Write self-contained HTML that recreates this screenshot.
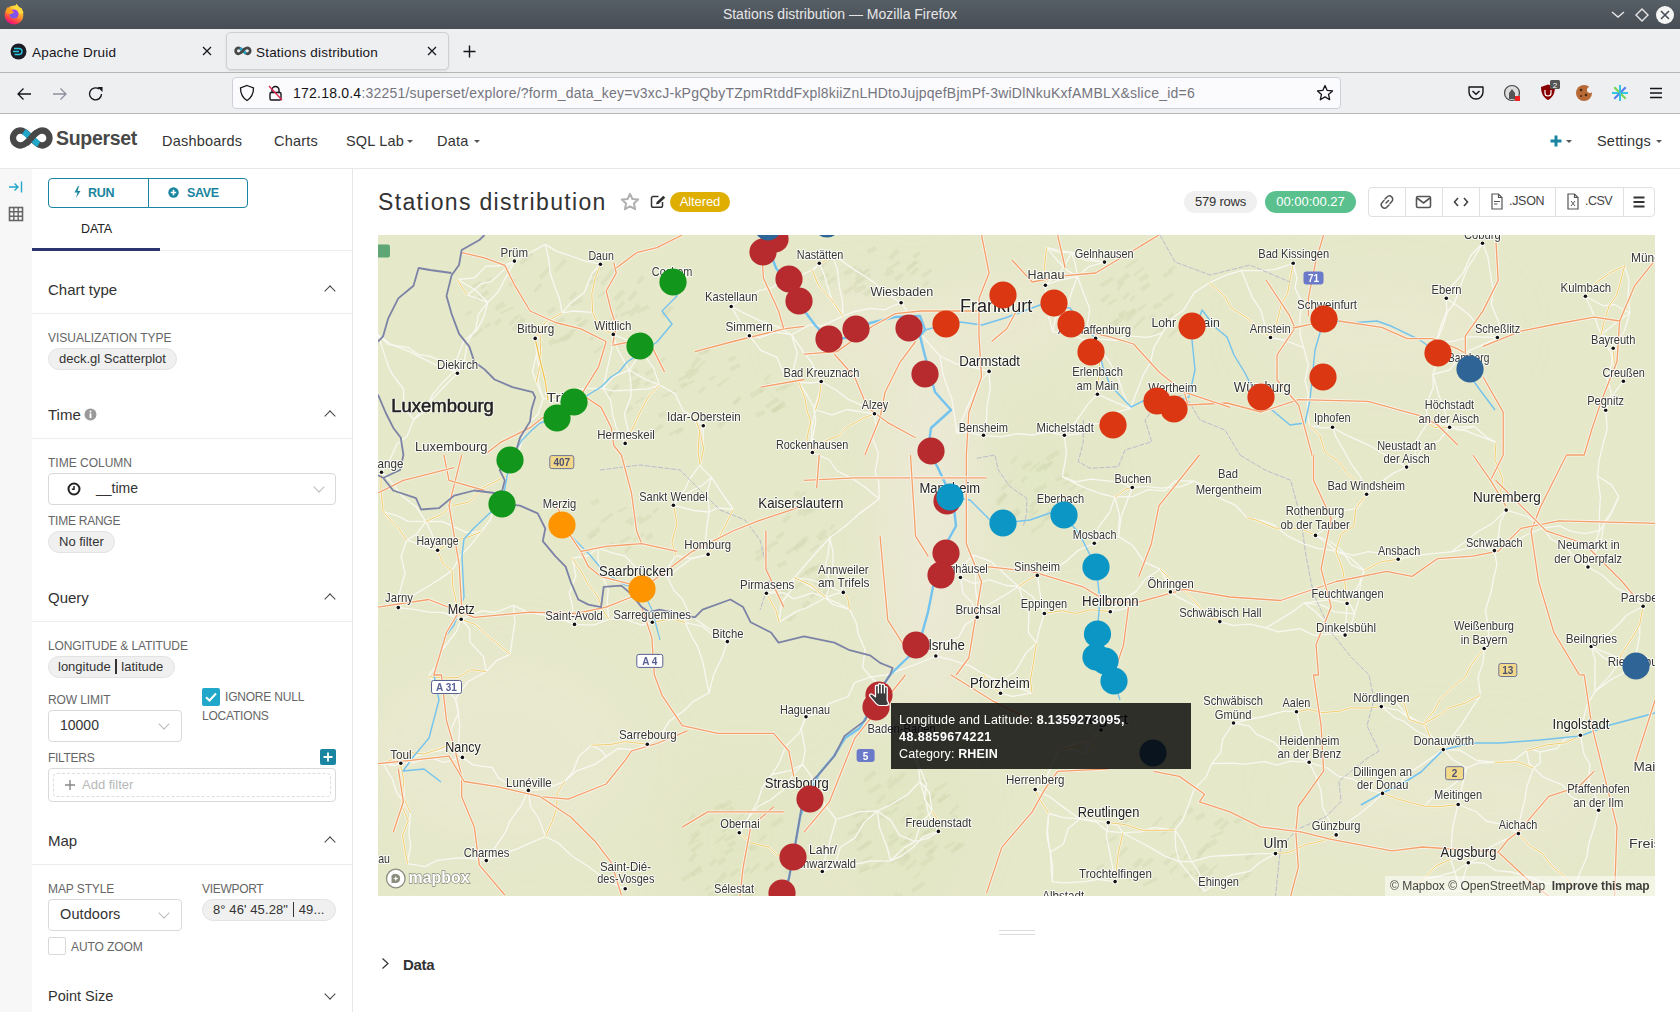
<!DOCTYPE html>
<html><head><meta charset="utf-8">
<style>
*{box-sizing:border-box;margin:0;padding:0}
html,body{width:1680px;height:1012px;overflow:hidden;background:#fff;font-family:"Liberation Sans",sans-serif;color:#333;position:relative}
.a{position:absolute;white-space:nowrap}
#titlebar{left:0;top:0;width:1680px;height:29px;background:linear-gradient(#565e66,#474d55)}
#tabbar{left:0;top:29px;width:1680px;height:43px;background:#eeeff1}
#navbar{left:0;top:72px;width:1680px;height:41px;background:#eeeff1;border-top:1px solid #b4b6b4}
#navsep{left:0;top:113px;width:1680px;height:1px;background:#b8bab8}
#sstop{left:0;top:114px;width:1680px;height:55px;background:#fff;border-bottom:1px solid #e8e8e8}
#rail{left:0;top:169px;width:32px;height:843px;background:#f7f7f7}
#panel{left:32px;top:169px;width:321px;height:843px;background:#fff;border-right:1px solid #e6e6e6}
.lbl{font-size:12px;color:#666;letter-spacing:0}
.sec{font-size:15px;color:#323232}
.hr{height:1px;background:#ececec}
.pill{background:#f0f0f0;border:1px solid #e3e3e3;border-radius:12px;font-size:13px;color:#333;height:22px;line-height:20px;padding:0 10px}
.sel{border:1px solid #d9d9d9;border-radius:4px;background:#fff;font-size:14.5px;color:#333}
.chev{width:8px;height:8px;border-left:1.5px solid #444;border-top:1.5px solid #444;transform:rotate(45deg)}
.chevd{width:8px;height:8px;border-right:1.3px solid #bbb;border-bottom:1.3px solid #bbb;transform:rotate(45deg)}
</style></head><body>
<!-- Firefox title bar -->
<div id="titlebar" class="a"></div>
<div class="a" style="left:0;top:0;width:1680px;height:29px;line-height:29px;text-align:center;font-size:14px;color:#e6e6e6">Stations distribution — Mozilla Firefox</div>
<div id="tabbar" class="a"></div>
<div id="navbar" class="a"></div>
<div id="navsep" class="a"></div>
<div id="sstop" class="a"></div>
<!-- firefox icon -->
<svg class="a" style="left:0;top:0" width="28" height="28" viewBox="0 0 28 28">
<defs><linearGradient id="ffr" x1="0.8" y1="0.1" x2="0.35" y2="0.95"><stop offset="0" stop-color="#ffe845"/><stop offset="0.45" stop-color="#ff9b2c"/><stop offset="0.8" stop-color="#ff3e48"/><stop offset="1" stop-color="#e8167c"/></linearGradient>
<radialGradient id="ffp" cx="0.4" cy="0.7" r="0.7"><stop offset="0" stop-color="#6d5ee8"/><stop offset="1" stop-color="#a142f0"/></radialGradient></defs>
<circle cx="14" cy="15" r="9.4" fill="url(#ffr)"/>
<path d="M13 9.5 L16.4 3.8 L19.6 7.6 L21.6 8.2 L23.6 13 L19.5 14Z" fill="#ffdc3c"/>
<circle cx="14" cy="14" r="4.6" fill="url(#ffp)"/>
<path d="M6.3 12.8 L7 6.8 L8.5 8.9 L10.2 7.2 L10.9 9.6 L14 12.3 L10.8 14.3 L8.8 13.4Z" fill="#ff9f1c"/>
</svg>
<!-- window controls -->
<svg class="a" style="left:1608px;top:6px" width="70" height="18" viewBox="0 0 70 18">
<path d="M4 6 L10 11 L16 6" fill="none" stroke="#e8e8e8" stroke-width="1.4"/>
<path d="M34 3 L40 9 L34 15 L28 9Z" fill="none" stroke="#e8e8e8" stroke-width="1.4"/>
<circle cx="57" cy="9" r="9" fill="#f5f5f5"/><path d="M53 5 L61 13 M61 5 L53 13" stroke="#474e57" stroke-width="1.6"/></svg>
<!-- tabs -->
<div class="a" style="left:227px;top:33px;width:221px;height:36px;border-radius:4px;background:#eeeff1;box-shadow:0 0 0 1px #cfd0d0,0 1px 3px rgba(0,0,0,0.18)"></div>
<svg class="a" style="left:10px;top:43px" width="17" height="17" viewBox="0 0 17 17"><circle cx="8.5" cy="8.5" r="8" fill="#1c1c26"/><path d="M4 5.5 H9 A3 3 0 0 1 9 11.5 H5 M3 8.5 H9 M4 11.5 H4.5" fill="none" stroke="#2ac6de" stroke-width="1.4"/></svg>
<div class="a" style="left:32px;top:44px;font-size:13.5px;line-height:17px;color:#15141a;letter-spacing:0.2px">Apache Druid</div>
<svg class="a" style="left:201px;top:45px" width="12" height="12" viewBox="0 0 12 12"><path d="M2 2 L10 10 M10 2 L2 10" stroke="#15141a" stroke-width="1.2"/></svg>
<svg class="a" style="left:234px;top:46px" width="18" height="10" viewBox="0 0 45 23">
<path d="M22.25 11 C19.5 8 16 3.5 11.5 3.5 A7.5 7.5 0 0 0 11.5 18.5 C16 18.5 19.5 14 22.25 11 C25 8 28.5 3.5 33 3.5 A7.5 7.5 0 0 1 33 18.5 C28.5 18.5 25 14 22.25 11 Z" fill="none" stroke="#484848" stroke-width="6.8"/>
<path d="M14.8 4.6 C17.2 6.2 19.2 8.4 21 10" fill="none" stroke="#20a7c9" stroke-width="6.8"/>
<path d="M23.5 12 C25.3 13.6 27.3 15.8 29.7 17.4" fill="none" stroke="#20a7c9" stroke-width="6.8"/>
<path d="M17 16.6 C19.5 14.6 21 12.6 22.25 11 C23.5 9.4 25 7.4 27.5 5.4" fill="none" stroke="#484848" stroke-width="6.8"/>
</svg>
<div class="a" style="left:256px;top:44px;font-size:13.5px;line-height:17px;color:#15141a;letter-spacing:0.2px">Stations distribution</div>
<svg class="a" style="left:426px;top:45px" width="12" height="12" viewBox="0 0 12 12"><path d="M2 2 L10 10 M10 2 L2 10" stroke="#15141a" stroke-width="1.2"/></svg>
<svg class="a" style="left:462px;top:44px" width="15" height="15" viewBox="0 0 15 15"><path d="M7.5 1.5 V13.5 M1.5 7.5 H13.5" stroke="#15141a" stroke-width="1.4"/></svg>
<!-- nav -->
<svg class="a" style="left:16px;top:86px" width="16" height="16" viewBox="0 0 16 16"><path d="M15 8 H2 M7.5 2.5 L2 8 L7.5 13.5" fill="none" stroke="#15141a" stroke-width="1.3"/></svg>
<svg class="a" style="left:52px;top:86px" width="16" height="16" viewBox="0 0 16 16"><path d="M1 8 H14 M8.5 2.5 L14 8 L8.5 13.5" fill="none" stroke="#8f8f9d" stroke-width="1.3"/></svg>
<svg class="a" style="left:88px;top:86px" width="16" height="16" viewBox="0 0 16 16"><path d="M13.5 8 A6 6 0 1 1 11 3" fill="none" stroke="#15141a" stroke-width="1.4"/><path d="M9.5 1 L14.5 1 L14.5 6Z" fill="#15141a"/></svg>
<div class="a" style="left:232px;top:77px;width:1109px;height:32px;border-radius:4px;background:#fbfbfd;border:1px solid #cfcfd8"></div>
<svg class="a" style="left:239px;top:84px" width="16" height="18" viewBox="0 0 16 18"><path d="M8 1.5 L14.5 4 C14.5 10 12 14 8 16.5 C4 14 1.5 10 1.5 4Z" fill="none" stroke="#15141a" stroke-width="1.3"/></svg>
<svg class="a" style="left:267px;top:84px" width="17" height="18" viewBox="0 0 17 18"><path d="M5 8 V6 A3.5 3.5 0 0 1 12 6 V8" fill="none" stroke="#15141a" stroke-width="1.4"/><rect x="3" y="8.5" width="11" height="7.5" rx="1.2" fill="none" stroke="#15141a" stroke-width="1.4"/><path d="M2 2 L15 16" stroke="#e22850" stroke-width="1.4"/></svg>
<div class="a" style="left:293px;top:85px;font-size:14px;line-height:16px;color:#75757d;letter-spacing:0.22px"><span style="color:#15141a">172.18.0.4</span>:32251/superset/explore/?form_data_key=v3xcJ-kPgQbyTZpmRtddFxpl8kiiZnLHDtoJujpqefBjmPf-3wiDlNkuKxfAMBLX&amp;slice_id=6</div>
<svg class="a" style="left:1316px;top:84px" width="18" height="18" viewBox="0 0 18 18"><path d="M9 1.5 L11.2 6.4 L16.5 6.9 L12.5 10.4 L13.7 15.7 L9 12.9 L4.3 15.7 L5.5 10.4 L1.5 6.9 L6.8 6.4Z" fill="none" stroke="#15141a" stroke-width="1.3" stroke-linejoin="round"/></svg>
<!-- extension icons -->
<svg class="a" style="left:1467px;top:85px" width="18" height="16" viewBox="0 0 18 16"><path d="M2 2 H16 V7 A7 7 0 0 1 2 7Z" fill="none" stroke="#15141a" stroke-width="1.4" stroke-linejoin="round"/><path d="M5.5 6 L9 9.3 L12.5 6" fill="none" stroke="#15141a" stroke-width="1.5"/></svg>
<svg class="a" style="left:1503px;top:84px" width="18" height="18" viewBox="0 0 18 18"><circle cx="9" cy="9" r="7.5" fill="#ddd" stroke="#444" stroke-width="1.2"/><path d="M6 15 V9 L9 5 L12 9 V15" fill="#555"/><rect x="12" y="12" width="5" height="5" fill="#e22"/></svg>
<svg class="a" style="left:1539px;top:80px" width="22" height="22" viewBox="0 0 22 22"><path d="M2 7 L9 4.5 L16 7 C16 14 13 18 9 20 C5 18 2 14 2 7Z" fill="#800"/><rect x="11" y="0" width="10" height="9" rx="1.5" fill="#555"/><text x="16" y="7.5" font-size="8" fill="#fff" text-anchor="middle" font-family="Liberation Sans">2</text><path d="M6 10 V13 A3 3 0 0 0 12 13 V10" fill="none" stroke="#fff" stroke-width="1.2"/></svg>
<svg class="a" style="left:1575px;top:84px" width="18" height="18" viewBox="0 0 18 18"><circle cx="9" cy="9" r="8" fill="#b86a36"/><circle cx="6" cy="6" r="1.3" fill="#4a2810"/><circle cx="11" cy="11" r="1.3" fill="#4a2810"/><circle cx="6" cy="12" r="1" fill="#4a2810"/><circle cx="15" cy="6" r="3" fill="#f0f0f4"/></svg>
<svg class="a" style="left:1610px;top:83px" width="20" height="20" viewBox="0 0 20 20"><path d="M2 10 H18" stroke="#36c5e0" stroke-width="2"/><path d="M4.3 4.3 L15.7 15.7" stroke="#74d654" stroke-width="2"/><path d="M15.7 4.3 L4.3 15.7" stroke="#4f7ef0" stroke-width="2"/><path d="M10 2 V18" stroke="#36c5e0" stroke-width="2"/></svg>
<svg class="a" style="left:1649px;top:87px" width="14" height="12" viewBox="0 0 14 12"><path d="M1 1.5 H13 M1 6 H13 M1 10.5 H13" stroke="#15141a" stroke-width="1.3"/></svg>

<div id="rail" class="a"></div>
<div id="panel" class="a"></div>

<!-- superset navbar -->
<svg class="a" style="left:9px;top:127px" width="45" height="23" viewBox="0 0 45 23">
<path d="M22.25 11 C19.5 8 16 3.5 11.5 3.5 A7.5 7.5 0 0 0 11.5 18.5 C16 18.5 19.5 14 22.25 11 C25 8 28.5 3.5 33 3.5 A7.5 7.5 0 0 1 33 18.5 C28.5 18.5 25 14 22.25 11 Z" fill="none" stroke="#484848" stroke-width="6.3"/>
<path d="M14.8 4.6 C17.2 6.2 19.2 8.4 21 10" fill="none" stroke="#20a7c9" stroke-width="6.3"/>
<path d="M23.5 12 C25.3 13.6 27.3 15.8 29.7 17.4" fill="none" stroke="#20a7c9" stroke-width="6.3"/>
<path d="M17 16.6 C19.5 14.6 21 12.6 22.25 11 C23.5 9.4 25 7.4 27.5 5.4" fill="none" stroke="#484848" stroke-width="6.3"/>
</svg>
<div class="a" style="left:56px;top:127px;font-size:19.5px;line-height:22px;font-weight:700;color:#484848;letter-spacing:-0.3px">Superset</div>
<div class="a" style="left:162px;top:133px;font-size:14.5px;line-height:17px;color:#333;letter-spacing:0.2px">Dashboards</div>
<div class="a" style="left:274px;top:133px;font-size:14.5px;line-height:17px;color:#333;letter-spacing:0.2px">Charts</div>
<div class="a" style="left:346px;top:133px;font-size:14.5px;line-height:17px;color:#333;letter-spacing:0.2px">SQL Lab</div>
<div class="a" style="left:407px;top:140px;width:0;height:0;border-left:3px solid transparent;border-right:3px solid transparent;border-top:3.5px solid #555"></div>
<div class="a" style="left:437px;top:133px;font-size:14.5px;line-height:17px;color:#333;letter-spacing:0.2px">Data</div>
<div class="a" style="left:474px;top:140px;width:0;height:0;border-left:3px solid transparent;border-right:3px solid transparent;border-top:3.5px solid #555"></div>
<svg class="a" style="left:1550px;top:135px" width="12" height="12" viewBox="0 0 12 12"><path d="M6 0.5 V11.5 M0.5 6 H11.5" stroke="#1a85a0" stroke-width="3"/></svg>
<div class="a" style="left:1566px;top:140px;width:0;height:0;border-left:3px solid transparent;border-right:3px solid transparent;border-top:3.5px solid #555"></div>
<div class="a" style="left:1597px;top:133px;font-size:14.5px;line-height:17px;color:#333;letter-spacing:0.2px">Settings</div>
<div class="a" style="left:1656px;top:140px;width:0;height:0;border-left:3px solid transparent;border-right:3px solid transparent;border-top:3.5px solid #555"></div>
<!-- rail icons -->
<svg class="a" style="left:8px;top:180px" width="16" height="14" viewBox="0 0 16 14"><path d="M1 7 H10 M6.5 3.5 L10 7 L6.5 10.5" fill="none" stroke="#20a7c9" stroke-width="1.4"/><path d="M13.5 1.5 V12.5" stroke="#20a7c9" stroke-width="1.4"/></svg>
<svg class="a" style="left:8px;top:206px" width="16" height="16" viewBox="0 0 16 16"><rect x="1.5" y="1.5" width="13" height="13" fill="none" stroke="#666" stroke-width="1.6"/><path d="M5.8 1.5 V14.5 M10.2 1.5 V14.5 M1.5 5.8 H14.5 M1.5 10.2 H14.5" stroke="#666" stroke-width="1.4"/></svg>
<!-- left panel -->
<div class="a" style="left:48px;top:178px;width:200px;height:30px;border:1px solid #1a85a0;border-radius:4px"></div>
<div class="a" style="left:148px;top:178px;width:1px;height:30px;background:#1a85a0"></div>
<svg class="a" style="left:73px;top:185px" width="9" height="14" viewBox="0 0 9 14"><path d="M5 1 L1.5 7.5 H4.5 L3 13 L7.5 6 H4.5 L6 1Z" fill="#1a85a0"/></svg>
<div class="a" style="left:88px;top:186px;font-size:12.5px;line-height:15px;font-weight:700;color:#1a85a0;letter-spacing:-0.3px">RUN</div>
<svg class="a" style="left:168px;top:187px" width="11" height="11" viewBox="0 0 11 11"><circle cx="5.5" cy="5.5" r="5.2" fill="#1a85a0"/><path d="M5.5 2.8 V8.2 M2.8 5.5 H8.2" stroke="#fff" stroke-width="1.6"/></svg>
<div class="a" style="left:187px;top:186px;font-size:12.5px;line-height:15px;font-weight:700;color:#1a85a0;letter-spacing:-0.3px">SAVE</div>
<div class="a" style="left:81px;top:222px;font-size:12.5px;line-height:15px;color:#222;letter-spacing:-0.1px">DATA</div>
<div class="a" style="left:32px;top:250px;width:320px;height:1px;background:#ececec"></div>
<div class="a" style="left:32px;top:248px;width:128px;height:3px;background:#2b3670"></div>

<div class="a sec" style="left:48px;top:281px;line-height:18px">Chart type</div>
<div class="a chev" style="left:326px;top:287px"></div>
<div class="a hr" style="left:32px;top:313px;width:320px"></div>
<div class="a lbl" style="left:48px;top:331px;line-height:14px">VISUALIZATION TYPE</div>
<div class="a pill" style="left:48px;top:348px;width:129px">deck.gl Scatterplot</div>

<div class="a sec" style="left:48px;top:406px;line-height:18px">Time</div>
<svg class="a" style="left:84px;top:408px" width="13" height="13" viewBox="0 0 13 13"><circle cx="6.5" cy="6.5" r="6" fill="#999"/><rect x="5.6" y="5.3" width="1.8" height="4.8" fill="#fff"/><circle cx="6.5" cy="3.5" r="1" fill="#fff"/></svg>
<div class="a chev" style="left:326px;top:412px"></div>
<div class="a hr" style="left:32px;top:438px;width:320px"></div>
<div class="a lbl" style="left:48px;top:456px;line-height:14px">TIME COLUMN</div>
<div class="a sel" style="left:48px;top:473px;width:288px;height:32px"></div>
<svg class="a" style="left:67px;top:482px" width="14" height="14" viewBox="0 0 14 14"><circle cx="7" cy="7" r="5.5" fill="none" stroke="#222" stroke-width="2"/><path d="M7 4 V7.3 H4.8" fill="none" stroke="#222" stroke-width="1.5"/></svg>
<div class="a" style="left:96px;top:480px;font-size:14px;line-height:17px;color:#333">__time</div>
<div class="a chevd" style="left:315px;top:483px"></div>
<div class="a lbl" style="left:48px;top:514px;line-height:14px;letter-spacing:-0.25px">TIME RANGE</div>
<div class="a pill" style="left:48px;top:531px;width:67px">No filter</div>

<div class="a sec" style="left:48px;top:589px;line-height:18px">Query</div>
<div class="a chev" style="left:326px;top:595px"></div>
<div class="a hr" style="left:32px;top:621px;width:320px"></div>
<div class="a lbl" style="left:48px;top:639px;line-height:14px;letter-spacing:-0.1px">LONGITUDE &amp; LATITUDE</div>
<div class="a pill" style="left:48px;top:656px;width:127px;padding:0 9px">longitude <span style="display:inline-block;width:1.3px;height:15px;background:#333;vertical-align:-3px;margin:0 1px"></span> latitude</div>
<div class="a lbl" style="left:48px;top:693px;line-height:14px;letter-spacing:-0.1px">ROW LIMIT</div>
<div class="a sel" style="left:48px;top:710px;width:134px;height:32px"></div>
<div class="a" style="left:60px;top:717px;font-size:14px;line-height:17px;color:#333">10000</div>
<div class="a chevd" style="left:160px;top:720px"></div>
<div class="a" style="left:202px;top:688px;width:18px;height:18px;background:#20a7c9;border-radius:2px"></div>
<svg class="a" style="left:202px;top:688px" width="18" height="18" viewBox="0 0 18 18"><path d="M4 9.2 L7.5 12.5 L14 5.5" fill="none" stroke="#fff" stroke-width="2"/></svg>
<div class="a lbl" style="left:225px;top:690px;line-height:14px;letter-spacing:-0.2px">IGNORE NULL</div>
<div class="a lbl" style="left:202px;top:709px;line-height:14px;letter-spacing:-0.2px">LOCATIONS</div>
<div class="a lbl" style="left:48px;top:751px;line-height:14px;letter-spacing:-0.3px">FILTERS</div>
<div class="a" style="left:320px;top:749px;width:16px;height:16px;background:#1a85a0;border-radius:2px"></div>
<svg class="a" style="left:320px;top:749px" width="16" height="16" viewBox="0 0 16 16"><path d="M8 3.5 V12.5 M3.5 8 H12.5" stroke="#fff" stroke-width="1.8"/></svg>
<div class="a" style="left:48px;top:768px;width:288px;height:34px;border:1px solid #d9d9d9;border-radius:4px"></div>
<div class="a" style="left:53px;top:773px;width:278px;height:24px;border:1px dashed #ddd;border-radius:4px"></div>
<svg class="a" style="left:64px;top:779px" width="12" height="12" viewBox="0 0 12 12"><path d="M6 1 V11 M1 6 H11" stroke="#888" stroke-width="1.4"/></svg>
<div class="a" style="left:82px;top:777px;font-size:13px;line-height:15px;color:#b8b8b8">Add filter</div>

<div class="a sec" style="left:48px;top:832px;line-height:18px">Map</div>
<div class="a chev" style="left:326px;top:838px"></div>
<div class="a hr" style="left:32px;top:864px;width:320px"></div>
<div class="a lbl" style="left:48px;top:882px;line-height:14px;letter-spacing:-0.1px">MAP STYLE</div>
<div class="a lbl" style="left:202px;top:882px;line-height:14px;letter-spacing:-0.3px">VIEWPORT</div>
<div class="a sel" style="left:48px;top:899px;width:134px;height:32px"></div>
<div class="a" style="left:60px;top:906px;font-size:14.5px;line-height:17px;color:#333;letter-spacing:0.1px">Outdoors</div>
<div class="a chevd" style="left:160px;top:909px"></div>
<div class="a pill" style="left:202px;top:899px;width:134px;padding:0 0 0 10px;letter-spacing:0.1px">8° 46' 45.28" <span style="display:inline-block;width:1.3px;height:15px;background:#333;vertical-align:-3px;margin:0 1px"></span> 49...</div>
<div class="a" style="left:48px;top:937px;width:18px;height:18px;border:1px solid #d9d9d9;border-radius:2px;background:#fff"></div>
<div class="a lbl" style="left:71px;top:940px;line-height:14px;letter-spacing:-0.1px">AUTO ZOOM</div>
<div class="a sec" style="left:48px;top:987px;line-height:18px;font-size:14.5px">Point Size</div>
<div class="a" style="left:326px;top:990px;width:8px;height:8px;border-right:1.5px solid #444;border-bottom:1.5px solid #444;transform:rotate(45deg)"></div>


<!-- chart header -->
<div class="a" style="left:378px;top:189px;font-size:23px;line-height:26px;color:#323232;letter-spacing:1.33px">Stations distribution</div>
<svg class="a" style="left:620px;top:192px" width="20" height="19" viewBox="0 0 20 19"><path d="M10 1.8 L12.4 7 L18.2 7.6 L13.9 11.5 L15.1 17.2 L10 14.3 L4.9 17.2 L6.1 11.5 L1.8 7.6 L7.6 7Z" fill="none" stroke="#b0b0b0" stroke-width="2" stroke-linejoin="round"/></svg>
<svg class="a" style="left:650px;top:195px" width="17" height="14" viewBox="0 0 17 14"><path d="M8.5 1.6 H3 A1.5 1.5 0 0 0 1.5 3.1 V10.8 A1.5 1.5 0 0 0 3 12.3 H11 A1.5 1.5 0 0 0 12.5 10.8 V7" fill="none" stroke="#333" stroke-width="1.5"/><path d="M6 9.3 L6.6 7 L13.3 0.8 L15.2 2.7 L8.6 8.9Z" fill="#333"/></svg>
<div class="a" style="left:670px;top:192px;width:60px;height:20px;border-radius:10px;background:#deae00;color:#fff;font-size:13px;line-height:20px;text-align:center;letter-spacing:-0.1px">Altered</div>
<div class="a" style="left:1184px;top:191px;width:73px;height:22px;border-radius:11px;background:#f0f0f0;color:#333;font-size:13px;line-height:22px;text-align:center;letter-spacing:-0.2px">579 rows</div>
<div class="a" style="left:1265px;top:191px;width:91px;height:22px;border-radius:11px;background:#5ac18e;color:#fff;font-size:13px;line-height:22px;text-align:center">00:00:00.27</div>
<div class="a" style="left:1368px;top:187px;width:287px;height:30px;border:1px solid #e0e0e0;border-radius:4px"></div>
<div class="a" style="left:1405px;top:188px;width:1px;height:28px;background:#e0e0e0"></div>
<div class="a" style="left:1442px;top:188px;width:1px;height:28px;background:#e0e0e0"></div>
<div class="a" style="left:1479px;top:188px;width:1px;height:28px;background:#e0e0e0"></div>
<div class="a" style="left:1555px;top:188px;width:1px;height:28px;background:#e0e0e0"></div>
<div class="a" style="left:1623px;top:188px;width:1px;height:28px;background:#e0e0e0"></div>
<svg class="a" style="left:1379px;top:194px" width="16" height="16" viewBox="0 0 16 16"><path d="M7 9 L9.5 6.5 M6 5 L8 3 A2.5 2.5 0 0 1 12.8 7.5 L11 9.5 M10 11 L8 13 A2.5 2.5 0 0 1 3.2 8.5 L5 6.5" fill="none" stroke="#555" stroke-width="1.5" stroke-linecap="round"/></svg>
<svg class="a" style="left:1415px;top:195px" width="17" height="14" viewBox="0 0 17 14"><rect x="1.5" y="1.5" width="14" height="11" rx="1.5" fill="none" stroke="#555" stroke-width="1.6"/><path d="M2 3 L8.5 8 L15 3" fill="none" stroke="#555" stroke-width="1.6"/></svg>
<svg class="a" style="left:1453px;top:196px" width="16" height="12" viewBox="0 0 16 12"><path d="M5 2 L1.5 6 L5 10 M11 2 L14.5 6 L11 10" fill="none" stroke="#444" stroke-width="1.6"/></svg>
<svg class="a" style="left:1491px;top:193px" width="12" height="17" viewBox="0 0 12 17"><path d="M1 1 H7.5 L11 4.5 V16 H1Z M7.5 1 V4.5 H11" fill="none" stroke="#555" stroke-width="1.2"/><path d="M3 8.5 H9 M3 11 H6.5" stroke="#555" stroke-width="1.1"/></svg>
<div class="a" style="left:1509px;top:194px;font-size:12.5px;line-height:15px;color:#444;letter-spacing:-0.3px">.JSON</div>
<svg class="a" style="left:1567px;top:193px" width="12" height="17" viewBox="0 0 12 17"><path d="M1 1 H7.5 L11 4.5 V16 H1Z M7.5 1 V4.5 H11" fill="none" stroke="#555" stroke-width="1.2"/><path d="M4 8 L8 13 M8 8 L4 13" stroke="#555" stroke-width="1"/></svg>
<div class="a" style="left:1585px;top:194px;font-size:12.5px;line-height:15px;color:#444;letter-spacing:-0.5px">.CSV</div>
<svg class="a" style="left:1633px;top:196px" width="12" height="12" viewBox="0 0 12 12"><path d="M0.5 1.5 H11.5 M0.5 6 H11.5 M0.5 10.5 H11.5" stroke="#333" stroke-width="1.9"/></svg>
<!-- bottom -->
<div class="a" style="left:999px;top:930px;width:36px;height:1px;background:#dcdcdc"></div>
<div class="a" style="left:999px;top:934px;width:36px;height:1px;background:#dcdcdc"></div>
<svg class="a" style="left:381px;top:957px" width="9" height="13" viewBox="0 0 9 13"><path d="M1.5 1.5 L7 6.5 L1.5 11.5" fill="none" stroke="#333" stroke-width="1.2"/></svg>
<div class="a" style="left:403px;top:956px;font-size:15px;line-height:18px;font-weight:700;color:#323232;letter-spacing:-0.3px">Data</div>

<!-- MAP -->
<div id="map" class="a" style="left:378px;top:235px;width:1277px;height:661px;background:#e5e8c9;overflow:hidden"><svg width="1277" height="661" viewBox="0 0 1277 661" style="position:absolute;left:0;top:0">
<defs><filter id="bl" x="-50%" y="-50%" width="200%" height="200%"><feGaussianBlur stdDeviation="25"/></filter></defs>
<g filter="url(#bl)">
<ellipse cx="552" cy="285" rx="45" ry="200" fill="#ece9d6" opacity="0.85"/>
<ellipse cx="482" cy="95" rx="60" ry="40" fill="#ece9d6" opacity="0.6"/>
<ellipse cx="622" cy="85" rx="70" ry="40" fill="#ece9d6" opacity="0.6"/>
<ellipse cx="122" cy="515" rx="140" ry="100" fill="#ebe9d4" opacity="0.45"/>
<ellipse cx="1002" cy="95" rx="120" ry="60" fill="#ebe9d4" opacity="0.4"/>
<ellipse cx="1072" cy="565" rx="160" ry="60" fill="#ebe9d4" opacity="0.35"/>
<ellipse cx="527" cy="585" rx="55" ry="80" fill="#dfe5c0" opacity="0.5"/>
<ellipse cx="362" cy="605" rx="60" ry="60" fill="#dfe5c0" opacity="0.5"/>
<ellipse cx="662" cy="245" rx="40" ry="50" fill="#dfe5c0" opacity="0.4"/>
</g>
<polygon points="482.6,616.4 494.8,607.2 492.7,604.5 480.6,613.7" fill="#cdd2aa" opacity="0.32"/>
<polygon points="502.9,583.7 512.6,578.3 510.8,574.9 501.0,580.3" fill="#cdd2aa" opacity="0.32"/>
<polygon points="550.4,620.2 556.3,616.6 553.9,612.8 548.0,616.4" fill="#cdd2aa" opacity="0.32"/>
<polygon points="574.2,619.1 587.2,610.3 585.0,607.0 572.0,615.8" fill="#cdd2aa" opacity="0.32"/>
<polygon points="527.6,607.0 535.4,598.9 533.8,597.3 526.0,605.5" fill="#cdd2aa" opacity="0.32"/>
<polygon points="523.5,611.1 533.0,606.1 531.4,603.2 522.0,608.1" fill="#cdd2aa" opacity="0.32"/>
<polygon points="480.2,593.3 488.9,586.4 486.4,583.3 477.8,590.2" fill="#cdd2aa" opacity="0.32"/>
<polygon points="511.7,669.9 525.3,661.6 523.0,657.8 509.3,666.0" fill="#cdd2aa" opacity="0.32"/>
<polygon points="513.2,628.9 520.9,624.5 519.8,622.6 512.1,627.0" fill="#cdd2aa" opacity="0.32"/>
<polygon points="482.7,637.2 491.5,632.6 489.3,628.3 480.5,632.8" fill="#cdd2aa" opacity="0.32"/>
<polygon points="545.9,599.7 559.8,593.7 558.4,590.5 544.6,596.6" fill="#cdd2aa" opacity="0.32"/>
<polygon points="512.2,612.2 521.1,603.7 518.1,600.5 509.2,609.1" fill="#cdd2aa" opacity="0.32"/>
<polygon points="550.5,623.3 560.9,611.6 557.7,608.8 547.3,620.4" fill="#cdd2aa" opacity="0.32"/>
<polygon points="526.7,621.2 531.3,616.4 528.1,613.3 523.5,618.1" fill="#cdd2aa" opacity="0.32"/>
<polygon points="491.6,582.3 496.9,576.4 493.8,573.6 488.5,579.5" fill="#cdd2aa" opacity="0.32"/>
<polygon points="512.6,580.7 520.0,573.7 518.1,571.8 510.8,578.8" fill="#cdd2aa" opacity="0.32"/>
<polygon points="574.0,588.4 580.3,582.0 577.0,578.7 570.6,585.2" fill="#cdd2aa" opacity="0.32"/>
<polygon points="481.7,638.4 493.1,633.5 492.2,631.4 480.8,636.3" fill="#cdd2aa" opacity="0.32"/>
<polygon points="529.4,635.4 539.4,626.0 537.4,623.9 527.4,633.2" fill="#cdd2aa" opacity="0.32"/>
<polygon points="537.7,608.8 547.4,602.1 545.9,599.9 536.1,606.6" fill="#cdd2aa" opacity="0.32"/>
<polygon points="496.0,634.9 508.7,625.9 506.8,623.1 494.0,632.1" fill="#cdd2aa" opacity="0.32"/>
<polygon points="540.5,576.6 547.2,573.0 544.9,568.9 538.3,572.4" fill="#cdd2aa" opacity="0.32"/>
<polygon points="524.2,632.0 533.5,622.4 530.0,619.0 520.7,628.6" fill="#cdd2aa" opacity="0.32"/>
<polygon points="573.4,580.3 581.3,571.3 578.9,569.1 570.9,578.2" fill="#cdd2aa" opacity="0.32"/>
<polygon points="577.8,615.9 583.8,610.1 580.9,607.1 574.9,613.0" fill="#cdd2aa" opacity="0.32"/>
<polygon points="542.8,550.0 550.5,545.4 549.2,543.3 541.5,547.8" fill="#cdd2aa" opacity="0.32"/>
<polygon points="547.3,614.1 556.9,607.7 554.4,603.9 544.8,610.4" fill="#cdd2aa" opacity="0.32"/>
<polygon points="514.9,664.4 520.7,658.8 519.2,657.3 513.5,662.9" fill="#cdd2aa" opacity="0.32"/>
<polygon points="512.0,604.3 518.3,599.8 516.5,597.3 510.2,601.7" fill="#cdd2aa" opacity="0.32"/>
<polygon points="544.5,632.1 557.0,624.0 554.4,619.9 541.8,627.9" fill="#cdd2aa" opacity="0.32"/>
<polygon points="510.3,548.6 515.0,542.9 513.3,541.6 508.7,547.3" fill="#cdd2aa" opacity="0.32"/>
<polygon points="559.9,568.8 573.0,560.2 571.9,558.5 558.8,567.1" fill="#cdd2aa" opacity="0.32"/>
<polygon points="479.2,606.8 485.2,599.8 481.4,596.6 475.4,603.5" fill="#cdd2aa" opacity="0.32"/>
<polygon points="476.4,583.5 489.2,575.7 487.1,572.1 474.2,580.0" fill="#cdd2aa" opacity="0.32"/>
<polygon points="537.7,534.4 546.3,530.3 544.5,526.6 536.0,530.7" fill="#cdd2aa" opacity="0.32"/>
<polygon points="547.1,568.1 558.5,560.1 555.9,556.4 544.5,564.4" fill="#cdd2aa" opacity="0.32"/>
<polygon points="500.5,570.1 508.3,561.2 505.4,558.7 497.6,567.6" fill="#cdd2aa" opacity="0.32"/>
<polygon points="487.6,547.8 498.9,538.2 496.2,535.0 484.9,544.6" fill="#cdd2aa" opacity="0.32"/>
<polygon points="521.4,547.3 528.2,539.4 524.8,536.5 517.9,544.3" fill="#cdd2aa" opacity="0.32"/>
<polygon points="524.0,588.4 532.5,579.9 530.0,577.5 521.5,585.9" fill="#cdd2aa" opacity="0.32"/>
<polygon points="511.9,554.2 520.6,545.7 517.3,542.3 508.6,550.7" fill="#cdd2aa" opacity="0.32"/>
<polygon points="553.7,603.3 562.4,594.0 560.5,592.2 551.8,601.5" fill="#cdd2aa" opacity="0.32"/>
<polygon points="561.8,568.5 569.5,561.5 566.4,558.0 558.6,565.0" fill="#cdd2aa" opacity="0.32"/>
<polygon points="510.9,572.3 520.2,567.9 518.4,563.9 509.0,568.3" fill="#cdd2aa" opacity="0.32"/>
<polygon points="549.0,570.7 557.0,562.0 554.8,560.0 546.8,568.7" fill="#cdd2aa" opacity="0.32"/>
<polygon points="470.9,601.3 484.1,595.3 482.4,591.6 469.2,597.5" fill="#cdd2aa" opacity="0.32"/>
<polygon points="520.5,628.1 527.9,620.6 525.9,618.6 518.5,626.1" fill="#cdd2aa" opacity="0.32"/>
<polygon points="485.5,627.3 495.2,622.3 493.9,619.7 484.2,624.7" fill="#cdd2aa" opacity="0.32"/>
<polygon points="561.2,592.1 567.2,589.1 566.3,587.2 560.3,590.3" fill="#cdd2aa" opacity="0.32"/>
<polygon points="567.3,614.3 577.6,608.6 576.2,606.1 565.9,611.7" fill="#cdd2aa" opacity="0.32"/>
<polygon points="542.9,601.5 552.3,596.5 551.3,594.7 542.0,599.6" fill="#cdd2aa" opacity="0.32"/>
<polygon points="527.3,624.7 532.4,620.7 529.9,617.6 524.9,621.7" fill="#cdd2aa" opacity="0.32"/>
<polygon points="491.8,559.5 503.8,552.1 501.2,547.9 489.3,555.4" fill="#cdd2aa" opacity="0.32"/>
<polygon points="536.4,644.0 542.6,639.2 541.3,637.6 535.2,642.4" fill="#cdd2aa" opacity="0.32"/>
<polygon points="518.9,569.7 526.3,565.1 524.7,562.5 517.3,567.1" fill="#cdd2aa" opacity="0.32"/>
<polygon points="479.1,592.7 490.9,586.1 489.4,583.3 477.5,589.9" fill="#cdd2aa" opacity="0.32"/>
<polygon points="536.9,590.6 547.2,579.2 544.1,576.4 533.8,587.8" fill="#cdd2aa" opacity="0.32"/>
<polygon points="480.1,616.6 492.4,607.9 490.6,605.3 478.3,614.0" fill="#cdd2aa" opacity="0.32"/>
<polygon points="557.1,557.6 570.0,549.3 568.2,546.4 555.2,554.8" fill="#cdd2aa" opacity="0.32"/>
<polygon points="535.0,657.4 547.2,650.1 545.1,646.8 533.0,654.1" fill="#cdd2aa" opacity="0.32"/>
<polygon points="365.1,667.8 377.8,658.5 374.9,654.5 362.2,663.9" fill="#cdd2aa" opacity="0.32"/>
<polygon points="361.5,594.3 372.8,584.3 369.7,580.9 358.4,590.9" fill="#cdd2aa" opacity="0.32"/>
<polygon points="388.3,636.7 397.4,629.7 394.8,626.3 385.7,633.3" fill="#cdd2aa" opacity="0.32"/>
<polygon points="409.4,626.9 414.0,622.1 410.8,619.1 406.2,623.9" fill="#cdd2aa" opacity="0.32"/>
<polygon points="327.7,656.4 333.6,652.0 332.1,650.0 326.2,654.4" fill="#cdd2aa" opacity="0.32"/>
<polygon points="344.3,575.6 354.5,567.8 351.5,564.0 341.3,571.8" fill="#cdd2aa" opacity="0.32"/>
<polygon points="371.9,614.5 377.9,608.9 375.5,606.3 369.5,611.9" fill="#cdd2aa" opacity="0.32"/>
<polygon points="347.4,580.5 356.5,574.0 353.9,570.3 344.8,576.8" fill="#cdd2aa" opacity="0.32"/>
<polygon points="339.6,650.4 349.7,640.1 346.4,636.8 336.3,647.1" fill="#cdd2aa" opacity="0.32"/>
<polygon points="389.3,580.7 397.2,572.6 394.5,570.0 386.7,578.1" fill="#cdd2aa" opacity="0.32"/>
<polygon points="310.4,610.5 321.5,605.6 320.6,603.7 309.6,608.5" fill="#cdd2aa" opacity="0.32"/>
<polygon points="314.8,617.6 325.9,609.0 323.7,606.1 312.5,614.6" fill="#cdd2aa" opacity="0.32"/>
<polygon points="346.9,606.8 357.3,602.2 355.9,599.2 345.6,603.9" fill="#cdd2aa" opacity="0.32"/>
<polygon points="381.2,607.3 389.5,600.5 388.0,598.7 379.7,605.5" fill="#cdd2aa" opacity="0.32"/>
<polygon points="377.2,576.4 384.6,568.7 382.5,566.6 375.0,574.4" fill="#cdd2aa" opacity="0.32"/>
<polygon points="313.8,586.7 318.4,581.1 315.0,578.3 310.4,584.0" fill="#cdd2aa" opacity="0.32"/>
<polygon points="363.0,642.7 372.6,634.2 370.7,632.0 361.0,640.5" fill="#cdd2aa" opacity="0.32"/>
<polygon points="338.2,608.9 348.8,600.9 347.4,599.0 336.8,607.0" fill="#cdd2aa" opacity="0.32"/>
<polygon points="353.7,642.2 362.3,634.8 360.1,632.3 351.5,639.7" fill="#cdd2aa" opacity="0.32"/>
<polygon points="317.2,637.0 323.5,632.8 322.1,630.6 315.8,634.8" fill="#cdd2aa" opacity="0.32"/>
<polygon points="323.2,592.2 336.2,585.6 334.4,582.2 321.5,588.8" fill="#cdd2aa" opacity="0.32"/>
<polygon points="359.0,664.3 369.4,654.7 366.2,651.3 355.8,660.8" fill="#cdd2aa" opacity="0.32"/>
<polygon points="331.5,663.1 338.9,659.5 336.7,655.0 329.3,658.6" fill="#cdd2aa" opacity="0.32"/>
<polygon points="373.2,639.1 382.0,629.2 379.9,627.3 371.1,637.3" fill="#cdd2aa" opacity="0.32"/>
<polygon points="371.7,592.1 382.3,583.2 380.8,581.4 370.1,590.3" fill="#cdd2aa" opacity="0.32"/>
<polygon points="351.1,612.4 358.3,609.0 356.6,605.3 349.3,608.8" fill="#cdd2aa" opacity="0.32"/>
<polygon points="373.9,616.7 382.7,610.0 380.1,606.6 371.3,613.3" fill="#cdd2aa" opacity="0.32"/>
<polygon points="345.5,598.3 349.8,593.2 348.0,591.7 343.7,596.9" fill="#cdd2aa" opacity="0.32"/>
<polygon points="313.0,608.6 321.1,600.2 319.4,598.5 311.3,606.9" fill="#cdd2aa" opacity="0.32"/>
<polygon points="369.3,666.5 379.7,654.5 376.1,651.4 365.7,663.3" fill="#cdd2aa" opacity="0.32"/>
<polygon points="408.7,638.7 416.5,631.5 413.6,628.3 405.8,635.5" fill="#cdd2aa" opacity="0.32"/>
<polygon points="313.1,627.6 319.6,619.6 316.6,617.2 310.1,625.2" fill="#cdd2aa" opacity="0.32"/>
<polygon points="337.8,574.6 344.5,570.7 342.8,567.8 336.1,571.7" fill="#cdd2aa" opacity="0.32"/>
<polygon points="334.0,631.5 338.8,625.5 336.1,623.3 331.3,629.2" fill="#cdd2aa" opacity="0.32"/>
<polygon points="394.9,592.7 405.8,585.5 403.2,581.6 392.4,588.8" fill="#cdd2aa" opacity="0.32"/>
<polygon points="315.0,641.7 324.7,636.4 322.3,632.1 312.6,637.3" fill="#cdd2aa" opacity="0.32"/>
<polygon points="349.1,667.8 361.0,661.4 358.9,657.6 347.1,663.9" fill="#cdd2aa" opacity="0.32"/>
<polygon points="304.5,646.9 317.3,639.6 315.3,636.0 302.4,643.3" fill="#cdd2aa" opacity="0.32"/>
<polygon points="356.5,588.5 366.3,579.7 364.8,578.1 355.0,586.9" fill="#cdd2aa" opacity="0.32"/>
<polygon points="348.1,620.3 356.0,615.0 353.8,611.7 345.9,617.0" fill="#cdd2aa" opacity="0.32"/>
<polygon points="359.0,668.0 369.7,661.1 368.1,658.6 357.4,665.4" fill="#cdd2aa" opacity="0.32"/>
<polygon points="314.5,604.3 322.8,598.9 320.1,594.7 311.8,600.2" fill="#cdd2aa" opacity="0.32"/>
<polygon points="335.2,578.7 348.3,569.8 347.2,568.1 334.1,576.9" fill="#cdd2aa" opacity="0.32"/>
<polygon points="352.2,594.1 359.1,586.9 357.6,585.4 350.6,592.6" fill="#cdd2aa" opacity="0.32"/>
<polygon points="341.6,630.4 348.5,625.5 345.7,621.6 338.8,626.6" fill="#cdd2aa" opacity="0.32"/>
<polygon points="379.2,326.9 389.0,320.5 386.2,316.3 376.5,322.7" fill="#cdd2aa" opacity="0.32"/>
<polygon points="423.9,313.0 431.5,303.8 428.2,301.0 420.6,310.3" fill="#cdd2aa" opacity="0.32"/>
<polygon points="433.0,317.3 441.5,310.8 440.0,308.9 431.5,315.4" fill="#cdd2aa" opacity="0.32"/>
<polygon points="409.3,320.0 421.8,310.8 419.8,308.2 407.4,317.4" fill="#cdd2aa" opacity="0.32"/>
<polygon points="399.8,304.8 407.0,299.6 404.7,296.4 397.5,301.6" fill="#cdd2aa" opacity="0.32"/>
<polygon points="412.4,386.8 418.8,380.5 417.4,379.1 411.0,385.4" fill="#cdd2aa" opacity="0.32"/>
<polygon points="431.9,336.7 444.0,330.8 442.7,328.0 430.5,333.9" fill="#cdd2aa" opacity="0.32"/>
<polygon points="418.6,316.9 428.9,304.9 425.2,301.7 414.9,313.8" fill="#cdd2aa" opacity="0.32"/>
<polygon points="441.6,304.9 449.3,297.3 445.8,293.8 438.2,301.4" fill="#cdd2aa" opacity="0.32"/>
<polygon points="378.3,319.3 390.4,314.0 389.1,310.9 376.9,316.2" fill="#cdd2aa" opacity="0.32"/>
<polygon points="433.0,279.1 438.6,274.6 436.2,271.6 430.6,276.0" fill="#cdd2aa" opacity="0.32"/>
<polygon points="421.0,344.8 429.8,337.7 428.3,335.8 419.5,342.9" fill="#cdd2aa" opacity="0.32"/>
<polygon points="406.5,288.1 413.2,282.6 410.8,279.7 404.2,285.2" fill="#cdd2aa" opacity="0.32"/>
<polygon points="421.4,280.9 435.2,272.8 432.7,268.6 419.0,276.8" fill="#cdd2aa" opacity="0.32"/>
<polygon points="418.0,354.5 430.4,346.2 428.0,342.6 415.6,350.9" fill="#cdd2aa" opacity="0.32"/>
<polygon points="404.6,358.4 415.1,351.1 413.0,348.1 402.5,355.4" fill="#cdd2aa" opacity="0.32"/>
<polygon points="395.7,282.7 402.9,279.6 401.8,277.1 394.6,280.2" fill="#cdd2aa" opacity="0.32"/>
<polygon points="452.8,294.8 457.4,290.4 455.9,288.8 451.3,293.3" fill="#cdd2aa" opacity="0.32"/>
<polygon points="392.9,353.9 397.5,348.5 394.7,346.2 390.2,351.5" fill="#cdd2aa" opacity="0.32"/>
<polygon points="447.1,360.0 455.8,352.5 453.2,349.5 444.5,357.0" fill="#cdd2aa" opacity="0.32"/>
<polygon points="400.6,333.4 409.0,329.0 407.0,325.3 398.6,329.6" fill="#cdd2aa" opacity="0.32"/>
<polygon points="429.2,341.1 441.4,334.1 439.5,330.8 427.3,337.7" fill="#cdd2aa" opacity="0.32"/>
<polygon points="426.2,373.9 432.7,368.2 429.8,364.9 423.3,370.5" fill="#cdd2aa" opacity="0.32"/>
<polygon points="396.3,271.7 404.3,267.0 402.4,263.9 394.4,268.5" fill="#cdd2aa" opacity="0.32"/>
<polygon points="441.2,306.3 449.8,302.0 448.8,300.0 440.1,304.3" fill="#cdd2aa" opacity="0.32"/>
<polygon points="428.1,339.1 438.0,332.9 436.2,330.0 426.3,336.2" fill="#cdd2aa" opacity="0.32"/>
<polygon points="409.2,386.7 414.9,383.1 413.5,380.8 407.8,384.5" fill="#cdd2aa" opacity="0.32"/>
<polygon points="437.8,350.0 447.4,340.9 444.6,337.9 435.0,347.0" fill="#cdd2aa" opacity="0.32"/>
<polygon points="433.6,363.7 442.5,353.8 440.2,351.8 431.3,361.7" fill="#cdd2aa" opacity="0.32"/>
<polygon points="408.5,279.3 422.3,272.8 420.2,268.5 406.5,275.0" fill="#cdd2aa" opacity="0.32"/>
<polygon points="386.3,352.9 393.3,347.0 391.4,344.8 384.4,350.6" fill="#cdd2aa" opacity="0.32"/>
<polygon points="454.5,302.5 460.9,296.9 458.9,294.6 452.5,300.2" fill="#cdd2aa" opacity="0.32"/>
<polygon points="402.3,362.2 410.3,356.5 408.8,354.4 400.8,360.1" fill="#cdd2aa" opacity="0.32"/>
<polygon points="427.0,282.2 436.9,271.8 434.2,269.3 424.3,279.7" fill="#cdd2aa" opacity="0.32"/>
<polygon points="421.2,262.9 428.3,257.6 427.0,255.9 420.0,261.2" fill="#cdd2aa" opacity="0.32"/>
<polygon points="387.1,316.0 400.8,308.6 399.0,305.1 385.2,312.6" fill="#cdd2aa" opacity="0.32"/>
<polygon points="445.5,351.3 454.6,340.8 452.9,339.3 443.8,349.8" fill="#cdd2aa" opacity="0.32"/>
<polygon points="418.0,262.7 422.7,257.6 419.8,255.0 415.2,260.0" fill="#cdd2aa" opacity="0.32"/>
<polygon points="418.1,271.9 425.5,267.7 424.2,265.4 416.8,269.6" fill="#cdd2aa" opacity="0.32"/>
<polygon points="383.4,320.1 392.5,316.1 391.3,313.4 382.2,317.4" fill="#cdd2aa" opacity="0.32"/>
<polygon points="645.0,234.9 654.8,229.0 652.6,225.4 642.9,231.3" fill="#cdd2aa" opacity="0.32"/>
<polygon points="678.6,247.0 691.3,240.5 689.5,236.9 676.8,243.4" fill="#cdd2aa" opacity="0.32"/>
<polygon points="669.7,226.8 682.1,218.7 679.5,214.6 667.0,222.7" fill="#cdd2aa" opacity="0.32"/>
<polygon points="624.3,255.7 635.1,246.8 633.0,244.2 622.2,253.2" fill="#cdd2aa" opacity="0.32"/>
<polygon points="678.6,289.2 689.5,277.6 687.2,275.5 676.3,287.1" fill="#cdd2aa" opacity="0.32"/>
<polygon points="668.4,285.0 674.1,278.2 670.4,275.0 664.6,281.8" fill="#cdd2aa" opacity="0.32"/>
<polygon points="654.4,273.7 663.0,264.6 659.9,261.6 651.3,270.7" fill="#cdd2aa" opacity="0.32"/>
<polygon points="685.1,271.4 692.6,262.3 689.0,259.3 681.5,268.4" fill="#cdd2aa" opacity="0.32"/>
<polygon points="672.5,269.1 679.5,264.9 678.1,262.6 671.1,266.8" fill="#cdd2aa" opacity="0.32"/>
<polygon points="644.7,248.2 650.1,242.5 648.0,240.6 642.6,246.3" fill="#cdd2aa" opacity="0.32"/>
<polygon points="659.9,238.0 668.9,230.9 666.2,227.4 657.1,234.5" fill="#cdd2aa" opacity="0.32"/>
<polygon points="654.3,298.3 666.5,289.4 664.8,286.9 652.5,295.8" fill="#cdd2aa" opacity="0.32"/>
<polygon points="685.5,250.3 693.0,246.9 692.1,244.9 684.6,248.3" fill="#cdd2aa" opacity="0.32"/>
<polygon points="667.0,236.6 675.2,228.9 672.7,226.3 664.6,234.1" fill="#cdd2aa" opacity="0.32"/>
<polygon points="691.7,256.4 698.3,251.2 697.0,249.6 690.4,254.8" fill="#cdd2aa" opacity="0.32"/>
<polygon points="634.2,286.9 643.2,277.3 640.4,274.7 631.4,284.3" fill="#cdd2aa" opacity="0.32"/>
<polygon points="672.5,278.3 679.3,273.2 676.6,269.5 669.7,274.6" fill="#cdd2aa" opacity="0.32"/>
<polygon points="634.4,229.2 640.3,222.8 637.6,220.4 631.7,226.7" fill="#cdd2aa" opacity="0.32"/>
<polygon points="657.0,258.9 669.5,252.2 667.4,248.2 654.8,254.9" fill="#cdd2aa" opacity="0.32"/>
<polygon points="675.6,270.2 686.0,262.2 684.6,260.3 674.2,268.4" fill="#cdd2aa" opacity="0.32"/>
<polygon points="620.9,268.4 629.6,260.3 626.4,256.9 617.8,265.0" fill="#cdd2aa" opacity="0.32"/>
<polygon points="662.1,234.5 675.5,227.4 674.5,225.4 661.1,232.5" fill="#cdd2aa" opacity="0.32"/>
<polygon points="665.2,287.2 675.2,282.0 674.0,279.8 664.1,285.0" fill="#cdd2aa" opacity="0.32"/>
<polygon points="651.9,278.9 657.2,274.7 655.4,272.4 650.1,276.6" fill="#cdd2aa" opacity="0.32"/>
<polygon points="652.6,236.6 662.4,228.3 660.9,226.5 651.1,234.9" fill="#cdd2aa" opacity="0.32"/>
<polygon points="620.9,271.2 629.8,260.0 626.7,257.6 617.8,268.7" fill="#cdd2aa" opacity="0.32"/>
<polygon points="635.7,282.6 642.3,277.4 640.0,274.5 633.4,279.7" fill="#cdd2aa" opacity="0.32"/>
<polygon points="696.7,262.6 708.3,254.8 706.8,252.6 695.2,260.4" fill="#cdd2aa" opacity="0.32"/>
<polygon points="652.6,283.6 661.1,276.0 659.1,273.9 650.6,281.5" fill="#cdd2aa" opacity="0.32"/>
<polygon points="633.5,278.8 640.9,274.4 639.6,272.2 632.2,276.5" fill="#cdd2aa" opacity="0.32"/>
<polygon points="277.2,198.9 285.9,191.1 283.1,188.0 274.4,195.8" fill="#cdd2aa" opacity="0.32"/>
<polygon points="332.2,145.8 338.4,141.9 337.2,140.0 331.0,143.9" fill="#cdd2aa" opacity="0.32"/>
<polygon points="309.3,141.3 317.5,135.6 315.0,131.9 306.7,137.6" fill="#cdd2aa" opacity="0.32"/>
<polygon points="356.0,169.8 361.8,165.0 360.3,163.2 354.5,168.0" fill="#cdd2aa" opacity="0.32"/>
<polygon points="396.2,178.3 404.8,172.7 402.8,169.8 394.2,175.4" fill="#cdd2aa" opacity="0.32"/>
<polygon points="327.8,118.8 335.4,112.4 333.4,110.1 325.9,116.5" fill="#cdd2aa" opacity="0.32"/>
<polygon points="374.2,163.1 385.6,156.8 383.2,152.4 371.8,158.7" fill="#cdd2aa" opacity="0.32"/>
<polygon points="283.1,128.5 287.8,124.4 285.8,122.2 281.2,126.3" fill="#cdd2aa" opacity="0.32"/>
<polygon points="301.4,147.0 310.0,142.3 308.3,139.2 299.7,143.9" fill="#cdd2aa" opacity="0.32"/>
<polygon points="351.5,127.2 358.4,124.0 356.5,120.1 349.7,123.4" fill="#cdd2aa" opacity="0.32"/>
<polygon points="266.9,150.9 276.3,145.2 275.1,143.1 265.7,148.8" fill="#cdd2aa" opacity="0.32"/>
<polygon points="383.5,158.6 392.6,149.2 389.4,146.0 380.2,155.5" fill="#cdd2aa" opacity="0.32"/>
<polygon points="387.0,146.5 392.7,140.9 391.1,139.3 385.4,144.9" fill="#cdd2aa" opacity="0.32"/>
<polygon points="253.4,142.5 260.4,136.4 257.3,132.8 250.3,138.9" fill="#cdd2aa" opacity="0.32"/>
<polygon points="284.6,163.1 298.8,156.3 297.7,154.2 283.5,161.0" fill="#cdd2aa" opacity="0.32"/>
<polygon points="252.5,149.7 262.9,144.7 261.7,142.2 251.3,147.2" fill="#cdd2aa" opacity="0.32"/>
<polygon points="398.5,156.8 409.1,151.2 408.0,149.1 397.4,154.8" fill="#cdd2aa" opacity="0.32"/>
<polygon points="298.7,200.0 306.1,196.1 304.4,192.8 297.0,196.7" fill="#cdd2aa" opacity="0.32"/>
<polygon points="346.7,188.8 351.3,183.9 349.8,182.4 345.1,187.3" fill="#cdd2aa" opacity="0.32"/>
<polygon points="404.4,156.0 415.0,149.3 413.5,146.8 402.8,153.6" fill="#cdd2aa" opacity="0.32"/>
<polygon points="315.7,133.3 323.2,124.0 319.7,121.3 312.2,130.5" fill="#cdd2aa" opacity="0.32"/>
<polygon points="339.1,187.7 345.1,183.4 343.3,180.8 337.3,185.1" fill="#cdd2aa" opacity="0.32"/>
<polygon points="350.0,188.1 356.4,182.3 353.9,179.5 347.5,185.3" fill="#cdd2aa" opacity="0.32"/>
<polygon points="305.7,151.9 317.3,146.7 316.3,144.5 304.7,149.7" fill="#cdd2aa" opacity="0.32"/>
<polygon points="268.8,141.2 277.4,135.8 275.4,132.5 266.8,137.9" fill="#cdd2aa" opacity="0.32"/>
<polygon points="322.3,120.8 331.9,115.7 329.6,111.3 320.0,116.3" fill="#cdd2aa" opacity="0.32"/>
<polygon points="353.4,136.2 362.7,131.7 361.1,128.4 351.8,132.8" fill="#cdd2aa" opacity="0.32"/>
<polygon points="255.4,154.9 263.1,148.0 259.9,144.5 252.3,151.4" fill="#cdd2aa" opacity="0.32"/>
<polygon points="389.2,173.9 401.6,165.4 399.2,161.9 386.8,170.4" fill="#cdd2aa" opacity="0.32"/>
<polygon points="319.4,135.3 327.4,126.5 325.8,125.0 317.8,133.9" fill="#cdd2aa" opacity="0.32"/>
<polygon points="258.0,169.0 266.5,163.7 265.4,161.9 256.9,167.1" fill="#cdd2aa" opacity="0.32"/>
<polygon points="276.5,155.7 282.9,149.3 280.7,147.1 274.2,153.5" fill="#cdd2aa" opacity="0.32"/>
<polygon points="394.0,178.2 408.0,171.2 406.2,167.6 392.2,174.6" fill="#cdd2aa" opacity="0.32"/>
<polygon points="248.8,178.2 255.5,173.5 253.0,170.0 246.3,174.8" fill="#cdd2aa" opacity="0.32"/>
<polygon points="340.3,152.0 351.5,143.8 350.1,141.9 338.9,150.1" fill="#cdd2aa" opacity="0.32"/>
<polygon points="321.9,158.6 328.2,152.9 326.2,150.8 320.0,156.4" fill="#cdd2aa" opacity="0.32"/>
<polygon points="396.4,177.2 407.0,167.8 404.9,165.5 394.3,174.8" fill="#cdd2aa" opacity="0.32"/>
<polygon points="304.7,153.9 309.3,149.6 306.2,146.2 301.5,150.5" fill="#cdd2aa" opacity="0.32"/>
<polygon points="230.7,162.3 241.8,151.0 239.3,148.6 228.3,159.9" fill="#cdd2aa" opacity="0.32"/>
<polygon points="291.7,201.1 304.9,194.2 303.7,191.9 290.5,198.8" fill="#cdd2aa" opacity="0.32"/>
<polygon points="281.7,183.2 288.8,180.2 287.0,175.9 279.9,178.9" fill="#cdd2aa" opacity="0.32"/>
<polygon points="342.5,193.7 347.6,187.6 344.0,184.6 338.9,190.7" fill="#cdd2aa" opacity="0.32"/>
<polygon points="379.2,182.9 387.4,178.8 385.3,174.6 377.1,178.7" fill="#cdd2aa" opacity="0.32"/>
<polygon points="310.9,144.9 321.0,136.7 318.0,133.0 307.9,141.1" fill="#cdd2aa" opacity="0.32"/>
<polygon points="357.7,169.8 364.0,163.3 361.1,160.4 354.8,166.9" fill="#cdd2aa" opacity="0.32"/>
<polygon points="201.1,95.0 210.6,86.7 207.8,83.4 198.2,91.7" fill="#cdd2aa" opacity="0.32"/>
<polygon points="124.2,26.0 132.9,17.9 131.1,15.9 122.4,24.1" fill="#cdd2aa" opacity="0.32"/>
<polygon points="261.1,49.6 266.8,43.0 263.9,40.4 258.1,47.1" fill="#cdd2aa" opacity="0.32"/>
<polygon points="252.4,66.6 259.6,57.9 256.8,55.6 249.6,64.3" fill="#cdd2aa" opacity="0.32"/>
<polygon points="133.3,52.5 138.9,46.0 135.6,43.1 130.0,49.6" fill="#cdd2aa" opacity="0.32"/>
<polygon points="158.5,115.3 165.3,110.3 163.7,108.0 156.8,113.0" fill="#cdd2aa" opacity="0.32"/>
<polygon points="217.0,118.7 229.4,108.9 228.1,107.2 215.7,117.1" fill="#cdd2aa" opacity="0.32"/>
<polygon points="178.2,37.6 188.8,26.6 186.2,24.1 175.7,35.2" fill="#cdd2aa" opacity="0.32"/>
<polygon points="95.8,53.9 104.2,49.2 102.3,45.7 93.9,50.4" fill="#cdd2aa" opacity="0.32"/>
<polygon points="99.6,66.8 111.2,58.2 108.8,55.0 97.2,63.6" fill="#cdd2aa" opacity="0.32"/>
<polygon points="220.8,63.0 232.2,55.3 230.8,53.2 219.4,61.0" fill="#cdd2aa" opacity="0.32"/>
<polygon points="183.8,106.6 195.8,99.9 193.7,96.1 181.7,102.8" fill="#cdd2aa" opacity="0.32"/>
<polygon points="186.7,107.3 193.2,102.3 190.9,99.3 184.4,104.3" fill="#cdd2aa" opacity="0.32"/>
<polygon points="259.8,79.0 271.6,73.1 269.9,69.8 258.2,75.6" fill="#cdd2aa" opacity="0.32"/>
<polygon points="198.9,87.7 203.7,83.8 201.5,81.1 196.7,85.0" fill="#cdd2aa" opacity="0.32"/>
<polygon points="123.5,79.1 136.1,73.1 135.2,71.1 122.6,77.1" fill="#cdd2aa" opacity="0.32"/>
<polygon points="104.7,54.0 114.1,43.8 112.1,42.0 102.7,52.2" fill="#cdd2aa" opacity="0.32"/>
<polygon points="171.0,79.8 178.4,74.3 176.1,71.2 168.7,76.7" fill="#cdd2aa" opacity="0.32"/>
<polygon points="173.5,111.1 178.2,106.0 174.9,103.0 170.2,108.0" fill="#cdd2aa" opacity="0.32"/>
<polygon points="176.1,92.1 187.4,85.8 185.2,81.9 173.9,88.1" fill="#cdd2aa" opacity="0.32"/>
<polygon points="243.5,81.4 252.3,77.5 251.2,75.1 242.4,78.9" fill="#cdd2aa" opacity="0.32"/>
<polygon points="253.5,81.8 262.7,71.7 259.1,68.4 249.9,78.4" fill="#cdd2aa" opacity="0.32"/>
<polygon points="88.5,80.8 94.2,78.0 93.1,75.5 87.3,78.3" fill="#cdd2aa" opacity="0.32"/>
<polygon points="223.8,96.2 229.6,89.4 227.1,87.3 221.3,94.1" fill="#cdd2aa" opacity="0.32"/>
<polygon points="285.9,83.0 295.6,73.4 292.6,70.4 282.9,80.1" fill="#cdd2aa" opacity="0.32"/>
<polygon points="177.2,109.2 184.9,105.6 183.5,102.5 175.8,106.1" fill="#cdd2aa" opacity="0.32"/>
<polygon points="136.5,96.4 146.6,84.2 143.6,81.8 133.6,94.0" fill="#cdd2aa" opacity="0.32"/>
<polygon points="107.3,93.4 112.9,89.9 111.3,87.4 105.7,90.8" fill="#cdd2aa" opacity="0.32"/>
<polygon points="233.1,39.3 244.4,29.7 242.2,27.1 230.9,36.7" fill="#cdd2aa" opacity="0.32"/>
<polygon points="215.2,42.3 225.5,33.1 223.8,31.1 213.4,40.3" fill="#cdd2aa" opacity="0.32"/>
<polygon points="213.3,105.9 218.7,100.5 216.8,98.6 211.4,104.1" fill="#cdd2aa" opacity="0.32"/>
<polygon points="119.0,76.1 127.9,70.5 125.3,66.3 116.4,71.8" fill="#cdd2aa" opacity="0.32"/>
<polygon points="210.8,49.6 219.1,44.5 218.0,42.6 209.6,47.7" fill="#cdd2aa" opacity="0.32"/>
<polygon points="143.1,89.9 147.6,85.6 145.8,83.8 141.4,88.1" fill="#cdd2aa" opacity="0.32"/>
<polygon points="95.3,103.3 105.2,94.7 103.3,92.5 93.4,101.2" fill="#cdd2aa" opacity="0.32"/>
<polygon points="239.6,113.0 247.9,108.1 245.7,104.4 237.4,109.4" fill="#cdd2aa" opacity="0.32"/>
<polygon points="193.3,65.2 199.3,58.2 196.9,56.1 190.9,63.1" fill="#cdd2aa" opacity="0.32"/>
<polygon points="225.3,50.3 234.1,39.8 231.4,37.5 222.6,48.0" fill="#cdd2aa" opacity="0.32"/>
<polygon points="137.8,84.4 143.1,80.8 141.7,78.8 136.5,82.4" fill="#cdd2aa" opacity="0.32"/>
<polygon points="240.1,76.1 247.0,68.5 244.4,66.1 237.5,73.7" fill="#cdd2aa" opacity="0.32"/>
<polygon points="163.9,44.2 172.8,34.5 169.9,31.7 160.9,41.5" fill="#cdd2aa" opacity="0.32"/>
<polygon points="194.4,98.4 204.4,89.9 202.3,87.5 192.3,96.0" fill="#cdd2aa" opacity="0.32"/>
<polygon points="214.8,49.7 221.0,43.4 218.9,41.2 212.6,47.6" fill="#cdd2aa" opacity="0.32"/>
<polygon points="194.1,71.7 205.0,65.9 203.2,62.6 192.4,68.5" fill="#cdd2aa" opacity="0.32"/>
<polygon points="238.6,66.6 247.5,57.6 244.1,54.2 235.2,63.3" fill="#cdd2aa" opacity="0.32"/>
<polygon points="144.6,30.4 155.7,19.5 152.4,16.2 141.4,27.2" fill="#cdd2aa" opacity="0.32"/>
<polygon points="157.7,57.8 164.3,49.9 161.9,47.9 155.3,55.7" fill="#cdd2aa" opacity="0.32"/>
<polygon points="132.5,91.1 139.9,83.0 137.9,81.1 130.4,89.1" fill="#cdd2aa" opacity="0.32"/>
<polygon points="118.7,90.9 124.1,85.5 121.3,82.7 115.8,88.1" fill="#cdd2aa" opacity="0.32"/>
<polygon points="232.1,86.7 240.5,80.8 239.1,78.8 230.7,84.7" fill="#cdd2aa" opacity="0.32"/>
<polygon points="756.5,41.6 766.4,33.2 765.1,31.6 755.2,40.0" fill="#cdd2aa" opacity="0.32"/>
<polygon points="760.4,76.5 768.4,70.4 767.1,68.6 759.1,74.7" fill="#cdd2aa" opacity="0.32"/>
<polygon points="740.8,55.4 746.6,48.2 744.5,46.5 738.6,53.6" fill="#cdd2aa" opacity="0.32"/>
<polygon points="740.8,100.3 750.6,94.0 749.1,91.7 739.3,97.9" fill="#cdd2aa" opacity="0.32"/>
<polygon points="782.4,96.0 791.6,88.0 788.4,84.4 779.2,92.4" fill="#cdd2aa" opacity="0.32"/>
<polygon points="724.3,52.5 735.7,44.9 733.5,41.7 722.1,49.3" fill="#cdd2aa" opacity="0.32"/>
<polygon points="741.8,82.6 749.6,78.8 747.6,74.7 739.8,78.6" fill="#cdd2aa" opacity="0.32"/>
<polygon points="735.0,93.7 740.1,89.8 738.7,87.9 733.6,91.7" fill="#cdd2aa" opacity="0.32"/>
<polygon points="756.6,93.9 767.6,82.6 765.8,80.9 754.8,92.2" fill="#cdd2aa" opacity="0.32"/>
<polygon points="774.8,101.0 781.5,96.0 780.3,94.4 773.6,99.3" fill="#cdd2aa" opacity="0.32"/>
<polygon points="749.5,81.9 758.4,75.5 756.1,72.3 747.2,78.7" fill="#cdd2aa" opacity="0.32"/>
<polygon points="741.7,50.5 752.4,40.9 749.1,37.3 738.5,46.9" fill="#cdd2aa" opacity="0.32"/>
<polygon points="742.3,100.1 750.1,95.3 747.9,91.8 740.2,96.6" fill="#cdd2aa" opacity="0.32"/>
<polygon points="747.7,33.8 759.5,25.9 758.2,23.8 746.3,31.7" fill="#cdd2aa" opacity="0.32"/>
<polygon points="731.0,70.4 739.4,65.6 738.0,63.1 729.6,68.0" fill="#cdd2aa" opacity="0.32"/>
<polygon points="746.4,65.0 752.2,58.8 750.1,56.8 744.2,62.9" fill="#cdd2aa" opacity="0.32"/>
<polygon points="753.0,67.0 757.3,62.0 755.7,60.6 751.3,65.5" fill="#cdd2aa" opacity="0.32"/>
<polygon points="764.5,57.0 772.8,50.6 770.1,47.2 761.8,53.6" fill="#cdd2aa" opacity="0.32"/>
<polygon points="791.8,102.7 802.3,92.4 800.8,90.8 790.3,101.1" fill="#cdd2aa" opacity="0.32"/>
<polygon points="725.3,68.3 732.4,61.3 729.5,58.4 722.4,65.3" fill="#cdd2aa" opacity="0.32"/>
<polygon points="762.7,46.7 771.0,42.4 769.0,38.6 760.8,42.9" fill="#cdd2aa" opacity="0.32"/>
<polygon points="786.7,43.0 795.2,37.3 792.9,33.9 784.4,39.6" fill="#cdd2aa" opacity="0.32"/>
<polygon points="791.6,37.0 797.7,33.1 796.0,30.5 789.9,34.4" fill="#cdd2aa" opacity="0.32"/>
<polygon points="772.5,85.1 778.1,82.5 776.6,79.1 771.0,81.6" fill="#cdd2aa" opacity="0.32"/>
<polygon points="785.5,67.2 796.2,60.1 794.4,57.4 783.7,64.5" fill="#cdd2aa" opacity="0.32"/>
<polygon points="727.3,93.4 740.9,85.2 739.8,83.3 726.2,91.5" fill="#cdd2aa" opacity="0.32"/>
<polygon points="776.3,74.2 784.5,70.8 782.8,66.9 774.7,70.4" fill="#cdd2aa" opacity="0.32"/>
<polygon points="791.6,84.1 796.5,80.3 794.3,77.4 789.3,81.2" fill="#cdd2aa" opacity="0.32"/>
<polygon points="749.0,87.3 759.2,77.7 756.1,74.4 745.9,84.1" fill="#cdd2aa" opacity="0.32"/>
<polygon points="737.9,91.1 748.3,82.2 745.1,78.5 734.7,87.3" fill="#cdd2aa" opacity="0.32"/>
<polygon points="775.2,593.2 784.8,583.0 783.0,581.3 773.4,591.5" fill="#cdd2aa" opacity="0.32"/>
<polygon points="868.4,643.4 874.1,637.1 871.5,634.8 865.9,641.1" fill="#cdd2aa" opacity="0.32"/>
<polygon points="792.2,624.2 802.0,617.7 800.6,615.7 790.9,622.2" fill="#cdd2aa" opacity="0.32"/>
<polygon points="792.7,638.7 800.5,631.2 798.4,629.0 790.6,636.5" fill="#cdd2aa" opacity="0.32"/>
<polygon points="819.9,624.8 829.6,613.5 827.4,611.6 817.7,622.9" fill="#cdd2aa" opacity="0.32"/>
<polygon points="821.2,645.1 835.5,637.9 834.3,635.6 820.0,642.8" fill="#cdd2aa" opacity="0.32"/>
<polygon points="741.0,624.0 750.1,613.2 747.6,611.1 738.6,621.9" fill="#cdd2aa" opacity="0.32"/>
<polygon points="727.7,608.7 738.9,603.6 737.7,601.0 726.6,606.1" fill="#cdd2aa" opacity="0.32"/>
<polygon points="857.8,589.6 866.8,584.3 864.5,580.4 855.5,585.7" fill="#cdd2aa" opacity="0.32"/>
<polygon points="807.0,624.5 812.0,618.7 810.2,617.2 805.2,623.0" fill="#cdd2aa" opacity="0.32"/>
<polygon points="751.1,646.6 756.8,639.5 754.1,637.2 748.4,644.3" fill="#cdd2aa" opacity="0.32"/>
<polygon points="822.0,656.0 827.4,653.1 825.7,649.9 820.3,652.8" fill="#cdd2aa" opacity="0.32"/>
<polygon points="818.9,586.2 827.7,581.5 825.6,577.6 816.8,582.3" fill="#cdd2aa" opacity="0.32"/>
<polygon points="810.8,579.6 816.2,575.1 813.0,571.4 807.7,575.9" fill="#cdd2aa" opacity="0.32"/>
<polygon points="783.9,600.9 796.3,592.3 795.1,590.6 782.7,599.3" fill="#cdd2aa" opacity="0.32"/>
<polygon points="806.7,643.7 815.2,639.1 813.3,635.6 804.8,640.2" fill="#cdd2aa" opacity="0.32"/>
<polygon points="750.9,642.4 759.5,638.2 758.3,635.7 749.7,639.8" fill="#cdd2aa" opacity="0.32"/>
<polygon points="788.2,630.9 794.8,624.2 791.8,621.2 785.2,627.9" fill="#cdd2aa" opacity="0.32"/>
<polygon points="795.9,591.1 804.3,581.5 802.4,579.8 794.0,589.4" fill="#cdd2aa" opacity="0.32"/>
<polygon points="831.7,637.4 839.9,631.2 838.7,629.6 830.5,635.8" fill="#cdd2aa" opacity="0.32"/>
<polygon points="757.9,633.7 765.8,625.6 762.3,622.2 754.4,630.3" fill="#cdd2aa" opacity="0.32"/>
<polygon points="833.5,603.3 845.9,597.9 845.0,595.8 832.6,601.1" fill="#cdd2aa" opacity="0.32"/>
<polygon points="719.4,635.2 726.4,630.9 724.7,628.2 717.7,632.4" fill="#cdd2aa" opacity="0.32"/>
<polygon points="819.5,639.9 829.0,631.3 825.7,627.7 816.3,636.3" fill="#cdd2aa" opacity="0.32"/>
<polygon points="817.9,642.2 831.2,633.5 829.8,631.5 816.5,640.2" fill="#cdd2aa" opacity="0.32"/>
<polygon points="747.1,640.8 754.4,637.2 752.7,633.7 745.5,637.3" fill="#cdd2aa" opacity="0.32"/>
<polygon points="843.9,595.5 851.3,587.2 848.5,584.7 841.1,593.0" fill="#cdd2aa" opacity="0.32"/>
<polygon points="838.3,591.6 846.4,584.9 843.8,581.8 835.7,588.5" fill="#cdd2aa" opacity="0.32"/>
<polygon points="766.0,632.8 775.6,625.6 773.4,622.6 763.8,629.8" fill="#cdd2aa" opacity="0.32"/>
<polygon points="868.6,625.9 877.2,620.0 875.1,616.8 866.4,622.8" fill="#cdd2aa" opacity="0.32"/>
<polygon points="830.5,613.4 839.8,607.9 837.2,603.6 828.0,609.1" fill="#cdd2aa" opacity="0.32"/>
<polygon points="765.9,651.7 780.1,644.5 778.6,641.7 764.4,648.8" fill="#cdd2aa" opacity="0.32"/>
<polygon points="860.4,647.2 870.1,642.1 868.9,639.7 859.2,644.8" fill="#cdd2aa" opacity="0.32"/>
<polygon points="746.0,589.8 757.5,581.2 754.8,577.7 743.4,586.3" fill="#cdd2aa" opacity="0.32"/>
<polygon points="821.1,621.2 831.6,610.9 828.7,608.0 818.2,618.3" fill="#cdd2aa" opacity="0.32"/>
<polygon points="513.9,24.9 521.8,16.7 518.5,13.5 510.6,21.7" fill="#cdd2aa" opacity="0.32"/>
<polygon points="491.0,57.9 496.9,54.7 495.2,51.5 489.3,54.7" fill="#cdd2aa" opacity="0.32"/>
<polygon points="467.6,41.1 479.8,34.3 477.5,30.3 465.3,37.2" fill="#cdd2aa" opacity="0.32"/>
<polygon points="443.2,33.3 453.7,24.1 452.1,22.2 441.5,31.4" fill="#cdd2aa" opacity="0.32"/>
<polygon points="508.2,42.1 516.6,37.7 514.4,33.6 506.0,38.0" fill="#cdd2aa" opacity="0.32"/>
<polygon points="518.1,46.8 526.3,41.3 523.8,37.5 515.6,43.0" fill="#cdd2aa" opacity="0.32"/>
<polygon points="509.2,36.6 522.5,27.8 521.0,25.6 507.8,34.4" fill="#cdd2aa" opacity="0.32"/>
<polygon points="536.7,24.1 542.9,19.1 540.4,16.0 534.2,21.0" fill="#cdd2aa" opacity="0.32"/>
<polygon points="534.8,41.0 541.5,34.7 538.8,31.8 532.1,38.2" fill="#cdd2aa" opacity="0.32"/>
<polygon points="459.4,25.5 466.1,21.4 464.8,19.4 458.2,23.5" fill="#cdd2aa" opacity="0.32"/>
<polygon points="479.3,40.9 485.2,36.9 482.5,32.9 476.6,36.9" fill="#cdd2aa" opacity="0.32"/>
<polygon points="479.5,49.4 493.3,41.4 491.2,37.8 477.5,45.9" fill="#cdd2aa" opacity="0.32"/>
<polygon points="477.1,49.5 485.5,43.9 484.2,41.9 475.8,47.5" fill="#cdd2aa" opacity="0.32"/>
<polygon points="450.6,49.7 458.7,43.6 456.6,40.9 448.6,47.0" fill="#cdd2aa" opacity="0.32"/>
<polygon points="530.4,34.6 541.1,27.1 539.5,24.9 528.8,32.4" fill="#cdd2aa" opacity="0.32"/>
<polygon points="487.3,62.1 494.8,57.4 492.4,53.5 484.9,58.2" fill="#cdd2aa" opacity="0.32"/>
<polygon points="443.4,46.3 451.6,40.7 449.2,37.2 441.1,42.8" fill="#cdd2aa" opacity="0.32"/>
<polygon points="484.5,41.3 492.4,34.9 490.7,32.7 482.7,39.1" fill="#cdd2aa" opacity="0.32"/>
<polygon points="530.0,37.2 539.2,28.1 536.4,25.2 527.1,34.3" fill="#cdd2aa" opacity="0.32"/>
<polygon points="478.6,45.6 490.1,36.1 488.4,34.0 476.8,43.5" fill="#cdd2aa" opacity="0.32"/>
<polygon points="467.7,59.8 479.4,51.3 477.2,48.2 465.5,56.7" fill="#cdd2aa" opacity="0.32"/>
<polygon points="546.5,52.3 551.7,47.8 549.7,45.4 544.5,49.9" fill="#cdd2aa" opacity="0.32"/>
<polygon points="490.4,18.9 499.0,15.0 497.1,10.8 488.5,14.7" fill="#cdd2aa" opacity="0.32"/>
<polygon points="546.0,42.4 554.4,35.8 552.5,33.4 544.1,40.0" fill="#cdd2aa" opacity="0.32"/>
<polygon points="477.7,58.4 488.7,53.6 486.7,49.1 475.7,53.9" fill="#cdd2aa" opacity="0.32"/>
<polygon points="262.1,289.5 274.2,282.1 272.2,278.7 260.0,286.2" fill="#cdd2aa" opacity="0.32"/>
<polygon points="248.7,289.1 257.7,283.4 255.9,280.7 247.0,286.4" fill="#cdd2aa" opacity="0.32"/>
<polygon points="248.3,318.3 253.8,312.3 251.5,310.2 246.1,316.2" fill="#cdd2aa" opacity="0.32"/>
<polygon points="212.6,303.8 218.4,300.1 217.0,298.0 211.3,301.7" fill="#cdd2aa" opacity="0.32"/>
<polygon points="214.8,271.0 222.1,266.7 219.9,262.9 212.5,267.2" fill="#cdd2aa" opacity="0.32"/>
<polygon points="239.9,278.1 249.5,273.3 248.5,271.4 239.0,276.3" fill="#cdd2aa" opacity="0.32"/>
<polygon points="276.0,278.4 281.0,274.7 279.2,272.2 274.2,275.9" fill="#cdd2aa" opacity="0.32"/>
<polygon points="224.3,288.2 235.4,279.9 233.6,277.6 222.5,285.9" fill="#cdd2aa" opacity="0.32"/>
<polygon points="261.1,304.0 267.0,299.7 265.6,297.8 259.8,302.2" fill="#cdd2aa" opacity="0.32"/>
<polygon points="230.9,314.7 236.3,308.2 233.9,306.2 228.4,312.7" fill="#cdd2aa" opacity="0.32"/>
<polygon points="243.1,308.9 253.4,303.6 251.8,300.6 241.5,305.9" fill="#cdd2aa" opacity="0.32"/>
<polygon points="269.7,306.1 275.7,301.6 272.8,297.6 266.7,302.1" fill="#cdd2aa" opacity="0.32"/>
<polygon points="211.9,304.6 223.1,295.2 220.0,291.5 208.8,300.8" fill="#cdd2aa" opacity="0.32"/>
<polygon points="252.7,291.3 264.8,283.9 262.6,280.3 250.5,287.7" fill="#cdd2aa" opacity="0.32"/>
<polygon points="256.6,306.2 261.2,301.9 259.7,300.2 255.1,304.5" fill="#cdd2aa" opacity="0.32"/>
<polyline points="136.4,26.1 151.5,18.0 167.3,9.4" fill="none" stroke="#f8f8f2" stroke-width="1.3" stroke-linejoin="round"/>
<polyline points="136.4,26.1 127.3,43.4 120.2,56.7 109.7,67.5" fill="none" stroke="#f8f8f2" stroke-width="1.3" stroke-linejoin="round"/>
<polyline points="136.4,26.1 128.1,32.6 113.3,46.6 103.7,48.6 89.2,60.0" fill="none" stroke="#f8f8f2" stroke-width="1.3" stroke-linejoin="round"/>
<polyline points="222.4,29.2 205.2,25.6 197.1,22.5 178.3,16.1 167.3,9.4" fill="none" stroke="#f8f8f2" stroke-width="1.3" stroke-linejoin="round"/>
<polyline points="222.4,29.2 214.1,38.5 206.4,57.3 191.5,69.3 184.2,77.9" fill="none" stroke="#f8f8f2" stroke-width="1.3" stroke-linejoin="round"/>
<polyline points="353.2,71.5 361.5,86.0 371.4,100.7" fill="none" stroke="#f8f8f2" stroke-width="1.3" stroke-linejoin="round"/>
<polyline points="353.2,71.5 372.2,81.2 380.7,85.1 398.6,91.4 413.5,99.7" fill="none" stroke="#f8f8f2" stroke-width="1.3" stroke-linejoin="round"/>
<polyline points="353.2,71.5 364.3,63.9 382.0,55.4 394.2,52.6 403.4,45.7 421.7,41.0 434.2,34.8" fill="none" stroke="#f8f8f2" stroke-width="1.3" stroke-linejoin="round"/>
<polyline points="235.3,99.4 253.3,107.1 266.6,107.3" fill="none" stroke="#f8f8f2" stroke-width="1.3" stroke-linejoin="round"/>
<polyline points="235.3,99.4 240.1,115.4 251.2,135.1" fill="none" stroke="#f8f8f2" stroke-width="1.3" stroke-linejoin="round"/>
<polyline points="371.4,100.7 381.8,102.6 397.7,97.1 413.5,99.7" fill="none" stroke="#f8f8f2" stroke-width="1.3" stroke-linejoin="round"/>
<polyline points="371.4,100.7 383.2,115.7 398.7,122.1 405.8,139.1 421.0,147.4" fill="none" stroke="#f8f8f2" stroke-width="1.3" stroke-linejoin="round"/>
<polyline points="157.2,103.4 160.3,103.3 162.2,99.9" fill="none" stroke="#f8f8f2" stroke-width="1.3" stroke-linejoin="round"/>
<polyline points="157.2,103.4 159.0,117.5 154.4,136.3 158.1,147.6" fill="none" stroke="#f8f8f2" stroke-width="1.3" stroke-linejoin="round"/>
<polyline points="79.4,138.2 78.8,139.6 76.1,136.1" fill="none" stroke="#f8f8f2" stroke-width="1.3" stroke-linejoin="round"/>
<polyline points="79.4,138.2 65.1,152.7 54.1,164.4 46.2,171.8 35.7,184.7" fill="none" stroke="#f8f8f2" stroke-width="1.3" stroke-linejoin="round"/>
<polyline points="79.4,138.2 85.9,127.5 89.7,107.0 97.8,93.7 100.5,79.0 109.7,67.5" fill="none" stroke="#f8f8f2" stroke-width="1.3" stroke-linejoin="round"/>
<polyline points="247.2,208.4 238.1,192.2 234.6,179.3 232.6,165.4 225.0,153.3" fill="none" stroke="#f8f8f2" stroke-width="1.3" stroke-linejoin="round"/>
<polyline points="247.2,208.4 249.9,194.1 246.3,178.9 253.1,161.3 252.9,149.2 251.2,135.1" fill="none" stroke="#f8f8f2" stroke-width="1.3" stroke-linejoin="round"/>
<polyline points="325.3,190.7 323.4,194.9 321.6,193.7" fill="none" stroke="#f8f8f2" stroke-width="1.3" stroke-linejoin="round"/>
<polyline points="325.3,190.7 320.5,186.9 317.3,183.0" fill="none" stroke="#f8f8f2" stroke-width="1.3" stroke-linejoin="round"/>
<polyline points="325.3,190.7 325.2,214.0 322.1,229.6" fill="none" stroke="#f8f8f2" stroke-width="1.3" stroke-linejoin="round"/>
<polyline points="441.3,28.3 436.5,34.2 434.2,34.8" fill="none" stroke="#f8f8f2" stroke-width="1.3" stroke-linejoin="round"/>
<polyline points="441.3,28.3 446.5,40.3 449.6,51.8 455.7,69.9 465.0,81.2" fill="none" stroke="#f8f8f2" stroke-width="1.3" stroke-linejoin="round"/>
<polyline points="726.5,27.1 711.0,31.6 699.5,41.5" fill="none" stroke="#f8f8f2" stroke-width="1.3" stroke-linejoin="round"/>
<polyline points="726.5,27.1 706.7,25.2 693.6,17.9" fill="none" stroke="#f8f8f2" stroke-width="1.3" stroke-linejoin="round"/>
<polyline points="726.5,27.1 715.0,24.8 695.8,17.7 681.4,15.7 668.5,12.4" fill="none" stroke="#f8f8f2" stroke-width="1.3" stroke-linejoin="round"/>
<polyline points="667.4,50.2 680.7,45.4 699.5,41.5" fill="none" stroke="#f8f8f2" stroke-width="1.3" stroke-linejoin="round"/>
<polyline points="667.4,50.2 684.3,34.4 693.6,17.9" fill="none" stroke="#f8f8f2" stroke-width="1.3" stroke-linejoin="round"/>
<polyline points="523.1,67.7 506.5,74.8 492.5,73.3 475.6,76.9 465.0,81.2" fill="none" stroke="#f8f8f2" stroke-width="1.3" stroke-linejoin="round"/>
<polyline points="523.1,67.7 532.6,81.1 540.2,94.4 548.3,105.8 562.0,121.0" fill="none" stroke="#f8f8f2" stroke-width="1.3" stroke-linejoin="round"/>
<polyline points="523.1,67.7 508.3,58.8 496.4,47.7 487.0,41.3 477.8,35.6 467.6,28.5 454.1,19.2" fill="none" stroke="#f8f8f2" stroke-width="1.3" stroke-linejoin="round"/>
<polyline points="717.6,103.4 705.0,104.3 688.0,97.7 674.6,96.9" fill="none" stroke="#f8f8f2" stroke-width="1.3" stroke-linejoin="round"/>
<polyline points="717.6,103.4 709.4,90.6 711.7,73.5 705.9,59.5 699.5,41.5" fill="none" stroke="#f8f8f2" stroke-width="1.3" stroke-linejoin="round"/>
<polyline points="611.1,136.4 591.9,131.5 578.4,128.8 562.0,121.0" fill="none" stroke="#f8f8f2" stroke-width="1.3" stroke-linejoin="round"/>
<polyline points="611.1,136.4 612.1,155.0 609.0,171.5 608.4,185.9 605.5,200.3" fill="none" stroke="#f8f8f2" stroke-width="1.3" stroke-linejoin="round"/>
<polyline points="611.1,136.4 600.8,148.1 592.0,166.2 583.7,185.4 578.7,198.1" fill="none" stroke="#f8f8f2" stroke-width="1.3" stroke-linejoin="round"/>
<polyline points="443.2,146.5 432.6,148.0 421.0,147.4" fill="none" stroke="#f8f8f2" stroke-width="1.3" stroke-linejoin="round"/>
<polyline points="443.2,146.5 433.2,126.9 425.8,117.3 413.5,99.7" fill="none" stroke="#f8f8f2" stroke-width="1.3" stroke-linejoin="round"/>
<polyline points="719.4,159.2 735.9,166.7 752.3,173.7" fill="none" stroke="#f8f8f2" stroke-width="1.3" stroke-linejoin="round"/>
<polyline points="719.4,159.2 709.7,169.4 699.3,184.6 686.4,200.3" fill="none" stroke="#f8f8f2" stroke-width="1.3" stroke-linejoin="round"/>
<polyline points="496.5,178.8 478.4,176.0 468.9,174.5 454.2,179.8 437.5,175.0" fill="none" stroke="#f8f8f2" stroke-width="1.3" stroke-linejoin="round"/>
<polyline points="496.5,178.8 483.1,169.8 469.7,164.1 458.7,155.5 443.2,146.5" fill="none" stroke="#f8f8f2" stroke-width="1.3" stroke-linejoin="round"/>
<polyline points="605.5,200.3 588.6,197.4 578.7,198.1" fill="none" stroke="#f8f8f2" stroke-width="1.3" stroke-linejoin="round"/>
<polyline points="605.5,200.3 623.1,201.8 639.3,198.6 654.2,200.0 670.0,197.2 686.4,200.3" fill="none" stroke="#f8f8f2" stroke-width="1.3" stroke-linejoin="round"/>
<polyline points="686.4,200.3 688.5,218.6 684.3,241.7" fill="none" stroke="#f8f8f2" stroke-width="1.3" stroke-linejoin="round"/>
<polyline points="686.4,200.3 703.4,198.5 708.9,189.3 728.5,188.1 738.7,177.1 752.3,173.7" fill="none" stroke="#f8f8f2" stroke-width="1.3" stroke-linejoin="round"/>
<polyline points="434.4,217.5 433.1,206.9 434.2,189.8 437.5,175.0" fill="none" stroke="#f8f8f2" stroke-width="1.3" stroke-linejoin="round"/>
<polyline points="434.4,217.5 434.0,206.5 437.8,185.3 435.7,174.8 441.0,159.1 443.2,146.5" fill="none" stroke="#f8f8f2" stroke-width="1.3" stroke-linejoin="round"/>
<polyline points="1104.5,8.3 1092.6,20.8 1084.9,38.5 1073.4,51.5 1068.3,63.2" fill="none" stroke="#f8f8f2" stroke-width="1.3" stroke-linejoin="round"/>
<polyline points="1104.5,8.3 1109.7,21.0 1112.9,41.4 1115.2,53.7 1113.4,70.2 1120.9,87.5 1119.4,102.5" fill="none" stroke="#f8f8f2" stroke-width="1.3" stroke-linejoin="round"/>
<polyline points="1104.5,8.3 1096.8,21.8 1089.5,32.8 1081.6,53.2 1076.5,68.0 1069.6,76.7 1065.1,90.2 1058.4,106.7" fill="none" stroke="#f8f8f2" stroke-width="1.3" stroke-linejoin="round"/>
<polyline points="915.2,28.3 897.0,34.4 883.8,35.7 863.5,35.7" fill="none" stroke="#f8f8f2" stroke-width="1.3" stroke-linejoin="round"/>
<polyline points="915.2,28.3 918.9,43.5 916.9,52.7 923.8,67.4 921.9,83.1 922.2,100.3 925.6,112.4" fill="none" stroke="#f8f8f2" stroke-width="1.3" stroke-linejoin="round"/>
<polyline points="1068.3,63.2 1068.8,75.8 1063.0,90.6 1058.4,106.7" fill="none" stroke="#f8f8f2" stroke-width="1.3" stroke-linejoin="round"/>
<polyline points="1068.3,63.2 1081.5,72.2 1091.2,80.1 1104.3,95.9 1119.4,102.5" fill="none" stroke="#f8f8f2" stroke-width="1.3" stroke-linejoin="round"/>
<polyline points="1207.4,61.2 1215.2,78.2 1223.0,99.8" fill="none" stroke="#f8f8f2" stroke-width="1.3" stroke-linejoin="round"/>
<polyline points="1207.4,61.2 1225.4,70.8 1236.5,69.5 1251.7,78.0" fill="none" stroke="#f8f8f2" stroke-width="1.3" stroke-linejoin="round"/>
<polyline points="892.5,102.5 906.9,105.5 925.6,112.4" fill="none" stroke="#f8f8f2" stroke-width="1.3" stroke-linejoin="round"/>
<polyline points="892.5,102.5 887.3,92.2 882.9,75.1 874.4,62.6 868.3,47.8 863.5,35.7" fill="none" stroke="#f8f8f2" stroke-width="1.3" stroke-linejoin="round"/>
<polyline points="1119.4,102.5 1100.7,101.8 1092.7,101.6 1073.7,106.7 1058.4,106.7" fill="none" stroke="#f8f8f2" stroke-width="1.3" stroke-linejoin="round"/>
<polyline points="1119.4,102.5 1109.4,107.6 1091.8,115.3 1080.0,124.3 1071.5,134.9 1055.0,139.5" fill="none" stroke="#f8f8f2" stroke-width="1.3" stroke-linejoin="round"/>
<polyline points="1235.2,113.3 1232.1,102.7 1223.0,99.8" fill="none" stroke="#f8f8f2" stroke-width="1.3" stroke-linejoin="round"/>
<polyline points="1235.2,113.3 1246.6,95.5 1251.7,78.0" fill="none" stroke="#f8f8f2" stroke-width="1.3" stroke-linejoin="round"/>
<polyline points="1245.4,146.2 1237.2,156.8 1227.7,175.3" fill="none" stroke="#f8f8f2" stroke-width="1.3" stroke-linejoin="round"/>
<polyline points="1245.4,146.2 1237.1,134.1 1233.1,118.1 1223.0,99.8" fill="none" stroke="#f8f8f2" stroke-width="1.3" stroke-linejoin="round"/>
<polyline points="1227.7,175.3 1233.4,157.8 1228.3,141.5 1233.5,130.3 1235.2,113.3" fill="none" stroke="#f8f8f2" stroke-width="1.3" stroke-linejoin="round"/>
<polyline points="1227.7,175.3 1229.2,193.5 1224.8,210.3 1221.2,225.0 1219.5,241.0" fill="none" stroke="#f8f8f2" stroke-width="1.3" stroke-linejoin="round"/>
<polyline points="1071.6,192.3 1081.8,195.2 1096.3,191.4" fill="none" stroke="#f8f8f2" stroke-width="1.3" stroke-linejoin="round"/>
<polyline points="1071.6,192.3 1088.2,195.8 1099.5,200.4 1118.0,207.4" fill="none" stroke="#f8f8f2" stroke-width="1.3" stroke-linejoin="round"/>
<polyline points="954.5,192.3 944.1,192.9 931.5,190.3" fill="none" stroke="#f8f8f2" stroke-width="1.3" stroke-linejoin="round"/>
<polyline points="954.5,192.3 958.2,202.2 968.3,219.7 974.1,230.2 982.6,241.9 988.6,259.2" fill="none" stroke="#f8f8f2" stroke-width="1.3" stroke-linejoin="round"/>
<polyline points="954.5,192.3 965.3,198.6 982.9,206.7 994.6,212.0 1001.8,216.8 1019.9,227.1 1028.6,232.1" fill="none" stroke="#f8f8f2" stroke-width="1.3" stroke-linejoin="round"/>
<polyline points="3.5,237.2 11.5,225.5 18.9,209.0 29.0,201.2 35.7,184.7" fill="none" stroke="#f8f8f2" stroke-width="1.3" stroke-linejoin="round"/>
<polyline points="3.5,237.2 12.4,245.8 24.4,261.3 38.2,271.9 47.9,286.6" fill="none" stroke="#f8f8f2" stroke-width="1.3" stroke-linejoin="round"/>
<polyline points="295.4,270.2 315.7,275.5 331.2,277.0" fill="none" stroke="#f8f8f2" stroke-width="1.3" stroke-linejoin="round"/>
<polyline points="295.4,270.2 308.1,258.6 324.5,250.2 333.4,242.4" fill="none" stroke="#f8f8f2" stroke-width="1.3" stroke-linejoin="round"/>
<polyline points="295.4,270.2 306.9,254.5 311.0,245.2 322.1,229.6" fill="none" stroke="#f8f8f2" stroke-width="1.3" stroke-linejoin="round"/>
<polyline points="59.6,315.3 53.7,298.5 47.9,286.6" fill="none" stroke="#f8f8f2" stroke-width="1.3" stroke-linejoin="round"/>
<polyline points="59.6,315.3 42.0,309.6 28.8,305.2" fill="none" stroke="#f8f8f2" stroke-width="1.3" stroke-linejoin="round"/>
<polyline points="330.1,319.4 315.4,323.6 298.0,320.6" fill="none" stroke="#f8f8f2" stroke-width="1.3" stroke-linejoin="round"/>
<polyline points="330.1,319.4 327.6,304.4 328.5,294.9 331.2,277.0" fill="none" stroke="#f8f8f2" stroke-width="1.3" stroke-linejoin="round"/>
<polyline points="330.1,319.4 313.7,323.4 299.5,333.7 289.5,342.2" fill="none" stroke="#f8f8f2" stroke-width="1.3" stroke-linejoin="round"/>
<polyline points="388.4,358.2 404.2,354.4 416.3,342.6" fill="none" stroke="#f8f8f2" stroke-width="1.3" stroke-linejoin="round"/>
<polyline points="388.4,358.2 406.6,358.0 415.4,363.9 434.7,357.8 447.5,362.7" fill="none" stroke="#f8f8f2" stroke-width="1.3" stroke-linejoin="round"/>
<polyline points="20.3,372.6 37.3,374.6 50.7,377.1 64.8,377.4 83.2,384.3" fill="none" stroke="#f8f8f2" stroke-width="1.3" stroke-linejoin="round"/>
<polyline points="20.3,372.6 32.0,362.1 50.8,351.0 64.3,342.4 74.1,335.4" fill="none" stroke="#f8f8f2" stroke-width="1.3" stroke-linejoin="round"/>
<polyline points="20.3,372.6 21.3,358.3 27.1,338.3 23.1,321.8 28.8,305.2" fill="none" stroke="#f8f8f2" stroke-width="1.3" stroke-linejoin="round"/>
<polyline points="83.2,384.3 103.8,375.9 117.4,377.5 135.5,370.4" fill="none" stroke="#f8f8f2" stroke-width="1.3" stroke-linejoin="round"/>
<polyline points="83.2,384.3 91.6,393.7 92.0,407.0 105.4,421.6 108.3,436.6" fill="none" stroke="#f8f8f2" stroke-width="1.3" stroke-linejoin="round"/>
<polyline points="196.5,389.4 215.6,390.1 230.8,384.4" fill="none" stroke="#f8f8f2" stroke-width="1.3" stroke-linejoin="round"/>
<polyline points="196.5,389.4 180.0,382.8 169.7,380.8 148.8,376.8 135.5,370.4" fill="none" stroke="#f8f8f2" stroke-width="1.3" stroke-linejoin="round"/>
<polyline points="196.5,389.4 194.4,371.1 191.3,358.3 198.0,340.8 194.1,323.2" fill="none" stroke="#f8f8f2" stroke-width="1.3" stroke-linejoin="round"/>
<polyline points="274.3,387.3 290.9,383.3 311.7,379.7" fill="none" stroke="#f8f8f2" stroke-width="1.3" stroke-linejoin="round"/>
<polyline points="274.3,387.3 263.5,390.0 244.4,383.4 230.8,384.4" fill="none" stroke="#f8f8f2" stroke-width="1.3" stroke-linejoin="round"/>
<polyline points="349.4,406.6 334.8,400.2 324.7,391.4 307.2,387.6" fill="none" stroke="#f8f8f2" stroke-width="1.3" stroke-linejoin="round"/>
<polyline points="349.4,406.6 339.3,399.5 326.9,390.8 311.7,379.7" fill="none" stroke="#f8f8f2" stroke-width="1.3" stroke-linejoin="round"/>
<polyline points="349.4,406.6 344.1,422.3 335.7,439.6 331.0,457.8" fill="none" stroke="#f8f8f2" stroke-width="1.3" stroke-linejoin="round"/>
<polyline points="754.3,252.5 747.3,270.9 743.1,281.7 740.5,301.6" fill="none" stroke="#f8f8f2" stroke-width="1.3" stroke-linejoin="round"/>
<polyline points="754.3,252.5 766.0,251.3 783.7,253.2 803.6,251.6 815.9,246.2" fill="none" stroke="#f8f8f2" stroke-width="1.3" stroke-linejoin="round"/>
<polyline points="716.3,308.2 726.5,301.5 740.5,301.6" fill="none" stroke="#f8f8f2" stroke-width="1.3" stroke-linejoin="round"/>
<polyline points="716.3,308.2 720.0,292.9 731.8,277.1 737.0,262.2" fill="none" stroke="#f8f8f2" stroke-width="1.3" stroke-linejoin="round"/>
<polyline points="716.3,308.2 699.9,315.6 688.8,325.7 675.5,335.1 659.3,340.4" fill="none" stroke="#f8f8f2" stroke-width="1.3" stroke-linejoin="round"/>
<polyline points="465.3,357.4 459.1,358.4 447.5,362.7" fill="none" stroke="#f8f8f2" stroke-width="1.3" stroke-linejoin="round"/>
<polyline points="465.3,357.4 449.5,351.5 434.5,345.1 416.3,342.6" fill="none" stroke="#f8f8f2" stroke-width="1.3" stroke-linejoin="round"/>
<polyline points="582.4,342.5 586.7,329.1 595.1,319.8" fill="none" stroke="#f8f8f2" stroke-width="1.3" stroke-linejoin="round"/>
<polyline points="582.4,342.5 585.2,358.8 594.2,367.6 599.2,382.3" fill="none" stroke="#f8f8f2" stroke-width="1.3" stroke-linejoin="round"/>
<polyline points="582.4,342.5 596.1,348.7 611.6,344.9 628.5,350.5 640.6,351.5" fill="none" stroke="#f8f8f2" stroke-width="1.3" stroke-linejoin="round"/>
<polyline points="659.3,340.4 662.6,362.0 666.4,378.5" fill="none" stroke="#f8f8f2" stroke-width="1.3" stroke-linejoin="round"/>
<polyline points="792.4,356.9 790.0,348.9 782.2,334.2" fill="none" stroke="#f8f8f2" stroke-width="1.3" stroke-linejoin="round"/>
<polyline points="792.4,356.9 801.1,362.7 814.1,369.3 833.2,379.8 841.8,386.6" fill="none" stroke="#f8f8f2" stroke-width="1.3" stroke-linejoin="round"/>
<polyline points="792.4,356.9 780.8,360.8 765.3,366.4 745.4,374.0 732.3,376.7" fill="none" stroke="#f8f8f2" stroke-width="1.3" stroke-linejoin="round"/>
<polyline points="732.3,376.7 748.3,362.9 758.0,356.4 767.5,343.8 782.2,334.2" fill="none" stroke="#f8f8f2" stroke-width="1.3" stroke-linejoin="round"/>
<polyline points="599.2,382.3 609.1,370.7 628.2,359.3 640.6,351.5" fill="none" stroke="#f8f8f2" stroke-width="1.3" stroke-linejoin="round"/>
<polyline points="599.2,382.3 587.3,389.6 580.9,402.0 564.7,408.1 557.8,421.0" fill="none" stroke="#f8f8f2" stroke-width="1.3" stroke-linejoin="round"/>
<polyline points="666.4,378.5 661.5,393.8 658.3,408.2" fill="none" stroke="#f8f8f2" stroke-width="1.3" stroke-linejoin="round"/>
<polyline points="666.4,378.5 654.6,361.7 640.6,351.5" fill="none" stroke="#f8f8f2" stroke-width="1.3" stroke-linejoin="round"/>
<polyline points="841.8,386.6 854.5,390.3 871.8,389.1 887.9,392.9" fill="none" stroke="#f8f8f2" stroke-width="1.3" stroke-linejoin="round"/>
<polyline points="557.8,421.0 572.6,424.6 591.4,430.6 605.4,439.0" fill="none" stroke="#f8f8f2" stroke-width="1.3" stroke-linejoin="round"/>
<polyline points="557.8,421.0 537.6,429.5 524.6,434.1 508.2,439.8 492.7,442.0" fill="none" stroke="#f8f8f2" stroke-width="1.3" stroke-linejoin="round"/>
<polyline points="1028.6,232.1 1015.0,238.4 998.1,250.6 988.6,259.2" fill="none" stroke="#f8f8f2" stroke-width="1.3" stroke-linejoin="round"/>
<polyline points="1028.6,232.1 1036.7,220.7 1039.3,203.8 1049.6,188.1" fill="none" stroke="#f8f8f2" stroke-width="1.3" stroke-linejoin="round"/>
<polyline points="1028.6,232.1 1038.3,222.2 1047.3,210.5 1061.0,205.7 1071.6,192.3" fill="none" stroke="#f8f8f2" stroke-width="1.3" stroke-linejoin="round"/>
<polyline points="988.6,259.2 979.4,273.3 962.9,276.2 953.7,289.2 937.5,300.4" fill="none" stroke="#f8f8f2" stroke-width="1.3" stroke-linejoin="round"/>
<polyline points="937.5,300.4 950.9,309.2 957.9,316.0" fill="none" stroke="#f8f8f2" stroke-width="1.3" stroke-linejoin="round"/>
<polyline points="937.5,300.4 952.3,306.5 964.1,315.8 973.2,329.6 986.2,335.6" fill="none" stroke="#f8f8f2" stroke-width="1.3" stroke-linejoin="round"/>
<polyline points="1128.2,275.1 1149.4,281.5 1165.2,293.0" fill="none" stroke="#f8f8f2" stroke-width="1.3" stroke-linejoin="round"/>
<polyline points="1128.2,275.1 1122.0,287.8 1120.5,301.2 1116.4,315.6" fill="none" stroke="#f8f8f2" stroke-width="1.3" stroke-linejoin="round"/>
<polyline points="1116.4,315.6 1104.1,312.3 1090.3,313.4 1073.2,316.9" fill="none" stroke="#f8f8f2" stroke-width="1.3" stroke-linejoin="round"/>
<polyline points="1116.4,315.6 1133.5,308.5 1150.0,299.0 1165.2,293.0" fill="none" stroke="#f8f8f2" stroke-width="1.3" stroke-linejoin="round"/>
<polyline points="1210.0,332.0 1215.1,314.5 1221.5,295.6" fill="none" stroke="#f8f8f2" stroke-width="1.3" stroke-linejoin="round"/>
<polyline points="1210.0,332.0 1198.2,323.5 1187.2,312.0 1172.6,303.7 1165.2,293.0" fill="none" stroke="#f8f8f2" stroke-width="1.3" stroke-linejoin="round"/>
<polyline points="1210.0,332.0 1223.7,339.7 1239.7,353.9 1251.0,358.9 1265.1,371.3" fill="none" stroke="#f8f8f2" stroke-width="1.3" stroke-linejoin="round"/>
<polyline points="1020.2,324.2 1034.9,321.2 1052.3,318.9 1073.2,316.9" fill="none" stroke="#f8f8f2" stroke-width="1.3" stroke-linejoin="round"/>
<polyline points="1020.2,324.2 1004.7,318.5 990.2,316.7 975.4,320.3 957.9,316.0" fill="none" stroke="#f8f8f2" stroke-width="1.3" stroke-linejoin="round"/>
<polyline points="969.1,368.5 972.8,370.1 976.4,378.8" fill="none" stroke="#f8f8f2" stroke-width="1.3" stroke-linejoin="round"/>
<polyline points="969.1,368.5 968.1,383.3 967.1,400.1" fill="none" stroke="#f8f8f2" stroke-width="1.3" stroke-linejoin="round"/>
<polyline points="969.1,368.5 981.2,349.1 986.2,335.6" fill="none" stroke="#f8f8f2" stroke-width="1.3" stroke-linejoin="round"/>
<polyline points="1265.1,371.3 1261.7,390.7 1261.8,400.2 1257.5,422.1 1251.9,434.5" fill="none" stroke="#f8f8f2" stroke-width="1.3" stroke-linejoin="round"/>
<polyline points="1265.1,371.3 1248.6,380.2 1241.2,388.7 1229.3,399.6 1213.2,411.5" fill="none" stroke="#f8f8f2" stroke-width="1.3" stroke-linejoin="round"/>
<polyline points="967.1,400.1 974.3,386.6 976.4,378.8" fill="none" stroke="#f8f8f2" stroke-width="1.3" stroke-linejoin="round"/>
<polyline points="967.1,400.1 953.4,392.7 937.4,376.7 926.1,367.8" fill="none" stroke="#f8f8f2" stroke-width="1.3" stroke-linejoin="round"/>
<polyline points="1106.2,413.5 1105.0,427.6 1100.0,442.1 1102.5,460.2" fill="none" stroke="#f8f8f2" stroke-width="1.3" stroke-linejoin="round"/>
<polyline points="1106.2,413.5 1110.6,400.0 1109.8,388.6 1107.4,375.5 1113.1,356.7 1115.9,341.7 1118.9,330.2 1116.4,315.6" fill="none" stroke="#f8f8f2" stroke-width="1.3" stroke-linejoin="round"/>
<polyline points="1213.2,411.5 1225.4,422.6 1239.8,429.4" fill="none" stroke="#f8f8f2" stroke-width="1.3" stroke-linejoin="round"/>
<polyline points="1213.2,411.5 1225.6,416.6 1240.9,423.2 1251.9,434.5" fill="none" stroke="#f8f8f2" stroke-width="1.3" stroke-linejoin="round"/>
<polyline points="1213.2,411.5 1217.1,424.5 1216.9,445.3 1217.1,456.4" fill="none" stroke="#f8f8f2" stroke-width="1.3" stroke-linejoin="round"/>
<polyline points="269.3,509.2 256.2,514.6 240.2,513.5 228.0,521.6" fill="none" stroke="#f8f8f2" stroke-width="1.3" stroke-linejoin="round"/>
<polyline points="269.3,509.2 281.7,502.1 291.0,486.4 307.5,474.5 314.7,466.9 331.0,457.8" fill="none" stroke="#f8f8f2" stroke-width="1.3" stroke-linejoin="round"/>
<polyline points="84.4,522.4 76.7,514.0 75.3,507.8" fill="none" stroke="#f8f8f2" stroke-width="1.3" stroke-linejoin="round"/>
<polyline points="84.4,522.4 80.5,508.4 81.7,490.7 80.2,478.2 77.5,463.7" fill="none" stroke="#f8f8f2" stroke-width="1.3" stroke-linejoin="round"/>
<polyline points="84.4,522.4 66.1,527.3 51.5,522.5 35.0,527.9 22.8,528.2" fill="none" stroke="#f8f8f2" stroke-width="1.3" stroke-linejoin="round"/>
<polyline points="22.8,528.2 16.9,530.5 5.0,528.3" fill="none" stroke="#f8f8f2" stroke-width="1.3" stroke-linejoin="round"/>
<polyline points="22.8,528.2 36.4,521.9 50.2,517.6 65.7,514.8 75.3,507.8" fill="none" stroke="#f8f8f2" stroke-width="1.3" stroke-linejoin="round"/>
<polyline points="150.4,555.4 166.5,554.1 186.7,546.3" fill="none" stroke="#f8f8f2" stroke-width="1.3" stroke-linejoin="round"/>
<polyline points="150.4,555.4 152.4,571.0 161.0,584.0 167.4,601.5" fill="none" stroke="#f8f8f2" stroke-width="1.3" stroke-linejoin="round"/>
<polyline points="150.4,555.4 133.7,551.0 120.1,542.6 114.3,532.7 95.2,529.9 84.4,522.4" fill="none" stroke="#f8f8f2" stroke-width="1.3" stroke-linejoin="round"/>
<polyline points="361.3,597.7 369.5,584.3 380.1,566.0 384.2,552.4 393.9,539.5" fill="none" stroke="#f8f8f2" stroke-width="1.3" stroke-linejoin="round"/>
<polyline points="361.3,597.7 369.7,583.1 380.3,571.2 391.6,565.5 405.1,554.9 415.8,538.9 424.6,529.3" fill="none" stroke="#f8f8f2" stroke-width="1.3" stroke-linejoin="round"/>
<polyline points="108.3,625.6 123.5,619.1 140.1,613.7 150.7,608.7 167.4,601.5" fill="none" stroke="#f8f8f2" stroke-width="1.3" stroke-linejoin="round"/>
<polyline points="108.3,625.6 96.3,623.9 79.8,622.9 59.1,625.3 47.2,631.6 29.5,628.6" fill="none" stroke="#f8f8f2" stroke-width="1.3" stroke-linejoin="round"/>
<polyline points="108.3,625.6 118.7,610.2 128.2,596.1 131.5,586.7 143.0,571.0 150.4,555.4" fill="none" stroke="#f8f8f2" stroke-width="1.3" stroke-linejoin="round"/>
<polyline points="247.2,653.7 235.2,648.8 220.3,639.0 208.9,630.5 193.5,620.7 181.2,608.7 167.4,601.5" fill="none" stroke="#f8f8f2" stroke-width="1.3" stroke-linejoin="round"/>
<polyline points="622.5,458.3 634.9,461.4 654.0,457.9" fill="none" stroke="#f8f8f2" stroke-width="1.3" stroke-linejoin="round"/>
<polyline points="622.5,458.3 628.6,442.0 637.2,436.7 648.1,417.9 658.3,408.2" fill="none" stroke="#f8f8f2" stroke-width="1.3" stroke-linejoin="round"/>
<polyline points="428.0,481.8 423.1,494.0 427.3,514.6 424.6,529.3" fill="none" stroke="#f8f8f2" stroke-width="1.3" stroke-linejoin="round"/>
<polyline points="428.0,481.8 421.1,498.1 407.5,511.4 401.4,527.6 393.9,539.5" fill="none" stroke="#f8f8f2" stroke-width="1.3" stroke-linejoin="round"/>
<polyline points="428.0,481.8 443.5,477.0 450.4,468.8 470.1,461.5 476.6,447.6 492.7,442.0" fill="none" stroke="#f8f8f2" stroke-width="1.3" stroke-linejoin="round"/>
<polyline points="657.2,554.6 667.6,543.9 673.6,530.8 680.1,515.0" fill="none" stroke="#f8f8f2" stroke-width="1.3" stroke-linejoin="round"/>
<polyline points="657.2,554.6 673.1,562.7 683.6,570.9 701.6,583.9" fill="none" stroke="#f8f8f2" stroke-width="1.3" stroke-linejoin="round"/>
<polyline points="730.3,587.6 739.7,590.3 744.9,597.7" fill="none" stroke="#f8f8f2" stroke-width="1.3" stroke-linejoin="round"/>
<polyline points="730.3,587.6 714.5,585.1 701.6,583.9" fill="none" stroke="#f8f8f2" stroke-width="1.3" stroke-linejoin="round"/>
<polyline points="730.3,587.6 728.2,600.4 732.0,618.8 734.3,630.4 737.1,646.6" fill="none" stroke="#f8f8f2" stroke-width="1.3" stroke-linejoin="round"/>
<polyline points="560.4,596.4 551.6,602.5 537.1,606.6" fill="none" stroke="#f8f8f2" stroke-width="1.3" stroke-linejoin="round"/>
<polyline points="560.4,596.4 550.6,579.1 547.7,565.4 542.1,546.5" fill="none" stroke="#f8f8f2" stroke-width="1.3" stroke-linejoin="round"/>
<polyline points="444.3,636.5 447.7,620.8 453.8,599.5 458.2,584.5" fill="none" stroke="#f8f8f2" stroke-width="1.3" stroke-linejoin="round"/>
<polyline points="444.3,636.5 464.3,630.6 481.0,628.5 491.5,626.1 512.6,625.8" fill="none" stroke="#f8f8f2" stroke-width="1.3" stroke-linejoin="round"/>
<polyline points="444.3,636.5 457.4,628.2 462.3,612.2 477.2,602.6 485.7,588.1 499.2,576.0" fill="none" stroke="#f8f8f2" stroke-width="1.3" stroke-linejoin="round"/>
<polyline points="737.1,646.6 719.7,644.4 707.3,646.7 687.0,647.8 674.4,646.8" fill="none" stroke="#f8f8f2" stroke-width="1.3" stroke-linejoin="round"/>
<polyline points="855.5,488.0 844.9,503.8 842.6,517.3 833.9,528.6" fill="none" stroke="#f8f8f2" stroke-width="1.3" stroke-linejoin="round"/>
<polyline points="855.5,488.0 872.3,484.0 886.2,481.5 905.9,476.2 918.5,476.7" fill="none" stroke="#f8f8f2" stroke-width="1.3" stroke-linejoin="round"/>
<polyline points="855.5,488.0 871.2,490.8 878.4,499.2 896.6,507.7 905.0,517.3 916.5,520.4 931.2,527.3" fill="none" stroke="#f8f8f2" stroke-width="1.3" stroke-linejoin="round"/>
<polyline points="918.5,476.7 923.0,495.6 929.0,511.6 931.2,527.3" fill="none" stroke="#f8f8f2" stroke-width="1.3" stroke-linejoin="round"/>
<polyline points="1003.3,471.6 1005.9,466.5 1014.4,462.0" fill="none" stroke="#f8f8f2" stroke-width="1.3" stroke-linejoin="round"/>
<polyline points="1003.3,471.6 1020.3,475.3 1028.6,481.6 1045.0,489.1" fill="none" stroke="#f8f8f2" stroke-width="1.3" stroke-linejoin="round"/>
<polyline points="1003.3,471.6 1017.3,482.9 1025.3,486.0 1038.5,496.0 1053.1,503.3 1065.3,514.6" fill="none" stroke="#f8f8f2" stroke-width="1.3" stroke-linejoin="round"/>
<polyline points="1202.4,500.2 1187.5,503.3 1179.1,513.3 1161.8,517.1" fill="none" stroke="#f8f8f2" stroke-width="1.3" stroke-linejoin="round"/>
<polyline points="1202.4,500.2 1204.1,489.3 1209.0,470.1 1217.1,456.4" fill="none" stroke="#f8f8f2" stroke-width="1.3" stroke-linejoin="round"/>
<polyline points="1065.3,514.6 1074.6,524.8 1088.8,532.8" fill="none" stroke="#f8f8f2" stroke-width="1.3" stroke-linejoin="round"/>
<polyline points="1065.3,514.6 1052.0,499.5 1045.0,489.1" fill="none" stroke="#f8f8f2" stroke-width="1.3" stroke-linejoin="round"/>
<polyline points="1065.3,514.6 1081.6,515.1 1098.8,525.5 1116.8,527.4" fill="none" stroke="#f8f8f2" stroke-width="1.3" stroke-linejoin="round"/>
<polyline points="931.2,527.3 938.1,541.8 943.1,556.0 944.5,571.7 952.0,587.3 958.2,599.9" fill="none" stroke="#f8f8f2" stroke-width="1.3" stroke-linejoin="round"/>
<polyline points="931.2,527.3 949.1,533.0 961.1,541.7 974.5,543.8 991.6,555.2 1004.5,558.4" fill="none" stroke="#f8f8f2" stroke-width="1.3" stroke-linejoin="round"/>
<polyline points="1004.5,558.4 994.1,568.4 979.9,580.2 966.6,588.9 958.2,599.9" fill="none" stroke="#f8f8f2" stroke-width="1.3" stroke-linejoin="round"/>
<polyline points="1004.5,558.4 1018.9,551.3 1029.9,538.9 1040.4,531.8 1054.1,522.6 1065.3,514.6" fill="none" stroke="#f8f8f2" stroke-width="1.3" stroke-linejoin="round"/>
<polyline points="1220.6,575.3 1218.4,563.7 1210.8,546.5 1211.9,529.3 1206.0,519.0 1202.4,500.2" fill="none" stroke="#f8f8f2" stroke-width="1.3" stroke-linejoin="round"/>
<polyline points="1220.6,575.3 1203.9,567.2 1191.8,560.7 1185.1,550.1 1165.3,542.1 1155.5,533.1" fill="none" stroke="#f8f8f2" stroke-width="1.3" stroke-linejoin="round"/>
<polyline points="1220.6,575.3 1216.1,592.6 1211.1,607.5 1208.8,622.1 1200.7,641.1 1196.6,653.1" fill="none" stroke="#f8f8f2" stroke-width="1.3" stroke-linejoin="round"/>
<polyline points="1080.2,569.5 1083.6,553.3 1088.8,532.8" fill="none" stroke="#f8f8f2" stroke-width="1.3" stroke-linejoin="round"/>
<polyline points="1080.2,569.5 1074.7,591.7 1074.0,602.6 1072.6,624.4" fill="none" stroke="#f8f8f2" stroke-width="1.3" stroke-linejoin="round"/>
<polyline points="1140.4,598.6 1126.1,605.1 1111.5,612.5 1102.2,622.0 1090.3,627.7" fill="none" stroke="#f8f8f2" stroke-width="1.3" stroke-linejoin="round"/>
<polyline points="1140.4,598.6 1124.2,589.4 1108.1,586.0 1098.8,577.0 1080.2,569.5" fill="none" stroke="#f8f8f2" stroke-width="1.3" stroke-linejoin="round"/>
<polyline points="1140.4,598.6 1141.9,584.6 1147.1,563.5 1148.8,551.7 1155.5,533.1" fill="none" stroke="#f8f8f2" stroke-width="1.3" stroke-linejoin="round"/>
<polyline points="897.5,618.6 882.1,627.3 871.6,636.3 854.6,639.7 841.0,645.9 826.4,656.4" fill="none" stroke="#f8f8f2" stroke-width="1.3" stroke-linejoin="round"/>
<polyline points="897.5,618.6 884.1,618.7 868.2,619.4 848.4,620.5 832.7,621.3 813.3,626.9 801.2,626.4" fill="none" stroke="#f8f8f2" stroke-width="1.3" stroke-linejoin="round"/>
<polyline points="1090.3,627.7 1079.7,624.0 1072.6,624.4" fill="none" stroke="#f8f8f2" stroke-width="1.3" stroke-linejoin="round"/>
<polyline points="1090.3,627.7 1085.6,641.9 1084.1,656.4" fill="none" stroke="#f8f8f2" stroke-width="1.3" stroke-linejoin="round"/>
<polyline points="723.0,495.0 719.6,499.8 717.3,502.4" fill="none" stroke="#f8f8f2" stroke-width="1.3" stroke-linejoin="round"/>
<polyline points="723.0,495.0 712.1,504.5 690.9,510.9 680.1,515.0" fill="none" stroke="#f8f8f2" stroke-width="1.3" stroke-linejoin="round"/>
<polyline points="413.5,99.7 419.3,117.9 415.6,134.2 421.0,147.4" fill="none" stroke="#f8f8f2" stroke-width="1.3" stroke-linejoin="round"/>
<polyline points="413.5,99.7 431.8,89.7 444.0,91.0 465.0,81.2" fill="none" stroke="#f8f8f2" stroke-width="1.3" stroke-linejoin="round"/>
<polyline points="831.2,47.9 848.6,39.8 863.5,35.7" fill="none" stroke="#f8f8f2" stroke-width="1.3" stroke-linejoin="round"/>
<polyline points="831.2,47.9 816.3,57.6 805.6,75.2 794.7,82.8 784.2,98.2" fill="none" stroke="#f8f8f2" stroke-width="1.3" stroke-linejoin="round"/>
<polyline points="684.3,241.7 699.8,249.6 708.2,253.5 724.0,259.0 737.0,262.2" fill="none" stroke="#f8f8f2" stroke-width="1.3" stroke-linejoin="round"/>
<polyline points="684.3,241.7 697.8,246.9 712.8,244.1 724.2,245.3 740.2,246.8 754.3,252.5" fill="none" stroke="#f8f8f2" stroke-width="1.3" stroke-linejoin="round"/>
<polyline points="74.1,335.4 83.4,319.7 93.2,309.7 102.9,296.9" fill="none" stroke="#f8f8f2" stroke-width="1.3" stroke-linejoin="round"/>
<polyline points="47.9,286.6 38.7,298.8 28.8,305.2" fill="none" stroke="#f8f8f2" stroke-width="1.3" stroke-linejoin="round"/>
<polyline points="47.9,286.6 29.7,286.1 19.2,280.7 5.2,276.9" fill="none" stroke="#f8f8f2" stroke-width="1.3" stroke-linejoin="round"/>
<polyline points="89.2,60.0 98.4,63.1 109.7,67.5" fill="none" stroke="#f8f8f2" stroke-width="1.3" stroke-linejoin="round"/>
<polyline points="542.1,546.5 551.7,558.0 554.0,576.2" fill="none" stroke="#f8f8f2" stroke-width="1.3" stroke-linejoin="round"/>
<polyline points="542.1,546.5 540.5,532.3 532.9,516.7 533.9,500.5" fill="none" stroke="#f8f8f2" stroke-width="1.3" stroke-linejoin="round"/>
<polyline points="542.1,546.5 529.3,559.8 512.2,570.0 499.2,576.0" fill="none" stroke="#f8f8f2" stroke-width="1.3" stroke-linejoin="round"/>
<polyline points="158.1,147.6 161.7,155.5 165.2,163.7" fill="none" stroke="#f8f8f2" stroke-width="1.3" stroke-linejoin="round"/>
<polyline points="801.2,626.4 797.8,613.7 796.9,595.1" fill="none" stroke="#f8f8f2" stroke-width="1.3" stroke-linejoin="round"/>
<polyline points="801.2,626.4 812.7,641.2 826.4,656.4" fill="none" stroke="#f8f8f2" stroke-width="1.3" stroke-linejoin="round"/>
<polyline points="801.2,626.4 787.4,621.4 770.8,611.6 758.4,605.3 744.9,597.7" fill="none" stroke="#f8f8f2" stroke-width="1.3" stroke-linejoin="round"/>
<polyline points="737.0,262.2 741.4,280.2 740.5,301.6" fill="none" stroke="#f8f8f2" stroke-width="1.3" stroke-linejoin="round"/>
<polyline points="1246.7,30.8 1251.0,45.8 1250.0,60.5 1251.7,78.0" fill="none" stroke="#f8f8f2" stroke-width="1.3" stroke-linejoin="round"/>
<polyline points="1096.3,191.4 1108.2,201.7 1118.0,207.4" fill="none" stroke="#f8f8f2" stroke-width="1.3" stroke-linejoin="round"/>
<polyline points="1096.3,191.4 1077.0,192.1 1068.2,189.6 1049.6,188.1" fill="none" stroke="#f8f8f2" stroke-width="1.3" stroke-linejoin="round"/>
<polyline points="184.2,77.9 195.8,76.0 214.6,77.4" fill="none" stroke="#f8f8f2" stroke-width="1.3" stroke-linejoin="round"/>
<polyline points="184.2,77.9 169.3,86.4 162.2,99.9" fill="none" stroke="#f8f8f2" stroke-width="1.3" stroke-linejoin="round"/>
<polyline points="393.9,539.5 412.6,535.3 424.6,529.3" fill="none" stroke="#f8f8f2" stroke-width="1.3" stroke-linejoin="round"/>
<polyline points="815.9,246.2 830.6,253.0 843.7,264.1 857.7,270.3 868.9,282.6" fill="none" stroke="#f8f8f2" stroke-width="1.3" stroke-linejoin="round"/>
<polyline points="815.9,246.2 797.6,245.7 786.5,255.9 769.8,254.7 755.3,261.3 737.0,262.2" fill="none" stroke="#f8f8f2" stroke-width="1.3" stroke-linejoin="round"/>
<polyline points="699.5,41.5 697.0,27.8 693.6,17.9" fill="none" stroke="#f8f8f2" stroke-width="1.3" stroke-linejoin="round"/>
<polyline points="76.1,136.1 64.4,147.7 54.4,159.9 46.9,176.0 35.7,184.7" fill="none" stroke="#f8f8f2" stroke-width="1.3" stroke-linejoin="round"/>
<polyline points="76.1,136.1 79.3,123.0 85.9,105.7 98.7,95.6 106.3,80.8 109.7,67.5" fill="none" stroke="#f8f8f2" stroke-width="1.3" stroke-linejoin="round"/>
<polyline points="868.9,282.6 884.9,285.9 895.8,289.9 909.4,300.8 925.2,308.6 939.8,313.4 957.9,316.0" fill="none" stroke="#f8f8f2" stroke-width="1.3" stroke-linejoin="round"/>
<polyline points="401.2,387.1 403.2,368.4 413.0,355.4 416.3,342.6" fill="none" stroke="#f8f8f2" stroke-width="1.3" stroke-linejoin="round"/>
<polyline points="401.2,387.1 418.5,376.4 428.4,373.0 447.5,362.7" fill="none" stroke="#f8f8f2" stroke-width="1.3" stroke-linejoin="round"/>
<polyline points="578.7,198.1 577.1,185.6 573.9,164.0 569.7,153.6 565.1,139.9 562.0,121.0" fill="none" stroke="#f8f8f2" stroke-width="1.3" stroke-linejoin="round"/>
<polyline points="1014.4,462.0 1027.7,479.3 1045.0,489.1" fill="none" stroke="#f8f8f2" stroke-width="1.3" stroke-linejoin="round"/>
<polyline points="311.7,379.7 306.8,386.6 307.2,387.6" fill="none" stroke="#f8f8f2" stroke-width="1.3" stroke-linejoin="round"/>
<polyline points="311.7,379.7 304.2,363.7 295.9,355.3 289.5,342.2" fill="none" stroke="#f8f8f2" stroke-width="1.3" stroke-linejoin="round"/>
<polyline points="670.7,578.5 685.7,582.6 701.6,583.9" fill="none" stroke="#f8f8f2" stroke-width="1.3" stroke-linejoin="round"/>
<polyline points="670.7,578.5 668.7,600.2 672.4,617.1" fill="none" stroke="#f8f8f2" stroke-width="1.3" stroke-linejoin="round"/>
<polyline points="931.5,190.3 929.2,175.9 930.2,158.5 927.0,145.8 930.3,130.2 925.6,112.4" fill="none" stroke="#f8f8f2" stroke-width="1.3" stroke-linejoin="round"/>
<polyline points="1251.7,78.0 1238.2,87.4 1223.0,99.8" fill="none" stroke="#f8f8f2" stroke-width="1.3" stroke-linejoin="round"/>
<polyline points="533.9,500.5 525.1,491.9 516.4,478.6 510.0,468.5 503.4,451.9 492.7,442.0" fill="none" stroke="#f8f8f2" stroke-width="1.3" stroke-linejoin="round"/>
<polyline points="533.9,500.5 534.0,513.7 541.3,531.5 548.5,549.0 546.3,563.7 554.0,576.2" fill="none" stroke="#f8f8f2" stroke-width="1.3" stroke-linejoin="round"/>
<polyline points="194.1,323.2 209.6,321.0 220.1,313.0" fill="none" stroke="#f8f8f2" stroke-width="1.3" stroke-linejoin="round"/>
<polyline points="50.1,441.7 64.3,450.9 77.5,463.7" fill="none" stroke="#f8f8f2" stroke-width="1.3" stroke-linejoin="round"/>
<polyline points="50.1,441.7 58.8,429.7 64.2,415.0 78.4,396.5 83.2,384.3" fill="none" stroke="#f8f8f2" stroke-width="1.3" stroke-linejoin="round"/>
<polyline points="976.4,378.8 980.5,365.8 982.6,347.6 986.2,335.6" fill="none" stroke="#f8f8f2" stroke-width="1.3" stroke-linejoin="round"/>
<polyline points="887.9,392.9 898.7,386.5 915.7,375.9 926.1,367.8" fill="none" stroke="#f8f8f2" stroke-width="1.3" stroke-linejoin="round"/>
<polyline points="887.9,392.9 900.4,396.8 921.8,393.6 936.1,400.4 954.3,398.8 967.1,400.1" fill="none" stroke="#f8f8f2" stroke-width="1.3" stroke-linejoin="round"/>
<polyline points="1072.6,624.4 1078.2,641.2 1084.1,656.4" fill="none" stroke="#f8f8f2" stroke-width="1.3" stroke-linejoin="round"/>
<polyline points="605.4,439.0 620.5,445.8 637.0,451.7 654.0,457.9" fill="none" stroke="#f8f8f2" stroke-width="1.3" stroke-linejoin="round"/>
<polyline points="77.5,463.7 90.1,446.5 108.3,436.6" fill="none" stroke="#f8f8f2" stroke-width="1.3" stroke-linejoin="round"/>
<polyline points="77.5,463.7 80.7,477.4 72.9,494.2 75.3,507.8" fill="none" stroke="#f8f8f2" stroke-width="1.3" stroke-linejoin="round"/>
<polyline points="826.4,656.4 821.3,638.4 812.4,624.5 804.5,606.6 796.9,595.1" fill="none" stroke="#f8f8f2" stroke-width="1.3" stroke-linejoin="round"/>
<polyline points="492.7,442.0 484.7,432.4 487.1,414.8 480.5,399.5 478.0,387.3 471.5,374.4" fill="none" stroke="#f8f8f2" stroke-width="1.3" stroke-linejoin="round"/>
<polyline points="165.2,163.7 182.7,164.8 193.1,154.8 207.7,153.4 225.0,153.3" fill="none" stroke="#f8f8f2" stroke-width="1.3" stroke-linejoin="round"/>
<polyline points="165.2,163.7 159.8,145.0 161.6,136.5 158.9,122.0 157.2,103.4" fill="none" stroke="#f8f8f2" stroke-width="1.3" stroke-linejoin="round"/>
<polyline points="499.2,576.0 482.0,576.7 458.2,584.5" fill="none" stroke="#f8f8f2" stroke-width="1.3" stroke-linejoin="round"/>
<polyline points="499.2,576.0 512.7,585.4 521.5,600.1 537.1,606.6" fill="none" stroke="#f8f8f2" stroke-width="1.3" stroke-linejoin="round"/>
<polyline points="499.2,576.0 501.7,593.1 509.3,612.9 512.6,625.8" fill="none" stroke="#f8f8f2" stroke-width="1.3" stroke-linejoin="round"/>
<polyline points="102.9,296.9 88.3,297.4 64.0,286.4 47.9,286.6" fill="none" stroke="#f8f8f2" stroke-width="1.3" stroke-linejoin="round"/>
<polyline points="701.6,583.9 690.0,593.8 685.4,609.3 672.4,617.1" fill="none" stroke="#f8f8f2" stroke-width="1.3" stroke-linejoin="round"/>
<polyline points="1046.2,571.1 1059.6,557.9 1069.8,553.6 1079.3,546.3 1088.8,532.8" fill="none" stroke="#f8f8f2" stroke-width="1.3" stroke-linejoin="round"/>
<polyline points="355.5,274.5 339.8,272.9 331.2,277.0" fill="none" stroke="#f8f8f2" stroke-width="1.3" stroke-linejoin="round"/>
<polyline points="355.5,274.5 346.5,262.0 333.4,242.4" fill="none" stroke="#f8f8f2" stroke-width="1.3" stroke-linejoin="round"/>
<polyline points="458.2,584.5 446.6,569.3 439.4,553.9 432.9,540.5 424.6,529.3" fill="none" stroke="#f8f8f2" stroke-width="1.3" stroke-linejoin="round"/>
<polyline points="225.0,153.3 236.0,141.4 251.2,135.1" fill="none" stroke="#f8f8f2" stroke-width="1.3" stroke-linejoin="round"/>
<polyline points="225.0,153.3 229.9,131.4 233.6,114.9 235.3,99.4" fill="none" stroke="#f8f8f2" stroke-width="1.3" stroke-linejoin="round"/>
<polyline points="225.0,153.3 235.4,155.9 251.0,155.1 270.3,153.9 281.5,149.9" fill="none" stroke="#f8f8f2" stroke-width="1.3" stroke-linejoin="round"/>
<polyline points="298.0,320.6 290.9,330.9 289.5,342.2" fill="none" stroke="#f8f8f2" stroke-width="1.3" stroke-linejoin="round"/>
<polyline points="752.3,173.7 745.0,158.3 741.0,145.4 732.5,128.7 722.3,113.9 717.6,103.4" fill="none" stroke="#f8f8f2" stroke-width="1.3" stroke-linejoin="round"/>
<polyline points="471.5,374.4 461.2,368.9 447.5,362.7" fill="none" stroke="#f8f8f2" stroke-width="1.3" stroke-linejoin="round"/>
<polyline points="471.5,374.4 454.9,369.4 442.0,357.8 427.3,348.7 416.3,342.6" fill="none" stroke="#f8f8f2" stroke-width="1.3" stroke-linejoin="round"/>
<polyline points="1217.1,456.4 1231.2,441.6 1239.8,429.4" fill="none" stroke="#f8f8f2" stroke-width="1.3" stroke-linejoin="round"/>
<polyline points="1217.1,456.4 1231.8,445.4 1251.9,434.5" fill="none" stroke="#f8f8f2" stroke-width="1.3" stroke-linejoin="round"/>
<polyline points="658.3,408.2 650.3,397.2 650.8,377.6 644.8,364.0 640.6,351.5" fill="none" stroke="#f8f8f2" stroke-width="1.3" stroke-linejoin="round"/>
<polyline points="1148.7,515.6 1153.3,513.9 1161.8,517.1" fill="none" stroke="#f8f8f2" stroke-width="1.3" stroke-linejoin="round"/>
<polyline points="1148.7,515.6 1151.0,528.3 1155.5,533.1" fill="none" stroke="#f8f8f2" stroke-width="1.3" stroke-linejoin="round"/>
<polyline points="1148.7,515.6 1136.7,524.9 1116.8,527.4" fill="none" stroke="#f8f8f2" stroke-width="1.3" stroke-linejoin="round"/>
<polyline points="1116.8,527.4 1099.6,528.4 1088.8,532.8" fill="none" stroke="#f8f8f2" stroke-width="1.3" stroke-linejoin="round"/>
<polyline points="501.1,263.7 490.6,271.9 480.3,279.4 466.6,291.8 451.8,302.8" fill="none" stroke="#f8f8f2" stroke-width="1.3" stroke-linejoin="round"/>
<polyline points="501.1,263.7 484.9,250.5 477.1,245.4 458.6,235.5 451.0,224.5 434.4,217.5" fill="none" stroke="#f8f8f2" stroke-width="1.3" stroke-linejoin="round"/>
<polyline points="501.1,263.7 500.9,246.7 497.0,237.6 500.5,218.8 494.7,203.8 498.1,192.9 496.5,178.8" fill="none" stroke="#f8f8f2" stroke-width="1.3" stroke-linejoin="round"/>
<polyline points="132.2,419.3 118.4,425.6 108.3,436.6" fill="none" stroke="#f8f8f2" stroke-width="1.3" stroke-linejoin="round"/>
<polyline points="132.2,419.3 134.2,404.6 136.9,387.3 135.5,370.4" fill="none" stroke="#f8f8f2" stroke-width="1.3" stroke-linejoin="round"/>
<polyline points="79.5,44.5 97.1,54.7 109.7,67.5" fill="none" stroke="#f8f8f2" stroke-width="1.3" stroke-linejoin="round"/>
<polyline points="79.5,44.5 96.5,42.8 107.9,31.4 125.5,30.5 136.4,26.1" fill="none" stroke="#f8f8f2" stroke-width="1.3" stroke-linejoin="round"/>
<polyline points="266.6,107.3 261.9,119.3 251.2,135.1" fill="none" stroke="#f8f8f2" stroke-width="1.3" stroke-linejoin="round"/>
<polyline points="266.6,107.3 269.1,124.2 275.5,133.0 281.5,149.9" fill="none" stroke="#f8f8f2" stroke-width="1.3" stroke-linejoin="round"/>
<polyline points="434.2,34.8 443.1,27.7 454.1,19.2" fill="none" stroke="#f8f8f2" stroke-width="1.3" stroke-linejoin="round"/>
<polyline points="0.3,100.0 12.4,108.9 33.2,117.4 44.4,123.4 60.0,130.9 76.1,136.1" fill="none" stroke="#f8f8f2" stroke-width="1.3" stroke-linejoin="round"/>
<polyline points="0.3,100.0 10.0,109.3 30.3,112.7 40.0,119.3 53.3,121.6 70.0,129.6 79.4,138.2" fill="none" stroke="#f8f8f2" stroke-width="1.3" stroke-linejoin="round"/>
<polyline points="0.3,100.0 3.7,110.9 10.1,130.8 14.2,139.1 25.5,154.0 25.9,171.4 35.7,184.7" fill="none" stroke="#f8f8f2" stroke-width="1.3" stroke-linejoin="round"/>
<polyline points="129.6,240.3 123.5,254.7 117.9,265.5 112.5,284.5 102.9,296.9" fill="none" stroke="#f8f8f2" stroke-width="1.3" stroke-linejoin="round"/>
<polyline points="129.6,240.3 131.9,224.6 141.4,214.8 145.6,199.0 152.5,186.3 160.0,179.3 165.2,163.7" fill="none" stroke="#f8f8f2" stroke-width="1.3" stroke-linejoin="round"/>
<polyline points="32.6,577.9 30.7,598.4 32.7,610.4 29.5,628.6" fill="none" stroke="#f8f8f2" stroke-width="1.3" stroke-linejoin="round"/>
<polyline points="32.6,577.9 23.6,564.2 18.3,556.9 14.3,544.0 5.0,528.3" fill="none" stroke="#f8f8f2" stroke-width="1.3" stroke-linejoin="round"/>
<polyline points="784.2,98.2 770.0,102.3 747.3,100.9 737.9,105.6 717.6,103.4" fill="none" stroke="#f8f8f2" stroke-width="1.3" stroke-linejoin="round"/>
<polyline points="784.2,98.2 775.8,112.7 772.5,127.3 765.3,140.0 758.1,158.6 752.3,173.7" fill="none" stroke="#f8f8f2" stroke-width="1.3" stroke-linejoin="round"/>
<polyline points="322.1,229.6 324.0,233.1 333.4,242.4" fill="none" stroke="#f8f8f2" stroke-width="1.3" stroke-linejoin="round"/>
<polyline points="1084.1,656.4 1071.7,655.7 1054.7,655.9 1036.3,651.0" fill="none" stroke="#f8f8f2" stroke-width="1.3" stroke-linejoin="round"/>
<polyline points="595.1,319.8 613.3,326.7 626.6,339.1 640.6,351.5" fill="none" stroke="#f8f8f2" stroke-width="1.3" stroke-linejoin="round"/>
<polyline points="595.1,319.8 597.5,333.6 597.5,354.5 599.1,364.7 599.2,382.3" fill="none" stroke="#f8f8f2" stroke-width="1.3" stroke-linejoin="round"/>
<polyline points="437.5,175.0 429.4,160.7 421.0,147.4" fill="none" stroke="#f8f8f2" stroke-width="1.3" stroke-linejoin="round"/>
<polyline points="1058.4,106.7 1060.3,121.4 1055.0,139.5" fill="none" stroke="#f8f8f2" stroke-width="1.3" stroke-linejoin="round"/>
<polyline points="674.6,96.9 670.5,80.6 668.1,63.7 667.4,50.2" fill="none" stroke="#f8f8f2" stroke-width="1.3" stroke-linejoin="round"/>
<polyline points="674.6,96.9 677.5,83.4 689.7,70.1 693.8,56.6 699.5,41.5" fill="none" stroke="#f8f8f2" stroke-width="1.3" stroke-linejoin="round"/>
<polyline points="693.6,17.9 678.7,16.8 668.5,12.4" fill="none" stroke="#f8f8f2" stroke-width="1.3" stroke-linejoin="round"/>
<polyline points="674.4,646.8 673.1,632.3 672.4,617.1" fill="none" stroke="#f8f8f2" stroke-width="1.3" stroke-linejoin="round"/>
<polyline points="674.4,646.8 674.4,629.5 671.0,610.6 669.4,595.6 670.7,578.5" fill="none" stroke="#f8f8f2" stroke-width="1.3" stroke-linejoin="round"/>
<polyline points="1102.5,460.2 1093.6,473.7 1082.2,491.3 1073.0,503.2 1065.3,514.6" fill="none" stroke="#f8f8f2" stroke-width="1.3" stroke-linejoin="round"/>
<polyline points="333.4,242.4 329.6,256.2 331.2,277.0" fill="none" stroke="#f8f8f2" stroke-width="1.3" stroke-linejoin="round"/>
<polyline points="213.3,510.3 223.6,515.5 228.0,521.6" fill="none" stroke="#f8f8f2" stroke-width="1.3" stroke-linejoin="round"/>
<polyline points="213.3,510.3 200.9,521.4 195.1,536.2 186.7,546.3" fill="none" stroke="#f8f8f2" stroke-width="1.3" stroke-linejoin="round"/>
<polyline points="680.1,515.0 691.6,514.5 709.3,518.4" fill="none" stroke="#f8f8f2" stroke-width="1.3" stroke-linejoin="round"/>
<polyline points="1036.3,651.0 1047.0,643.9 1062.1,640.8 1077.7,636.3 1090.3,627.7" fill="none" stroke="#f8f8f2" stroke-width="1.3" stroke-linejoin="round"/>
<polyline points="454.1,19.2 459.4,34.8 461.5,52.1 464.4,65.5 465.0,81.2" fill="none" stroke="#f8f8f2" stroke-width="1.3" stroke-linejoin="round"/>
<polyline points="331.0,457.8 328.5,445.4 324.8,426.7 319.7,411.7 314.1,402.3 307.2,387.6" fill="none" stroke="#f8f8f2" stroke-width="1.3" stroke-linejoin="round"/>
<polyline points="1221.5,295.6 1231.1,282.3 1240.8,261.6" fill="none" stroke="#f8f8f2" stroke-width="1.3" stroke-linejoin="round"/>
<polyline points="1221.5,295.6 1221.4,276.8 1222.4,262.2 1219.5,241.0" fill="none" stroke="#f8f8f2" stroke-width="1.3" stroke-linejoin="round"/>
<polyline points="1196.6,653.1 1180.5,648.0 1168.5,648.6 1151.0,641.8 1133.3,637.0 1117.8,635.6 1106.1,628.0 1090.3,627.7" fill="none" stroke="#f8f8f2" stroke-width="1.3" stroke-linejoin="round"/>
<polyline points="1219.5,241.0 1233.5,249.9 1240.8,261.6" fill="none" stroke="#f8f8f2" stroke-width="1.3" stroke-linejoin="round"/>
<polyline points="281.5,149.9 269.1,145.2 251.2,135.1" fill="none" stroke="#f8f8f2" stroke-width="1.3" stroke-linejoin="round"/>
<polyline points="281.5,149.9 297.1,158.6 304.8,175.3 317.3,183.0" fill="none" stroke="#f8f8f2" stroke-width="1.3" stroke-linejoin="round"/>
<polyline points="796.9,595.1 775.7,592.4 762.8,596.8 744.9,597.7" fill="none" stroke="#f8f8f2" stroke-width="1.3" stroke-linejoin="round"/>
<polyline points="1073.2,316.9 1088.5,305.6 1099.6,296.8 1113.3,289.1 1128.2,275.1" fill="none" stroke="#f8f8f2" stroke-width="1.3" stroke-linejoin="round"/>
<polyline points="833.9,528.6 827.9,542.1 815.9,554.2 810.9,569.0 804.9,584.8 796.9,595.1" fill="none" stroke="#f8f8f2" stroke-width="1.3" stroke-linejoin="round"/>
<polyline points="833.9,528.6 853.8,528.2 865.8,529.1 886.5,526.7 899.0,530.2 912.3,526.1 931.2,527.3" fill="none" stroke="#f8f8f2" stroke-width="1.3" stroke-linejoin="round"/>
<polyline points="1161.8,517.1 1162.5,527.7 1155.5,533.1" fill="none" stroke="#f8f8f2" stroke-width="1.3" stroke-linejoin="round"/>
<polyline points="957.9,316.0 972.2,322.7 986.2,335.6" fill="none" stroke="#f8f8f2" stroke-width="1.3" stroke-linejoin="round"/>
<polyline points="228.0,521.6 217.3,529.2 197.7,536.4 186.7,546.3" fill="none" stroke="#f8f8f2" stroke-width="1.3" stroke-linejoin="round"/>
<polyline points="1240.8,261.6 1234.7,275.8 1226.0,287.2 1223.4,304.7 1215.0,321.9 1210.0,332.0" fill="none" stroke="#f8f8f2" stroke-width="1.3" stroke-linejoin="round"/>
<polyline points="512.6,625.8 525.9,612.6 537.1,606.6" fill="none" stroke="#f8f8f2" stroke-width="1.3" stroke-linejoin="round"/>
<polyline points="512.6,625.8 523.8,620.8 534.9,612.6 544.5,602.2 560.4,596.4" fill="none" stroke="#f8f8f2" stroke-width="1.3" stroke-linejoin="round"/>
<polyline points="1251.9,434.5 1248.6,432.6 1239.8,429.4" fill="none" stroke="#f8f8f2" stroke-width="1.3" stroke-linejoin="round"/>
<polyline points="167.3,9.4 170.6,23.5 172.2,38.0 177.7,54.5 181.4,63.5 184.2,77.9" fill="none" stroke="#f8f8f2" stroke-width="1.3" stroke-linejoin="round"/>
<polyline points="554.0,576.2 542.5,588.7 537.1,606.6" fill="none" stroke="#f8f8f2" stroke-width="1.3" stroke-linejoin="round"/>
<polyline points="1055.0,139.5 1055.3,152.6 1048.2,169.3 1049.6,188.1" fill="none" stroke="#f8f8f2" stroke-width="1.3" stroke-linejoin="round"/>
<polyline points="1055.0,139.5 1060.7,159.7 1067.0,177.2 1071.6,192.3" fill="none" stroke="#f8f8f2" stroke-width="1.3" stroke-linejoin="round"/>
<polyline points="321.6,193.7 316.0,184.4 317.3,183.0" fill="none" stroke="#f8f8f2" stroke-width="1.3" stroke-linejoin="round"/>
<polyline points="451.8,302.8 436.7,319.3 428.8,328.2 416.3,342.6" fill="none" stroke="#f8f8f2" stroke-width="1.3" stroke-linejoin="round"/>
<polyline points="451.8,302.8 454.8,315.6 455.0,333.2 462.6,347.4 465.3,357.4" fill="none" stroke="#f8f8f2" stroke-width="1.3" stroke-linejoin="round"/>
<polyline points="451.8,302.8 450.2,318.8 447.6,329.1 452.0,350.5 447.5,362.7" fill="none" stroke="#f8f8f2" stroke-width="1.3" stroke-linejoin="round"/>
<polyline points="744.9,597.7 729.0,596.3 718.6,587.0 701.6,583.9" fill="none" stroke="#f8f8f2" stroke-width="1.3" stroke-linejoin="round"/>
<polyline points="668.5,12.4 679.7,25.8 689.1,35.4 699.5,41.5" fill="none" stroke="#f8f8f2" stroke-width="1.3" stroke-linejoin="round"/>
<polyline points="220.1,313.0 220.2,324.7 223.2,339.1 230.3,354.2 229.1,367.1 230.8,384.4" fill="none" stroke="#f8f8f2" stroke-width="1.3" stroke-linejoin="round"/>
<polyline points="220.1,313.0 234.2,317.9 247.1,321.2 258.7,333.1 274.5,334.3 289.5,342.2" fill="none" stroke="#f8f8f2" stroke-width="1.3" stroke-linejoin="round"/>
<polyline points="926.1,367.8 937.9,366.3 952.7,364.6 969.1,368.5" fill="none" stroke="#f8f8f2" stroke-width="1.3" stroke-linejoin="round"/>
<polyline points="926.1,367.8 944.1,370.2 956.8,376.8 976.4,378.8" fill="none" stroke="#f8f8f2" stroke-width="1.3" stroke-linejoin="round"/>
<polyline points="709.3,518.4 710.1,508.5 717.3,502.4" fill="none" stroke="#f8f8f2" stroke-width="1.3" stroke-linejoin="round"/>
<polyline points="1165.2,293.0 1181.7,290.9 1192.2,296.1 1206.4,298.6 1221.5,295.6" fill="none" stroke="#f8f8f2" stroke-width="1.3" stroke-linejoin="round"/>
<polyline points="782.2,334.2 766.0,326.9 754.5,310.2 740.5,301.6" fill="none" stroke="#f8f8f2" stroke-width="1.3" stroke-linejoin="round"/>
<polyline points="222.4,29.2 216.8,44.8 213.8,59.3 214.6,77.4" fill="none" stroke="#f8f6ea" stroke-width="2.4" stroke-linejoin="round"/>
<polyline points="222.4,29.2 216.8,44.8 213.8,59.3 214.6,77.4" fill="none" stroke="#f1cd6e" stroke-width="1" stroke-linejoin="round"/>
<polyline points="235.3,99.4 221.5,92.3 214.6,77.4" fill="none" stroke="#f8f6ea" stroke-width="2.4" stroke-linejoin="round"/>
<polyline points="235.3,99.4 221.5,92.3 214.6,77.4" fill="none" stroke="#f1cd6e" stroke-width="1" stroke-linejoin="round"/>
<polyline points="157.2,103.4 167.4,87.1 184.2,77.9" fill="none" stroke="#f8f6ea" stroke-width="2.4" stroke-linejoin="round"/>
<polyline points="157.2,103.4 167.4,87.1 184.2,77.9" fill="none" stroke="#f1cd6e" stroke-width="1" stroke-linejoin="round"/>
<polyline points="247.2,208.4 255.8,191.2 263.1,175.3 271.0,160.7 281.5,149.9" fill="none" stroke="#f8f6ea" stroke-width="2.4" stroke-linejoin="round"/>
<polyline points="247.2,208.4 255.8,191.2 263.1,175.3 271.0,160.7 281.5,149.9" fill="none" stroke="#f1cd6e" stroke-width="1" stroke-linejoin="round"/>
<polyline points="441.3,28.3 449.3,24.8 454.1,19.2" fill="none" stroke="#f8f6ea" stroke-width="2.4" stroke-linejoin="round"/>
<polyline points="441.3,28.3 449.3,24.8 454.1,19.2" fill="none" stroke="#f1cd6e" stroke-width="1" stroke-linejoin="round"/>
<polyline points="667.4,50.2 666.1,35.0 668.5,12.4" fill="none" stroke="#f8f6ea" stroke-width="2.4" stroke-linejoin="round"/>
<polyline points="667.4,50.2 666.1,35.0 668.5,12.4" fill="none" stroke="#f1cd6e" stroke-width="1" stroke-linejoin="round"/>
<polyline points="717.6,103.4 722.1,119.2 720.6,141.7 719.4,159.2" fill="none" stroke="#f8f6ea" stroke-width="2.4" stroke-linejoin="round"/>
<polyline points="717.6,103.4 722.1,119.2 720.6,141.7 719.4,159.2" fill="none" stroke="#f1cd6e" stroke-width="1" stroke-linejoin="round"/>
<polyline points="443.2,146.5 441.4,162.2 437.5,175.0" fill="none" stroke="#f8f6ea" stroke-width="2.4" stroke-linejoin="round"/>
<polyline points="443.2,146.5 441.4,162.2 437.5,175.0" fill="none" stroke="#f1cd6e" stroke-width="1" stroke-linejoin="round"/>
<polyline points="496.5,178.8 485.2,183.2 468.8,192.3 461.2,200.5 447.4,205.9 434.4,217.5" fill="none" stroke="#f8f6ea" stroke-width="2.4" stroke-linejoin="round"/>
<polyline points="496.5,178.8 485.2,183.2 468.8,192.3 461.2,200.5 447.4,205.9 434.4,217.5" fill="none" stroke="#f1cd6e" stroke-width="1" stroke-linejoin="round"/>
<polyline points="434.4,217.5 428.9,203.7 432.7,186.5 428.9,175.5 426.8,163.1 421.0,147.4" fill="none" stroke="#f8f6ea" stroke-width="2.4" stroke-linejoin="round"/>
<polyline points="434.4,217.5 428.9,203.7 432.7,186.5 428.9,175.5 426.8,163.1 421.0,147.4" fill="none" stroke="#f1cd6e" stroke-width="1" stroke-linejoin="round"/>
<polyline points="915.2,28.3 911.7,46.4 909.6,58.4 903.3,69.2 898.9,87.3 892.5,102.5" fill="none" stroke="#f8f6ea" stroke-width="2.4" stroke-linejoin="round"/>
<polyline points="915.2,28.3 911.7,46.4 909.6,58.4 903.3,69.2 898.9,87.3 892.5,102.5" fill="none" stroke="#f1cd6e" stroke-width="1" stroke-linejoin="round"/>
<polyline points="1207.4,61.2 1218.0,47.8 1232.3,37.7 1246.7,30.8" fill="none" stroke="#f8f6ea" stroke-width="2.4" stroke-linejoin="round"/>
<polyline points="1207.4,61.2 1218.0,47.8 1232.3,37.7 1246.7,30.8" fill="none" stroke="#f1cd6e" stroke-width="1" stroke-linejoin="round"/>
<polyline points="1235.2,113.3 1236.6,131.4 1245.4,146.2" fill="none" stroke="#f8f6ea" stroke-width="2.4" stroke-linejoin="round"/>
<polyline points="1235.2,113.3 1236.6,131.4 1245.4,146.2" fill="none" stroke="#f1cd6e" stroke-width="1" stroke-linejoin="round"/>
<polyline points="1071.6,192.3 1056.9,192.5 1049.6,188.1" fill="none" stroke="#f8f6ea" stroke-width="2.4" stroke-linejoin="round"/>
<polyline points="1071.6,192.3 1056.9,192.5 1049.6,188.1" fill="none" stroke="#f1cd6e" stroke-width="1" stroke-linejoin="round"/>
<polyline points="3.5,237.2 2.8,253.2 5.2,276.9" fill="none" stroke="#f8f6ea" stroke-width="2.4" stroke-linejoin="round"/>
<polyline points="3.5,237.2 2.8,253.2 5.2,276.9" fill="none" stroke="#f1cd6e" stroke-width="1" stroke-linejoin="round"/>
<polyline points="59.6,315.3 65.2,329.0 74.1,335.4" fill="none" stroke="#f8f6ea" stroke-width="2.4" stroke-linejoin="round"/>
<polyline points="59.6,315.3 65.2,329.0 74.1,335.4" fill="none" stroke="#f1cd6e" stroke-width="1" stroke-linejoin="round"/>
<polyline points="388.4,358.2 398.0,375.7 401.2,387.1" fill="none" stroke="#f8f6ea" stroke-width="2.4" stroke-linejoin="round"/>
<polyline points="388.4,358.2 398.0,375.7 401.2,387.1" fill="none" stroke="#f1cd6e" stroke-width="1" stroke-linejoin="round"/>
<polyline points="83.2,384.3 79.1,371.4 74.7,350.6 74.1,335.4" fill="none" stroke="#f8f6ea" stroke-width="2.4" stroke-linejoin="round"/>
<polyline points="83.2,384.3 79.1,371.4 74.7,350.6 74.1,335.4" fill="none" stroke="#f1cd6e" stroke-width="1" stroke-linejoin="round"/>
<polyline points="274.3,387.3 294.3,383.7 307.2,387.6" fill="none" stroke="#f8f6ea" stroke-width="2.4" stroke-linejoin="round"/>
<polyline points="274.3,387.3 294.3,383.7 307.2,387.6" fill="none" stroke="#f1cd6e" stroke-width="1" stroke-linejoin="round"/>
<polyline points="754.3,252.5 747.9,254.0 737.0,262.2" fill="none" stroke="#f8f6ea" stroke-width="2.4" stroke-linejoin="round"/>
<polyline points="754.3,252.5 747.9,254.0 737.0,262.2" fill="none" stroke="#f1cd6e" stroke-width="1" stroke-linejoin="round"/>
<polyline points="465.3,357.4 469.7,362.8 471.5,374.4" fill="none" stroke="#f8f6ea" stroke-width="2.4" stroke-linejoin="round"/>
<polyline points="465.3,357.4 469.7,362.8 471.5,374.4" fill="none" stroke="#f1cd6e" stroke-width="1" stroke-linejoin="round"/>
<polyline points="659.3,340.4 653.9,342.8 640.6,351.5" fill="none" stroke="#f8f6ea" stroke-width="2.4" stroke-linejoin="round"/>
<polyline points="659.3,340.4 653.9,342.8 640.6,351.5" fill="none" stroke="#f1cd6e" stroke-width="1" stroke-linejoin="round"/>
<polyline points="732.3,376.7 713.0,374.8 697.4,378.4 684.1,375.7 666.4,378.5" fill="none" stroke="#f8f6ea" stroke-width="2.4" stroke-linejoin="round"/>
<polyline points="732.3,376.7 713.0,374.8 697.4,378.4 684.1,375.7 666.4,378.5" fill="none" stroke="#f1cd6e" stroke-width="1" stroke-linejoin="round"/>
<polyline points="841.8,386.6 828.3,379.7 816.5,366.2 804.9,354.5 797.0,348.6 782.2,334.2" fill="none" stroke="#f8f6ea" stroke-width="2.4" stroke-linejoin="round"/>
<polyline points="841.8,386.6 828.3,379.7 816.5,366.2 804.9,354.5 797.0,348.6 782.2,334.2" fill="none" stroke="#f1cd6e" stroke-width="1" stroke-linejoin="round"/>
<polyline points="988.6,259.2 977.8,273.3 975.7,291.3 963.2,298.8 957.9,316.0" fill="none" stroke="#f8f6ea" stroke-width="2.4" stroke-linejoin="round"/>
<polyline points="988.6,259.2 977.8,273.3 975.7,291.3 963.2,298.8 957.9,316.0" fill="none" stroke="#f1cd6e" stroke-width="1" stroke-linejoin="round"/>
<polyline points="1128.2,275.1 1122.6,256.1 1124.9,244.4 1116.9,224.8 1118.0,207.4" fill="none" stroke="#f8f6ea" stroke-width="2.4" stroke-linejoin="round"/>
<polyline points="1128.2,275.1 1122.6,256.1 1124.9,244.4 1116.9,224.8 1118.0,207.4" fill="none" stroke="#f1cd6e" stroke-width="1" stroke-linejoin="round"/>
<polyline points="1020.2,324.2 1003.0,326.8 986.2,335.6" fill="none" stroke="#f8f6ea" stroke-width="2.4" stroke-linejoin="round"/>
<polyline points="1020.2,324.2 1003.0,326.8 986.2,335.6" fill="none" stroke="#f1cd6e" stroke-width="1" stroke-linejoin="round"/>
<polyline points="1265.1,371.3 1261.6,389.8 1254.3,402.9 1243.7,418.8 1239.8,429.4" fill="none" stroke="#f8f6ea" stroke-width="2.4" stroke-linejoin="round"/>
<polyline points="1265.1,371.3 1261.6,389.8 1254.3,402.9 1243.7,418.8 1239.8,429.4" fill="none" stroke="#f1cd6e" stroke-width="1" stroke-linejoin="round"/>
<polyline points="1106.2,413.5 1093.3,429.6 1087.2,441.8 1073.0,453.6 1062.3,464.1 1056.3,475.3 1045.0,489.1" fill="none" stroke="#f8f6ea" stroke-width="2.4" stroke-linejoin="round"/>
<polyline points="1106.2,413.5 1093.3,429.6 1087.2,441.8 1073.0,453.6 1062.3,464.1 1056.3,475.3 1045.0,489.1" fill="none" stroke="#f1cd6e" stroke-width="1" stroke-linejoin="round"/>
<polyline points="269.3,509.2 246.9,506.7 232.9,509.4 213.3,510.3" fill="none" stroke="#f8f6ea" stroke-width="2.4" stroke-linejoin="round"/>
<polyline points="269.3,509.2 246.9,506.7 232.9,509.4 213.3,510.3" fill="none" stroke="#f1cd6e" stroke-width="1" stroke-linejoin="round"/>
<polyline points="22.8,528.2 25.3,542.9 25.4,562.5 32.6,577.9" fill="none" stroke="#f8f6ea" stroke-width="2.4" stroke-linejoin="round"/>
<polyline points="22.8,528.2 25.3,542.9 25.4,562.5 32.6,577.9" fill="none" stroke="#f1cd6e" stroke-width="1" stroke-linejoin="round"/>
<polyline points="361.3,597.7 371.5,607.3 391.2,612.4 398.9,619.9 418.6,623.3 432.4,629.7 444.3,636.5" fill="none" stroke="#f8f6ea" stroke-width="2.4" stroke-linejoin="round"/>
<polyline points="361.3,597.7 371.5,607.3 391.2,612.4 398.9,619.9 418.6,623.3 432.4,629.7 444.3,636.5" fill="none" stroke="#f1cd6e" stroke-width="1" stroke-linejoin="round"/>
<polyline points="622.5,458.3 611.7,449.6 605.4,439.0" fill="none" stroke="#f8f6ea" stroke-width="2.4" stroke-linejoin="round"/>
<polyline points="622.5,458.3 611.7,449.6 605.4,439.0" fill="none" stroke="#f1cd6e" stroke-width="1" stroke-linejoin="round"/>
<polyline points="657.2,554.6 660.8,562.8 670.7,578.5" fill="none" stroke="#f8f6ea" stroke-width="2.4" stroke-linejoin="round"/>
<polyline points="657.2,554.6 660.8,562.8 670.7,578.5" fill="none" stroke="#f1cd6e" stroke-width="1" stroke-linejoin="round"/>
<polyline points="560.4,596.4 560.9,586.3 554.0,576.2" fill="none" stroke="#f8f6ea" stroke-width="2.4" stroke-linejoin="round"/>
<polyline points="560.4,596.4 560.9,586.3 554.0,576.2" fill="none" stroke="#f1cd6e" stroke-width="1" stroke-linejoin="round"/>
<polyline points="737.1,646.6 738.5,633.0 740.4,617.6 744.9,597.7" fill="none" stroke="#f8f6ea" stroke-width="2.4" stroke-linejoin="round"/>
<polyline points="737.1,646.6 738.5,633.0 740.4,617.6 744.9,597.7" fill="none" stroke="#f1cd6e" stroke-width="1" stroke-linejoin="round"/>
<polyline points="918.5,476.7 931.4,474.5 944.0,477.7 962.2,476.1 972.4,472.8 991.4,473.1 1003.3,471.6" fill="none" stroke="#f8f6ea" stroke-width="2.4" stroke-linejoin="round"/>
<polyline points="918.5,476.7 931.4,474.5 944.0,477.7 962.2,476.1 972.4,472.8 991.4,473.1 1003.3,471.6" fill="none" stroke="#f1cd6e" stroke-width="1" stroke-linejoin="round"/>
<polyline points="1202.4,500.2 1188.4,507.7 1168.5,509.9 1148.7,515.6" fill="none" stroke="#f8f6ea" stroke-width="2.4" stroke-linejoin="round"/>
<polyline points="1202.4,500.2 1188.4,507.7 1168.5,509.9 1148.7,515.6" fill="none" stroke="#f1cd6e" stroke-width="1" stroke-linejoin="round"/>
<polyline points="1004.5,558.4 1020.6,564.2 1035.1,568.3 1046.2,571.1" fill="none" stroke="#f8f6ea" stroke-width="2.4" stroke-linejoin="round"/>
<polyline points="1004.5,558.4 1020.6,564.2 1035.1,568.3 1046.2,571.1" fill="none" stroke="#f1cd6e" stroke-width="1" stroke-linejoin="round"/>
<polyline points="1080.2,569.5 1060.9,571.8 1046.2,571.1" fill="none" stroke="#f8f6ea" stroke-width="2.4" stroke-linejoin="round"/>
<polyline points="1080.2,569.5 1060.9,571.8 1046.2,571.1" fill="none" stroke="#f1cd6e" stroke-width="1" stroke-linejoin="round"/>
<polyline points="958.2,599.9 945.5,605.6 927.6,609.7 910.5,617.6 897.5,618.6" fill="none" stroke="#f8f6ea" stroke-width="2.4" stroke-linejoin="round"/>
<polyline points="958.2,599.9 945.5,605.6 927.6,609.7 910.5,617.6 897.5,618.6" fill="none" stroke="#f1cd6e" stroke-width="1" stroke-linejoin="round"/>
<polyline points="723.0,495.0 717.4,505.6 709.3,518.4" fill="none" stroke="#f8f6ea" stroke-width="2.4" stroke-linejoin="round"/>
<polyline points="723.0,495.0 717.4,505.6 709.3,518.4" fill="none" stroke="#f1cd6e" stroke-width="1" stroke-linejoin="round"/>
<polyline points="831.2,47.9 846.7,61.1 853.1,72.9 868.9,82.9 881.6,94.7 892.5,102.5" fill="none" stroke="#f8f6ea" stroke-width="2.4" stroke-linejoin="round"/>
<polyline points="831.2,47.9 846.7,61.1 853.1,72.9 868.9,82.9 881.6,94.7 892.5,102.5" fill="none" stroke="#f1cd6e" stroke-width="1" stroke-linejoin="round"/>
<polyline points="89.2,60.0 85.7,55.0 79.5,44.5" fill="none" stroke="#f8f6ea" stroke-width="2.4" stroke-linejoin="round"/>
<polyline points="89.2,60.0 85.7,55.0 79.5,44.5" fill="none" stroke="#f1cd6e" stroke-width="1" stroke-linejoin="round"/>
<polyline points="158.1,147.6 162.7,127.9 162.6,116.8 162.2,99.9" fill="none" stroke="#f8f6ea" stroke-width="2.4" stroke-linejoin="round"/>
<polyline points="158.1,147.6 162.7,127.9 162.6,116.8 162.2,99.9" fill="none" stroke="#f1cd6e" stroke-width="1" stroke-linejoin="round"/>
<polyline points="1246.7,30.8 1242.0,48.4 1238.5,60.7 1231.1,70.7 1226.1,86.7 1223.0,99.8" fill="none" stroke="#f8f6ea" stroke-width="2.4" stroke-linejoin="round"/>
<polyline points="1246.7,30.8 1242.0,48.4 1238.5,60.7 1231.1,70.7 1226.1,86.7 1223.0,99.8" fill="none" stroke="#f1cd6e" stroke-width="1" stroke-linejoin="round"/>
<polyline points="230.8,384.4 224.7,374.5 219.4,360.8 209.7,348.7 203.0,336.2 194.1,323.2" fill="none" stroke="#f8f6ea" stroke-width="2.4" stroke-linejoin="round"/>
<polyline points="230.8,384.4 224.7,374.5 219.4,360.8 209.7,348.7 203.0,336.2 194.1,323.2" fill="none" stroke="#f1cd6e" stroke-width="1" stroke-linejoin="round"/>
<polyline points="868.9,282.6 878.7,285.3 897.1,293.2 913.9,293.1 923.1,293.7 937.5,300.4" fill="none" stroke="#f8f6ea" stroke-width="2.4" stroke-linejoin="round"/>
<polyline points="868.9,282.6 878.7,285.3 897.1,293.2 913.9,293.1 923.1,293.7 937.5,300.4" fill="none" stroke="#f1cd6e" stroke-width="1" stroke-linejoin="round"/>
<polyline points="1014.4,462.0 1026.3,468.6 1030.9,484.3 1047.5,490.2 1053.6,505.9 1065.3,514.6" fill="none" stroke="#f8f6ea" stroke-width="2.4" stroke-linejoin="round"/>
<polyline points="1014.4,462.0 1026.3,468.6 1030.9,484.3 1047.5,490.2 1053.6,505.9 1065.3,514.6" fill="none" stroke="#f1cd6e" stroke-width="1" stroke-linejoin="round"/>
<polyline points="931.5,190.3 941.6,200.1 947.0,217.1 961.7,227.4 968.2,237.1 982.9,250.4 988.6,259.2" fill="none" stroke="#f8f6ea" stroke-width="2.4" stroke-linejoin="round"/>
<polyline points="931.5,190.3 941.6,200.1 947.0,217.1 961.7,227.4 968.2,237.1 982.9,250.4 988.6,259.2" fill="none" stroke="#f1cd6e" stroke-width="1" stroke-linejoin="round"/>
<polyline points="50.1,441.7 67.4,442.9 80.6,442.5 92.5,434.6 108.3,436.6" fill="none" stroke="#f8f6ea" stroke-width="2.4" stroke-linejoin="round"/>
<polyline points="50.1,441.7 67.4,442.9 80.6,442.5 92.5,434.6 108.3,436.6" fill="none" stroke="#f1cd6e" stroke-width="1" stroke-linejoin="round"/>
<polyline points="1072.6,624.4 1058.0,630.8 1045.9,643.8 1036.3,651.0" fill="none" stroke="#f8f6ea" stroke-width="2.4" stroke-linejoin="round"/>
<polyline points="1072.6,624.4 1058.0,630.8 1045.9,643.8 1036.3,651.0" fill="none" stroke="#f1cd6e" stroke-width="1" stroke-linejoin="round"/>
<polyline points="28.8,305.2 20.6,293.2 5.2,276.9" fill="none" stroke="#f8f6ea" stroke-width="2.4" stroke-linejoin="round"/>
<polyline points="28.8,305.2 20.6,293.2 5.2,276.9" fill="none" stroke="#f1cd6e" stroke-width="1" stroke-linejoin="round"/>
<polyline points="102.9,296.9 89.8,302.2 73.6,306.4 59.6,315.3" fill="none" stroke="#f8f6ea" stroke-width="2.4" stroke-linejoin="round"/>
<polyline points="102.9,296.9 89.8,302.2 73.6,306.4 59.6,315.3" fill="none" stroke="#f1cd6e" stroke-width="1" stroke-linejoin="round"/>
<polyline points="355.5,274.5 348.5,287.9 339.3,306.5 330.1,319.4" fill="none" stroke="#f8f6ea" stroke-width="2.4" stroke-linejoin="round"/>
<polyline points="355.5,274.5 348.5,287.9 339.3,306.5 330.1,319.4" fill="none" stroke="#f1cd6e" stroke-width="1" stroke-linejoin="round"/>
<polyline points="298.0,320.6 293.9,307.2 299.0,288.0 295.4,270.2" fill="none" stroke="#f8f6ea" stroke-width="2.4" stroke-linejoin="round"/>
<polyline points="298.0,320.6 293.9,307.2 299.0,288.0 295.4,270.2" fill="none" stroke="#f1cd6e" stroke-width="1" stroke-linejoin="round"/>
<polyline points="658.3,408.2 655.4,428.0 652.4,445.2 654.0,457.9" fill="none" stroke="#f8f6ea" stroke-width="2.4" stroke-linejoin="round"/>
<polyline points="658.3,408.2 655.4,428.0 652.4,445.2 654.0,457.9" fill="none" stroke="#f1cd6e" stroke-width="1" stroke-linejoin="round"/>
<polyline points="1116.8,527.4 1139.3,526.7 1155.5,533.1" fill="none" stroke="#f8f6ea" stroke-width="2.4" stroke-linejoin="round"/>
<polyline points="1116.8,527.4 1139.3,526.7 1155.5,533.1" fill="none" stroke="#f1cd6e" stroke-width="1" stroke-linejoin="round"/>
<polyline points="132.2,419.3 117.6,407.0 109.6,401.0 97.2,389.5 83.2,384.3" fill="none" stroke="#f8f6ea" stroke-width="2.4" stroke-linejoin="round"/>
<polyline points="132.2,419.3 117.6,407.0 109.6,401.0 97.2,389.5 83.2,384.3" fill="none" stroke="#f1cd6e" stroke-width="1" stroke-linejoin="round"/>
<polyline points="434.2,34.8 440.5,50.4 454.3,65.8 465.0,81.2" fill="none" stroke="#f8f6ea" stroke-width="2.4" stroke-linejoin="round"/>
<polyline points="434.2,34.8 440.5,50.4 454.3,65.8 465.0,81.2" fill="none" stroke="#f1cd6e" stroke-width="1" stroke-linejoin="round"/>
<polyline points="129.6,240.3 113.1,248.6 104.3,253.1 91.3,267.0 74.2,270.6 64.2,279.1 47.9,286.6" fill="none" stroke="#f8f6ea" stroke-width="2.4" stroke-linejoin="round"/>
<polyline points="129.6,240.3 113.1,248.6 104.3,253.1 91.3,267.0 74.2,270.6 64.2,279.1 47.9,286.6" fill="none" stroke="#f1cd6e" stroke-width="1" stroke-linejoin="round"/>
<polyline points="322.1,229.6 325.6,213.9 321.6,193.7" fill="none" stroke="#f8f6ea" stroke-width="2.4" stroke-linejoin="round"/>
<polyline points="322.1,229.6 325.6,213.9 321.6,193.7" fill="none" stroke="#f1cd6e" stroke-width="1" stroke-linejoin="round"/>
<polyline points="29.5,628.6 27.0,615.4 24.5,600.7 30.3,585.7 23.8,571.0 25.0,554.1 20.7,539.6 22.8,528.2" fill="none" stroke="#f8f6ea" stroke-width="2.4" stroke-linejoin="round"/>
<polyline points="29.5,628.6 27.0,615.4 24.5,600.7 30.3,585.7 23.8,571.0 25.0,554.1 20.7,539.6 22.8,528.2" fill="none" stroke="#f1cd6e" stroke-width="1" stroke-linejoin="round"/>
<polyline points="1102.5,460.2 1087.2,468.1 1069.8,473.4 1062.3,479.7 1045.0,489.1" fill="none" stroke="#f8f6ea" stroke-width="2.4" stroke-linejoin="round"/>
<polyline points="1102.5,460.2 1087.2,468.1 1069.8,473.4 1062.3,479.7 1045.0,489.1" fill="none" stroke="#f1cd6e" stroke-width="1" stroke-linejoin="round"/>
<polyline points="680.1,515.0 702.4,510.6 717.3,502.4" fill="none" stroke="#f8f6ea" stroke-width="2.4" stroke-linejoin="round"/>
<polyline points="680.1,515.0 702.4,510.6 717.3,502.4" fill="none" stroke="#f1cd6e" stroke-width="1" stroke-linejoin="round"/>
<polyline points="1196.6,653.1 1186.2,641.2 1173.7,631.0 1164.7,618.7 1150.8,609.9 1140.4,598.6" fill="none" stroke="#f8f6ea" stroke-width="2.4" stroke-linejoin="round"/>
<polyline points="1196.6,653.1 1186.2,641.2 1173.7,631.0 1164.7,618.7 1150.8,609.9 1140.4,598.6" fill="none" stroke="#f1cd6e" stroke-width="1" stroke-linejoin="round"/>
<polyline points="796.9,595.1 783.6,595.4 763.9,595.3 747.1,589.6 730.3,587.6" fill="none" stroke="#f8f6ea" stroke-width="2.4" stroke-linejoin="round"/>
<polyline points="796.9,595.1 783.6,595.4 763.9,595.3 747.1,589.6 730.3,587.6" fill="none" stroke="#f1cd6e" stroke-width="1" stroke-linejoin="round"/>
<polyline points="957.9,316.0 964.8,335.0 967.9,354.9 969.1,368.5" fill="none" stroke="#f8f6ea" stroke-width="2.4" stroke-linejoin="round"/>
<polyline points="957.9,316.0 964.8,335.0 967.9,354.9 969.1,368.5" fill="none" stroke="#f1cd6e" stroke-width="1" stroke-linejoin="round"/>
<polyline points="447.5,362.7 433.2,350.2 416.3,342.6" fill="none" stroke="#f8f6ea" stroke-width="2.4" stroke-linejoin="round"/>
<polyline points="447.5,362.7 433.2,350.2 416.3,342.6" fill="none" stroke="#f1cd6e" stroke-width="1" stroke-linejoin="round"/>
<polyline points="167.4,601.5 174.4,586.3 178.7,572.8 179.2,558.3 186.7,546.3" fill="none" stroke="#f8f6ea" stroke-width="2.4" stroke-linejoin="round"/>
<polyline points="167.4,601.5 174.4,586.3 178.7,572.8 179.2,558.3 186.7,546.3" fill="none" stroke="#f1cd6e" stroke-width="1" stroke-linejoin="round"/>
<polyline points="5.0,528.3 17.0,523.3 34.9,517.8 45.7,519.0 61.1,514.2 75.3,507.8" fill="none" stroke="#f8f6ea" stroke-width="2.4" stroke-linejoin="round"/>
<polyline points="5.0,528.3 17.0,523.3 34.9,517.8 45.7,519.0 61.1,514.2 75.3,507.8" fill="none" stroke="#f1cd6e" stroke-width="1" stroke-linejoin="round"/>
<polyline points="317.3,183.0 321.6,195.6 320.1,216.8 322.1,229.6" fill="none" stroke="#f8f6ea" stroke-width="2.4" stroke-linejoin="round"/>
<polyline points="317.3,183.0 321.6,195.6 320.1,216.8 322.1,229.6" fill="none" stroke="#f1cd6e" stroke-width="1" stroke-linejoin="round"/>
<polyline points="782.0,0.0 797.0,27.0 832.0,40.0 872.0,30.0 912.0,47.0" fill="none" stroke="#b4b8cc" stroke-width="0.9" stroke-dasharray="5 1.5" stroke-linejoin="round"/>
<polyline points="862.0,220.0 887.0,235.0 912.7,245.3 922.8,283.2 928.0,321.0 935.5,359.0 953.0,397.0 973.0,422.0 991.0,440.0 996.0,465.0 989.0,490.6 1001.0,516.0 989.0,523.5 961.0,546.0 963.0,566.5 948.0,581.7 920.0,594.0 902.6,612.0 897.5,661.0" fill="none" stroke="#b4b8cc" stroke-width="0.9" stroke-dasharray="5 1.5" stroke-linejoin="round"/>
<polyline points="598.7,223.3 617.0,220.0 620.3,235.0 632.0,251.7 648.7,263.3 648.7,278.3 645.3,291.7" fill="none" stroke="#b4b8cc" stroke-width="0.9" stroke-dasharray="5 1.5" stroke-linejoin="round"/>
<polyline points="705.3,185.0 705.3,206.7 700.3,226.7 712.0,233.3 740.3,231.7 747.0,215.0 773.7,206.7 767.0,185.0 782.0,165.0 807.0,160.0 822.0,185.0 847.0,195.0 862.0,220.0" fill="none" stroke="#b4b8cc" stroke-width="0.9" stroke-dasharray="5 1.5" stroke-linejoin="round"/>
<polyline points="222.0,235.0 262.0,230.0 302.0,235.0 322.0,255.0 342.0,275.0 367.0,285.0 382.0,305.0 392.0,345.0 382.0,375.0" fill="none" stroke="#b4b8cc" stroke-width="0.9" stroke-dasharray="5 1.5" stroke-linejoin="round"/>
<polyline points="388.0,0.0 392.0,17.0 398.0,33.0 411.0,50.0 422.0,70.0 437.0,90.0 451.0,105.0 467.0,103.0 492.0,88.0 517.0,82.0 542.0,81.0 547.0,95.0 542.0,101.0 547.0,121.0 557.0,157.0 573.0,175.0 553.0,193.0 550.0,215.0 560.0,233.0 575.0,265.0 578.0,291.0 568.0,309.0 555.0,352.0 550.0,377.0 540.0,413.0 522.0,430.0 512.0,440.0 502.0,455.0 492.0,475.0 482.0,493.0 467.0,503.0 456.0,521.0 441.0,539.0 428.0,565.0 422.0,582.0 418.0,605.0 411.0,643.0 404.0,661.0" fill="none" stroke="#73c3ee" stroke-width="2.4" stroke-linejoin="round"/>
<polyline points="547.0,95.0 562.0,91.0 582.0,87.0 604.0,90.0 627.0,83.0 662.0,70.0 692.0,73.0 705.0,90.0 718.0,104.0 725.0,132.0 732.0,150.0 753.0,172.0 765.0,166.0 787.0,170.0 811.0,162.0 817.0,135.0 814.0,105.0 824.0,75.0 838.0,93.0 849.0,102.0 856.0,120.0 867.0,138.0 883.0,170.0 894.0,175.0 912.0,190.0 927.0,188.0 932.0,165.0 937.0,115.0 946.0,84.0 972.0,88.0 999.0,86.0 1013.0,91.0 1042.0,105.0 1060.0,118.0 1082.0,127.0 1102.0,155.0 1117.0,175.0" fill="none" stroke="#73c3ee" stroke-width="1.4" stroke-linejoin="round"/>
<polyline points="302.0,55.0 286.0,36.0 299.0,61.0 284.0,76.0 294.0,89.0 279.0,107.0 249.0,127.0 241.0,137.0 233.0,142.0 223.0,152.0 210.0,160.0 193.0,177.0 179.0,183.0 162.0,188.0 154.0,195.0 144.0,205.0 132.0,225.0 124.0,269.0 114.0,276.0 96.0,293.0 86.0,304.0 84.0,321.0 86.0,362.0 76.0,390.0 66.0,403.0 56.0,440.0 61.0,465.0 51.0,503.0 36.0,521.0 25.0,536.0 46.0,534.0 63.0,547.0" fill="none" stroke="#73c3ee" stroke-width="1.4" stroke-linejoin="round"/>
<polyline points="184.0,290.0 197.0,305.0 212.0,320.0 226.0,337.0 247.0,350.0 264.0,354.0 274.0,375.0 282.0,405.0" fill="none" stroke="#73c3ee" stroke-width="1.2" stroke-linejoin="round"/>
<polyline points="572.0,262.0 592.0,265.0 612.0,285.0 625.0,288.0 652.0,285.0 672.0,278.0 686.0,280.0 702.0,300.0 718.0,332.0 722.0,365.0 719.0,399.0 722.0,425.0 736.0,446.0 742.0,465.0" fill="none" stroke="#73c3ee" stroke-width="1.4" stroke-linejoin="round"/>
<polyline points="983.0,570.0 1004.0,558.0 1022.0,550.0 1043.0,537.0 1065.0,515.0 1092.0,508.0 1122.0,508.0 1162.0,505.0 1202.0,501.0 1232.0,490.0 1277.0,478.0" fill="none" stroke="#73c3ee" stroke-width="1.6" stroke-linejoin="round"/>
<polyline points="157.0,103.0 162.0,125.0 167.0,145.0 170.0,165.0" fill="none" stroke="#f6f6ee" stroke-width="2.8" stroke-linejoin="round"/>
<polyline points="157.0,103.0 162.0,125.0 167.0,145.0 170.0,165.0" fill="none" stroke="#f0c24a" stroke-width="1.2" stroke-linejoin="round"/>
<polyline points="806.3,157.2 809.9,170.0 849.0,168.0 883.0,177.0 920.6,164.6 990.0,166.4 1042.0,180.7 1059.4,189.7 1079.7,210.0" fill="none" stroke="#f8f4ea" stroke-width="3" stroke-linejoin="round"/>
<polyline points="806.3,157.2 809.9,170.0 849.0,168.0 883.0,177.0 920.6,164.6 990.0,166.4 1042.0,180.7 1059.4,189.7 1079.7,210.0" fill="none" stroke="#f4a06a" stroke-width="1.3" stroke-linejoin="round"/>
<polyline points="888.0,45.0 911.6,80.7 917.0,93.0 899.0,120.0 899.0,145.0 920.6,170.0 935.0,223.6" fill="none" stroke="#f8f4ea" stroke-width="3" stroke-linejoin="round"/>
<polyline points="888.0,45.0 911.6,80.7 917.0,93.0 899.0,120.0 899.0,145.0 920.6,170.0 935.0,223.6" fill="none" stroke="#f4a06a" stroke-width="1.3" stroke-linejoin="round"/>
<polyline points="915.0,93.0 931.0,89.6 960.0,84.0" fill="none" stroke="#f8f4ea" stroke-width="3" stroke-linejoin="round"/>
<polyline points="915.0,93.0 931.0,89.6 960.0,84.0" fill="none" stroke="#f4a06a" stroke-width="1.3" stroke-linejoin="round"/>
<polyline points="83.7,17.7 106.5,22.8 126.8,30.4 136.9,50.7 152.1,76.0 177.5,87.5 202.8,93.8 228.2,106.5 220.6,131.8 207.9,152.1 192.7,177.5 164.8,182.6 152.1,192.7 121.7,207.9 109.0,218.0" fill="none" stroke="#f8f4ea" stroke-width="3" stroke-linejoin="round"/>
<polyline points="83.7,17.7 106.5,22.8 126.8,30.4 136.9,50.7 152.1,76.0 177.5,87.5 202.8,93.8 228.2,106.5 220.6,131.8 207.9,152.1 192.7,177.5 164.8,182.6 152.1,192.7 121.7,207.9 109.0,218.0" fill="none" stroke="#f4a06a" stroke-width="1.3" stroke-linejoin="round"/>
<polyline points="235.8,27.9 238.3,38.0 228.2,55.8 233.3,76.0 238.3,91.3 234.5,110.3" fill="none" stroke="#f8f4ea" stroke-width="3" stroke-linejoin="round"/>
<polyline points="235.8,27.9 238.3,38.0 228.2,55.8 233.3,76.0 238.3,91.3 234.5,110.3" fill="none" stroke="#f4a06a" stroke-width="1.3" stroke-linejoin="round"/>
<polyline points="238.3,33.0 258.6,17.7 278.9,12.7 304.3,0.0" fill="none" stroke="#f8f4ea" stroke-width="3" stroke-linejoin="round"/>
<polyline points="238.3,33.0 258.6,17.7 278.9,12.7 304.3,0.0" fill="none" stroke="#f4a06a" stroke-width="1.3" stroke-linejoin="round"/>
<polyline points="234.5,110.3 253.5,106.5 273.8,111.6 286.5,136.9" fill="none" stroke="#f8f4ea" stroke-width="3" stroke-linejoin="round"/>
<polyline points="234.5,110.3 253.5,106.5 273.8,111.6 286.5,136.9" fill="none" stroke="#f4a06a" stroke-width="1.3" stroke-linejoin="round"/>
<polyline points="207.9,162.3 223.1,172.4 233.3,192.7 235.8,210.5 243.4,220.0 253.5,258.0 258.6,296.0 263.7,308.7" fill="none" stroke="#f8f4ea" stroke-width="3" stroke-linejoin="round"/>
<polyline points="207.9,162.3 223.1,172.4 233.3,192.7 235.8,210.5 243.4,220.0 253.5,258.0 258.6,296.0 263.7,308.7" fill="none" stroke="#f4a06a" stroke-width="1.3" stroke-linejoin="round"/>
<polyline points="316.9,116.6 355.0,106.5 405.7,93.8 426.0,91.3" fill="none" stroke="#f8f4ea" stroke-width="3" stroke-linejoin="round"/>
<polyline points="316.9,116.6 355.0,106.5 405.7,93.8 426.0,91.3" fill="none" stroke="#f4a06a" stroke-width="1.3" stroke-linejoin="round"/>
<polyline points="382.9,0.0 385.4,43.0 400.6,76.0 405.7,93.8" fill="none" stroke="#f8f4ea" stroke-width="3" stroke-linejoin="round"/>
<polyline points="382.9,0.0 385.4,43.0 400.6,76.0 405.7,93.8" fill="none" stroke="#f4a06a" stroke-width="1.3" stroke-linejoin="round"/>
<polyline points="382.9,152.1 426.0,144.5" fill="none" stroke="#f8f4ea" stroke-width="3" stroke-linejoin="round"/>
<polyline points="382.9,152.1 426.0,144.5" fill="none" stroke="#f4a06a" stroke-width="1.3" stroke-linejoin="round"/>
<polyline points="426.0,119.2 459.0,116.6 494.5,91.3 517.3,78.6 542.6,76.0 578.1,76.0 603.5,76.0" fill="none" stroke="#f8f4ea" stroke-width="3" stroke-linejoin="round"/>
<polyline points="426.0,119.2 459.0,116.6 494.5,91.3 517.3,78.6 542.6,76.0 578.1,76.0 603.5,76.0" fill="none" stroke="#f4a06a" stroke-width="1.3" stroke-linejoin="round"/>
<polyline points="603.5,0.0 611.1,38.0 601.0,63.4 601.0,101.4 603.5,142.0 590.8,177.5 588.3,220.0 588.3,308.7 603.5,346.8 590.8,422.8 578.1,440.0" fill="none" stroke="#f8f4ea" stroke-width="3" stroke-linejoin="round"/>
<polyline points="603.5,0.0 611.1,38.0 601.0,63.4 601.0,101.4 603.5,142.0 590.8,177.5 588.3,220.0 588.3,308.7 603.5,346.8 590.8,422.8 578.1,440.0" fill="none" stroke="#f4a06a" stroke-width="1.3" stroke-linejoin="round"/>
<polyline points="537.6,106.5 522.3,126.8 507.1,157.2 502.1,182.6 486.9,220.0" fill="none" stroke="#f8f4ea" stroke-width="3" stroke-linejoin="round"/>
<polyline points="537.6,106.5 522.3,126.8 507.1,157.2 502.1,182.6 486.9,220.0" fill="none" stroke="#f4a06a" stroke-width="1.3" stroke-linejoin="round"/>
<polyline points="456.4,119.2 476.7,142.0 489.4,172.4 509.7,187.6 537.6,202.8" fill="none" stroke="#f8f4ea" stroke-width="3" stroke-linejoin="round"/>
<polyline points="456.4,119.2 476.7,142.0 489.4,172.4 509.7,187.6 537.6,202.8" fill="none" stroke="#f4a06a" stroke-width="1.3" stroke-linejoin="round"/>
<polyline points="634.0,25.0 654.2,47.0 687.2,40.6 717.6,38.0 755.6,15.2 781.0,0.0" fill="none" stroke="#f8f4ea" stroke-width="3" stroke-linejoin="round"/>
<polyline points="634.0,25.0 654.2,47.0 687.2,40.6 717.6,38.0 755.6,15.2 781.0,0.0" fill="none" stroke="#f4a06a" stroke-width="1.3" stroke-linejoin="round"/>
<polyline points="679.6,68.5 705.0,96.3 730.3,101.4 755.6,109.0 781.0,137.0 806.3,157.2 852.0,172.4" fill="none" stroke="#f8f4ea" stroke-width="3" stroke-linejoin="round"/>
<polyline points="679.6,68.5 705.0,96.3 730.3,101.4 755.6,109.0 781.0,137.0 806.3,157.2 852.0,172.4" fill="none" stroke="#f4a06a" stroke-width="1.3" stroke-linejoin="round"/>
<polyline points="679.6,0.0 687.2,33.0" fill="none" stroke="#f8f4ea" stroke-width="3" stroke-linejoin="round"/>
<polyline points="679.6,0.0 687.2,33.0" fill="none" stroke="#f4a06a" stroke-width="1.3" stroke-linejoin="round"/>
<polyline points="644.0,66.0 628.8,93.8 613.6,106.5" fill="none" stroke="#f8f4ea" stroke-width="3" stroke-linejoin="round"/>
<polyline points="644.0,66.0 628.8,93.8 613.6,106.5" fill="none" stroke="#f4a06a" stroke-width="1.3" stroke-linejoin="round"/>
<polyline points="945.6,0.0 938.0,25.3 930.4,63.2 930.4,81.0" fill="none" stroke="#f8f4ea" stroke-width="3" stroke-linejoin="round"/>
<polyline points="945.6,0.0 938.0,25.3 930.4,63.2 930.4,81.0" fill="none" stroke="#f4a06a" stroke-width="1.3" stroke-linejoin="round"/>
<polyline points="960.8,86.0 1003.8,92.3 1029.1,103.7 1054.4,103.7 1079.7,113.8 1092.3,121.4" fill="none" stroke="#f8f4ea" stroke-width="3" stroke-linejoin="round"/>
<polyline points="960.8,86.0 1003.8,92.3 1029.1,103.7 1054.4,103.7 1079.7,113.8 1092.3,121.4" fill="none" stroke="#f4a06a" stroke-width="1.3" stroke-linejoin="round"/>
<polyline points="1087.3,118.9 1087.3,101.2 1105.0,75.9 1120.2,45.5 1117.6,0.0" fill="none" stroke="#f8f4ea" stroke-width="3" stroke-linejoin="round"/>
<polyline points="1087.3,118.9 1087.3,101.2 1105.0,75.9 1120.2,45.5 1117.6,0.0" fill="none" stroke="#f4a06a" stroke-width="1.3" stroke-linejoin="round"/>
<polyline points="1105.0,111.3 1142.9,96.1 1180.9,88.5 1216.3,82.2 1241.6,86.0 1256.8,50.6 1277.0,25.3" fill="none" stroke="#f8f4ea" stroke-width="3" stroke-linejoin="round"/>
<polyline points="1105.0,111.3 1142.9,96.1 1180.9,88.5 1216.3,82.2 1241.6,86.0 1256.8,50.6 1277.0,25.3" fill="none" stroke="#f4a06a" stroke-width="1.3" stroke-linejoin="round"/>
<polyline points="1241.6,86.0 1239.0,126.5 1223.9,164.4 1213.7,194.8 1206.2,220.0 1188.5,220.0 1163.1,270.6 1153.0,295.9 1160.6,346.5 1175.8,397.1 1201.1,439.6 1206.2,440.0 1213.8,490.6 1226.4,541.2 1239.0,591.8 1236.5,661.0" fill="none" stroke="#f8f4ea" stroke-width="3" stroke-linejoin="round"/>
<polyline points="1241.6,86.0 1239.0,126.5 1223.9,164.4 1213.7,194.8 1206.2,220.0 1188.5,220.0 1163.1,270.6 1153.0,295.9 1160.6,346.5 1175.8,397.1 1201.1,439.6 1206.2,440.0 1213.8,490.6 1226.4,541.2 1239.0,591.8 1236.5,661.0" fill="none" stroke="#f4a06a" stroke-width="1.3" stroke-linejoin="round"/>
<polyline points="1105.0,141.7 1125.2,177.1 1125.2,220.0 1112.6,245.3 1127.7,270.6" fill="none" stroke="#f8f4ea" stroke-width="3" stroke-linejoin="round"/>
<polyline points="1105.0,141.7 1125.2,177.1 1125.2,220.0 1112.6,245.3 1127.7,270.6" fill="none" stroke="#f4a06a" stroke-width="1.3" stroke-linejoin="round"/>
<polyline points="0.0,372.1 50.7,364.5 96.3,382.3 152.1,377.2 197.8,378.5 228.2,372.1 253.5,362.0 273.8,351.8" fill="none" stroke="#f8f4ea" stroke-width="3" stroke-linejoin="round"/>
<polyline points="0.0,372.1 50.7,364.5 96.3,382.3 152.1,377.2 197.8,378.5 228.2,372.1 253.5,362.0 273.8,351.8" fill="none" stroke="#f4a06a" stroke-width="1.3" stroke-linejoin="round"/>
<polyline points="273.8,346.8 294.1,331.6 314.4,316.3 355.0,296.0 380.3,285.9 426.0,270.7" fill="none" stroke="#f8f4ea" stroke-width="3" stroke-linejoin="round"/>
<polyline points="273.8,346.8 294.1,331.6 314.4,316.3 355.0,296.0 380.3,285.9 426.0,270.7" fill="none" stroke="#f4a06a" stroke-width="1.3" stroke-linejoin="round"/>
<polyline points="177.5,268.2 192.7,301.1 202.8,316.3 210.4,331.6 223.1,341.7 253.5,349.3" fill="none" stroke="#f8f4ea" stroke-width="3" stroke-linejoin="round"/>
<polyline points="177.5,268.2 192.7,301.1 202.8,316.3 210.4,331.6 223.1,341.7 253.5,349.3" fill="none" stroke="#f4a06a" stroke-width="1.3" stroke-linejoin="round"/>
<polyline points="202.8,316.3 228.2,311.3 263.7,308.7 299.2,316.3" fill="none" stroke="#f8f4ea" stroke-width="3" stroke-linejoin="round"/>
<polyline points="202.8,316.3 228.2,311.3 263.7,308.7 299.2,316.3" fill="none" stroke="#f4a06a" stroke-width="1.3" stroke-linejoin="round"/>
<polyline points="387.9,296.0 387.9,334.1 405.7,372.1" fill="none" stroke="#f8f4ea" stroke-width="3" stroke-linejoin="round"/>
<polyline points="387.9,296.0 387.9,334.1 405.7,372.1" fill="none" stroke="#f4a06a" stroke-width="1.3" stroke-linejoin="round"/>
<polyline points="83.7,220.0 71.0,270.7 81.1,329.0 83.7,372.1 68.5,397.5 55.8,440.0 63.4,440.0 68.5,485.6 76.0,511.0 83.7,541.4 83.7,561.7 96.3,592.1 101.4,630.2 126.8,660.0" fill="none" stroke="#f8f4ea" stroke-width="3" stroke-linejoin="round"/>
<polyline points="83.7,220.0 71.0,270.7 81.1,329.0 83.7,372.1 68.5,397.5 55.8,440.0 63.4,440.0 68.5,485.6 76.0,511.0 83.7,541.4 83.7,561.7 96.3,592.1 101.4,630.2 126.8,660.0" fill="none" stroke="#f4a06a" stroke-width="1.3" stroke-linejoin="round"/>
<polyline points="65.9,220.0 71.0,245.4 106.5,255.5" fill="none" stroke="#f8f4ea" stroke-width="3" stroke-linejoin="round"/>
<polyline points="65.9,220.0 71.0,245.4 106.5,255.5" fill="none" stroke="#f4a06a" stroke-width="1.3" stroke-linejoin="round"/>
<polyline points="263.7,372.1 273.8,402.6 276.4,440.0 284.0,460.3 304.3,490.7 339.8,498.3 395.6,498.3 410.8,516.0 415.8,541.4" fill="none" stroke="#f8f4ea" stroke-width="3" stroke-linejoin="round"/>
<polyline points="263.7,372.1 273.8,402.6 276.4,440.0 284.0,460.3 304.3,490.7 339.8,498.3 395.6,498.3 410.8,516.0 415.8,541.4" fill="none" stroke="#f4a06a" stroke-width="1.3" stroke-linejoin="round"/>
<polyline points="0.0,258.0 25.4,245.4 76.0,232.7" fill="none" stroke="#f8f4ea" stroke-width="3" stroke-linejoin="round"/>
<polyline points="0.0,258.0 25.4,245.4 76.0,232.7" fill="none" stroke="#f4a06a" stroke-width="1.3" stroke-linejoin="round"/>
<polyline points="426.0,245.4 476.7,242.8 540.1,242.8 608.6,242.8" fill="none" stroke="#f8f4ea" stroke-width="3" stroke-linejoin="round"/>
<polyline points="426.0,245.4 476.7,242.8 540.1,242.8 608.6,242.8" fill="none" stroke="#f4a06a" stroke-width="1.3" stroke-linejoin="round"/>
<polyline points="608.6,331.6 654.2,336.6 705.0,351.8 730.3,367.1 760.7,367.1 806.3,354.4 852.0,362.0 902.6,365.5 958.2,346.5 1008.8,336.4 1034.1,341.4 1059.4,323.7 1094.9,321.2 1120.2,316.1 1142.9,293.4 1180.9,285.8 1277.0,288.3" fill="none" stroke="#f8f4ea" stroke-width="3" stroke-linejoin="round"/>
<polyline points="608.6,331.6 654.2,336.6 705.0,351.8 730.3,367.1 760.7,367.1 806.3,354.4 852.0,362.0 902.6,365.5 958.2,346.5 1008.8,336.4 1034.1,341.4 1059.4,323.7 1094.9,321.2 1120.2,316.1 1142.9,293.4 1180.9,285.8 1277.0,288.3" fill="none" stroke="#f4a06a" stroke-width="1.3" stroke-linejoin="round"/>
<polyline points="750.5,372.1 745.5,410.2 735.3,440.0" fill="none" stroke="#f8f4ea" stroke-width="3" stroke-linejoin="round"/>
<polyline points="750.5,372.1 745.5,410.2 735.3,440.0" fill="none" stroke="#f4a06a" stroke-width="1.3" stroke-linejoin="round"/>
<polyline points="821.5,220.0 781.0,270.7 773.4,308.7 760.7,341.7" fill="none" stroke="#f8f4ea" stroke-width="3" stroke-linejoin="round"/>
<polyline points="821.5,220.0 781.0,270.7 773.4,308.7 760.7,341.7" fill="none" stroke="#f4a06a" stroke-width="1.3" stroke-linejoin="round"/>
<polyline points="502.1,301.1 509.7,384.8 527.4,412.7" fill="none" stroke="#f8f4ea" stroke-width="3" stroke-linejoin="round"/>
<polyline points="502.1,301.1 509.7,384.8 527.4,412.7" fill="none" stroke="#f4a06a" stroke-width="1.3" stroke-linejoin="round"/>
<polyline points="441.2,220.0 438.7,253.0" fill="none" stroke="#f8f4ea" stroke-width="3" stroke-linejoin="round"/>
<polyline points="441.2,220.0 438.7,253.0" fill="none" stroke="#f4a06a" stroke-width="1.3" stroke-linejoin="round"/>
<polyline points="532.5,220.0 537.6,301.1 550.2,321.4" fill="none" stroke="#f8f4ea" stroke-width="3" stroke-linejoin="round"/>
<polyline points="532.5,220.0 537.6,301.1 550.2,321.4" fill="none" stroke="#f4a06a" stroke-width="1.3" stroke-linejoin="round"/>
<polyline points="935.5,220.0 935.5,245.3 953.2,283.2 943.1,333.8 953.2,371.8 938.0,409.7 940.5,440.0 935.5,440.0 943.1,490.6 945.6,536.1 920.3,571.5 917.8,596.8 920.3,632.3 912.7,661.0" fill="none" stroke="#f8f4ea" stroke-width="3" stroke-linejoin="round"/>
<polyline points="935.5,220.0 935.5,245.3 953.2,283.2 943.1,333.8 953.2,371.8 938.0,409.7 940.5,440.0 935.5,440.0 943.1,490.6 945.6,536.1 920.3,571.5 917.8,596.8 920.3,632.3 912.7,661.0" fill="none" stroke="#f4a06a" stroke-width="1.3" stroke-linejoin="round"/>
<polyline points="1094.9,220.0 1112.6,245.3 1127.7,270.6" fill="none" stroke="#f8f4ea" stroke-width="3" stroke-linejoin="round"/>
<polyline points="1094.9,220.0 1112.6,245.3 1127.7,270.6" fill="none" stroke="#f4a06a" stroke-width="1.3" stroke-linejoin="round"/>
<polyline points="1117.6,245.3 1142.9,270.6 1168.2,295.9 1206.2,308.5 1244.1,346.5 1256.8,361.7" fill="none" stroke="#f8f4ea" stroke-width="3" stroke-linejoin="round"/>
<polyline points="1117.6,245.3 1142.9,270.6 1168.2,295.9 1206.2,308.5 1244.1,346.5 1256.8,361.7" fill="none" stroke="#f4a06a" stroke-width="1.3" stroke-linejoin="round"/>
<polyline points="0.0,528.7 25.4,526.2 71.0,521.1 86.2,546.5 119.2,551.6 162.3,561.7 190.2,564.2 228.2,549.0 248.5,523.7 253.5,516.0 278.9,508.5 309.3,495.8" fill="none" stroke="#f8f4ea" stroke-width="3" stroke-linejoin="round"/>
<polyline points="0.0,528.7 25.4,526.2 71.0,521.1 86.2,546.5 119.2,551.6 162.3,561.7 190.2,564.2 228.2,549.0 248.5,523.7 253.5,516.0 278.9,508.5 309.3,495.8" fill="none" stroke="#f4a06a" stroke-width="1.3" stroke-linejoin="round"/>
<polyline points="162.3,561.7 192.7,582.0 218.0,607.3 233.3,627.6 243.4,660.0" fill="none" stroke="#f8f4ea" stroke-width="3" stroke-linejoin="round"/>
<polyline points="162.3,561.7 192.7,582.0 218.0,607.3 233.3,627.6 243.4,660.0" fill="none" stroke="#f4a06a" stroke-width="1.3" stroke-linejoin="round"/>
<polyline points="395.6,571.8 372.7,592.1 365.1,632.7 362.0,661.0" fill="none" stroke="#f8f4ea" stroke-width="3" stroke-linejoin="round"/>
<polyline points="395.6,571.8 372.7,592.1 365.1,632.7 362.0,661.0" fill="none" stroke="#f4a06a" stroke-width="1.3" stroke-linejoin="round"/>
<polyline points="304.3,592.1 329.6,576.9 380.3,576.9 405.7,576.9" fill="none" stroke="#f8f4ea" stroke-width="3" stroke-linejoin="round"/>
<polyline points="304.3,592.1 329.6,576.9 380.3,576.9 405.7,576.9" fill="none" stroke="#f4a06a" stroke-width="1.3" stroke-linejoin="round"/>
<polyline points="15.2,597.2 25.4,566.8 20.3,533.8" fill="none" stroke="#f8f4ea" stroke-width="3" stroke-linejoin="round"/>
<polyline points="15.2,597.2 25.4,566.8 20.3,533.8" fill="none" stroke="#f4a06a" stroke-width="1.3" stroke-linejoin="round"/>
<polyline points="527.4,440.0 476.7,503.4 451.4,566.8 426.0,597.2" fill="none" stroke="#f8f4ea" stroke-width="3" stroke-linejoin="round"/>
<polyline points="527.4,440.0 476.7,503.4 451.4,566.8 426.0,597.2" fill="none" stroke="#f4a06a" stroke-width="1.3" stroke-linejoin="round"/>
<polyline points="573.0,440.0 613.6,465.3 654.2,485.6" fill="none" stroke="#f8f4ea" stroke-width="3" stroke-linejoin="round"/>
<polyline points="573.0,440.0 613.6,465.3 654.2,485.6" fill="none" stroke="#f4a06a" stroke-width="1.3" stroke-linejoin="round"/>
<polyline points="730.3,533.8 679.6,536.3 666.9,554.1 654.2,576.9 623.8,612.4 608.6,658.0" fill="none" stroke="#f8f4ea" stroke-width="3" stroke-linejoin="round"/>
<polyline points="730.3,533.8 679.6,536.3 666.9,554.1 654.2,576.9 623.8,612.4 608.6,658.0" fill="none" stroke="#f4a06a" stroke-width="1.3" stroke-linejoin="round"/>
<polyline points="775.9,536.3 801.3,541.4 826.6,559.2 821.5,566.8 852.0,576.9 882.4,591.8 922.8,596.8 953.2,604.4 1013.9,615.8 1044.3,612.0 1120.2,617.1 1155.6,650.0 1170.8,661.0" fill="none" stroke="#f8f4ea" stroke-width="3" stroke-linejoin="round"/>
<polyline points="775.9,536.3 801.3,541.4 826.6,559.2 821.5,566.8 852.0,576.9 882.4,591.8 922.8,596.8 953.2,604.4 1013.9,615.8 1044.3,612.0 1120.2,617.1 1155.6,650.0 1170.8,661.0" fill="none" stroke="#f4a06a" stroke-width="1.3" stroke-linejoin="round"/>
<polyline points="1256.8,528.5 1277.0,465.3" fill="none" stroke="#f8f4ea" stroke-width="3" stroke-linejoin="round"/>
<polyline points="1256.8,528.5 1277.0,465.3" fill="none" stroke="#f4a06a" stroke-width="1.3" stroke-linejoin="round"/>
<polyline points="1120.2,617.1 1130.3,604.4 1140.4,596.8 1170.8,561.4 1201.1,551.3 1216.3,536.1" fill="none" stroke="#f8f4ea" stroke-width="3" stroke-linejoin="round"/>
<polyline points="1120.2,617.1 1130.3,604.4 1140.4,596.8 1170.8,561.4 1201.1,551.3 1216.3,536.1" fill="none" stroke="#f4a06a" stroke-width="1.3" stroke-linejoin="round"/>
<polyline points="106.5,0.0 101.4,5.0 83.7,15.0 81.0,30.0 73.5,40.6 68.5,60.9 73.5,78.6 81.1,98.9 91.3,111.6 96.3,126.8 106.5,134.4 116.6,144.5 134.4,152.1 154.7,157.2 157.2,162.3 153.4,175.0 152.1,186.4 142.0,202.8 136.9,220.0 121.7,235.2 126.8,245.4 124.2,255.5" fill="none" stroke="#7c83a6" stroke-width="1.8" stroke-linejoin="round"/>
<polyline points="124.2,255.5 124.2,268.7 142.0,270.7 159.7,278.3 167.3,293.5 164.8,306.2 177.5,321.4 187.6,331.6 192.7,346.8 200.3,364.5 210.4,369.6 223.1,372.1 225.7,351.8 243.4,350.6 253.5,359.4 263.7,372.1 271.3,377.2 281.4,374.7 316.9,382.3 324.5,374.7 352.4,364.5 365.1,372.1 372.7,387.3 393.0,397.5 400.6,407.6 426.0,401.3 456.4,407.6 471.6,415.2 491.9,420.3 502.1,427.9 514.7,433.0 512.0,440.0 502.0,455.0 486.9,485.6 466.6,500.9 456.4,521.0 441.2,538.9 426.0,554.1 422.0,582.0 418.0,605.0 411.0,643.0 407.0,661.0" fill="none" stroke="#7c83a6" stroke-width="1.8" stroke-linejoin="round"/>
<polyline points="124.2,255.5 116.6,258.0 96.3,255.5 76.1,260.6 60.9,273.2 43.1,274.5 38.0,263.1 15.2,255.5 5.1,242.8 0.0,240.3" fill="none" stroke="#7c83a6" stroke-width="1.8" stroke-linejoin="round"/>
<polyline points="73.5,38.0 52.0,35.0 40.6,33.0 35.5,50.7 20.3,63.4 10.1,83.7 5.0,101.4 0.0,106.5" fill="none" stroke="#7c83a6" stroke-width="1.8" stroke-linejoin="round"/>
<polyline points="0.0,159.7 7.6,177.5 15.2,192.7 22.8,202.8 25.4,220.0 22.0,235.0 5.0,243.0" fill="none" stroke="#7c83a6" stroke-width="1.8" stroke-linejoin="round"/>
<rect x="171.8" y="220.6" width="24" height="13" rx="2" fill="#f2d98a" stroke="#6f7394" stroke-width="1"/>
<text x="183.8" y="231.1" font-size="10" font-weight="700" fill="#4d5173" text-anchor="middle" font-family="Liberation Sans">407</text>
<rect x="258.8" y="419.4" width="26" height="13" rx="2" fill="#fff" stroke="#5a6294" stroke-width="1"/>
<text x="271.8" y="429.9" font-size="10" font-weight="700" fill="#5a6294" text-anchor="middle" font-family="Liberation Sans">A 4</text>
<rect x="53.5" y="445.5" width="30" height="13" rx="2" fill="#fff" stroke="#5a6294" stroke-width="1"/>
<text x="68.5" y="456.0" font-size="10" font-weight="700" fill="#5a6294" text-anchor="middle" font-family="Liberation Sans">A 31</text>
<rect x="478.6" y="514.1" width="18" height="13" rx="3" fill="#6b79c9"/>
<text x="487.6" y="524.6" font-size="10" font-weight="700" fill="#fff" text-anchor="middle" font-family="Liberation Sans">5</text>
<rect x="925.5" y="36.5" width="20" height="13" rx="3" fill="#6b79c9"/>
<text x="935.5" y="47.0" font-size="10" font-weight="700" fill="#fff" text-anchor="middle" font-family="Liberation Sans">71</text>
<rect x="1120.8" y="428.5" width="18" height="13" rx="2" fill="#f2d98a" stroke="#6f7394" stroke-width="1"/>
<text x="1129.8" y="439.0" font-size="10" font-weight="700" fill="#4d5173" text-anchor="middle" font-family="Liberation Sans">13</text>
<rect x="1067.6" y="531.7" width="18" height="13" rx="2" fill="#f2d98a" stroke="#6f7394" stroke-width="1"/>
<text x="1076.6" y="542.2" font-size="10" font-weight="700" fill="#4d5173" text-anchor="middle" font-family="Liberation Sans">2</text>
<rect x="-4.0" y="9.5" width="16" height="13" rx="2" fill="#5fa676"/>
<circle cx="136.4" cy="26.1" r="2.6" fill="#fff"/><circle cx="136.4" cy="26.1" r="1.8" fill="#111"/>
<circle cx="222.4" cy="29.2" r="2.6" fill="#fff"/><circle cx="222.4" cy="29.2" r="1.8" fill="#111"/>
<circle cx="353.2" cy="71.5" r="2.6" fill="#fff"/><circle cx="353.2" cy="71.5" r="1.8" fill="#111"/>
<circle cx="235.3" cy="99.4" r="2.6" fill="#fff"/><circle cx="235.3" cy="99.4" r="1.8" fill="#111"/>
<circle cx="371.4" cy="100.7" r="2.6" fill="#fff"/><circle cx="371.4" cy="100.7" r="1.8" fill="#111"/>
<circle cx="157.2" cy="103.4" r="2.6" fill="#fff"/><circle cx="157.2" cy="103.4" r="1.8" fill="#111"/>
<circle cx="79.4" cy="138.2" r="2.6" fill="#fff"/><circle cx="79.4" cy="138.2" r="1.8" fill="#111"/>
<circle cx="247.2" cy="208.4" r="2.6" fill="#fff"/><circle cx="247.2" cy="208.4" r="1.8" fill="#111"/>
<circle cx="325.3" cy="190.7" r="2.6" fill="#fff"/><circle cx="325.3" cy="190.7" r="1.8" fill="#111"/>
<circle cx="441.3" cy="28.3" r="2.6" fill="#fff"/><circle cx="441.3" cy="28.3" r="1.8" fill="#111"/>
<circle cx="726.5" cy="27.1" r="2.6" fill="#fff"/><circle cx="726.5" cy="27.1" r="1.8" fill="#111"/>
<circle cx="667.4" cy="50.2" r="2.6" fill="#fff"/><circle cx="667.4" cy="50.2" r="1.8" fill="#111"/>
<circle cx="523.1" cy="67.7" r="2.6" fill="#fff"/><circle cx="523.1" cy="67.7" r="1.8" fill="#111"/>
<circle cx="717.6" cy="103.4" r="2.6" fill="#fff"/><circle cx="717.6" cy="103.4" r="1.8" fill="#111"/>
<circle cx="611.1" cy="136.4" r="2.6" fill="#fff"/><circle cx="611.1" cy="136.4" r="1.8" fill="#111"/>
<circle cx="443.2" cy="146.5" r="2.6" fill="#fff"/><circle cx="443.2" cy="146.5" r="1.8" fill="#111"/>
<circle cx="719.4" cy="159.2" r="2.6" fill="#fff"/><circle cx="719.4" cy="159.2" r="1.8" fill="#111"/>
<circle cx="496.5" cy="178.8" r="2.6" fill="#fff"/><circle cx="496.5" cy="178.8" r="1.8" fill="#111"/>
<circle cx="605.5" cy="200.3" r="2.6" fill="#fff"/><circle cx="605.5" cy="200.3" r="1.8" fill="#111"/>
<circle cx="686.4" cy="200.3" r="2.6" fill="#fff"/><circle cx="686.4" cy="200.3" r="1.8" fill="#111"/>
<circle cx="434.4" cy="217.5" r="2.6" fill="#fff"/><circle cx="434.4" cy="217.5" r="1.8" fill="#111"/>
<circle cx="1104.5" cy="8.3" r="2.6" fill="#fff"/><circle cx="1104.5" cy="8.3" r="1.8" fill="#111"/>
<circle cx="915.2" cy="28.3" r="2.6" fill="#fff"/><circle cx="915.2" cy="28.3" r="1.8" fill="#111"/>
<circle cx="1068.3" cy="63.2" r="2.6" fill="#fff"/><circle cx="1068.3" cy="63.2" r="1.8" fill="#111"/>
<circle cx="1207.4" cy="61.2" r="2.6" fill="#fff"/><circle cx="1207.4" cy="61.2" r="1.8" fill="#111"/>
<circle cx="892.5" cy="102.5" r="2.6" fill="#fff"/><circle cx="892.5" cy="102.5" r="1.8" fill="#111"/>
<circle cx="1119.4" cy="102.5" r="2.6" fill="#fff"/><circle cx="1119.4" cy="102.5" r="1.8" fill="#111"/>
<circle cx="1235.2" cy="113.3" r="2.6" fill="#fff"/><circle cx="1235.2" cy="113.3" r="1.8" fill="#111"/>
<circle cx="1245.4" cy="146.2" r="2.6" fill="#fff"/><circle cx="1245.4" cy="146.2" r="1.8" fill="#111"/>
<circle cx="1227.7" cy="175.3" r="2.6" fill="#fff"/><circle cx="1227.7" cy="175.3" r="1.8" fill="#111"/>
<circle cx="1071.6" cy="192.3" r="2.6" fill="#fff"/><circle cx="1071.6" cy="192.3" r="1.8" fill="#111"/>
<circle cx="954.5" cy="192.3" r="2.6" fill="#fff"/><circle cx="954.5" cy="192.3" r="1.8" fill="#111"/>
<circle cx="3.5" cy="237.2" r="2.6" fill="#fff"/><circle cx="3.5" cy="237.2" r="1.8" fill="#111"/>
<circle cx="295.4" cy="270.2" r="2.6" fill="#fff"/><circle cx="295.4" cy="270.2" r="1.8" fill="#111"/>
<circle cx="59.6" cy="315.3" r="2.6" fill="#fff"/><circle cx="59.6" cy="315.3" r="1.8" fill="#111"/>
<circle cx="330.1" cy="319.4" r="2.6" fill="#fff"/><circle cx="330.1" cy="319.4" r="1.8" fill="#111"/>
<circle cx="388.4" cy="358.2" r="2.6" fill="#fff"/><circle cx="388.4" cy="358.2" r="1.8" fill="#111"/>
<circle cx="20.3" cy="372.6" r="2.6" fill="#fff"/><circle cx="20.3" cy="372.6" r="1.8" fill="#111"/>
<circle cx="83.2" cy="384.3" r="2.6" fill="#fff"/><circle cx="83.2" cy="384.3" r="1.8" fill="#111"/>
<circle cx="196.5" cy="389.4" r="2.6" fill="#fff"/><circle cx="196.5" cy="389.4" r="1.8" fill="#111"/>
<circle cx="274.3" cy="387.3" r="2.6" fill="#fff"/><circle cx="274.3" cy="387.3" r="1.8" fill="#111"/>
<circle cx="349.4" cy="406.6" r="2.6" fill="#fff"/><circle cx="349.4" cy="406.6" r="1.8" fill="#111"/>
<circle cx="754.3" cy="252.5" r="2.6" fill="#fff"/><circle cx="754.3" cy="252.5" r="1.8" fill="#111"/>
<circle cx="716.3" cy="308.2" r="2.6" fill="#fff"/><circle cx="716.3" cy="308.2" r="1.8" fill="#111"/>
<circle cx="465.3" cy="357.4" r="2.6" fill="#fff"/><circle cx="465.3" cy="357.4" r="1.8" fill="#111"/>
<circle cx="582.4" cy="342.5" r="2.6" fill="#fff"/><circle cx="582.4" cy="342.5" r="1.8" fill="#111"/>
<circle cx="659.3" cy="340.4" r="2.6" fill="#fff"/><circle cx="659.3" cy="340.4" r="1.8" fill="#111"/>
<circle cx="792.4" cy="356.9" r="2.6" fill="#fff"/><circle cx="792.4" cy="356.9" r="1.8" fill="#111"/>
<circle cx="732.3" cy="376.7" r="2.6" fill="#fff"/><circle cx="732.3" cy="376.7" r="1.8" fill="#111"/>
<circle cx="599.2" cy="382.3" r="2.6" fill="#fff"/><circle cx="599.2" cy="382.3" r="1.8" fill="#111"/>
<circle cx="666.4" cy="378.5" r="2.6" fill="#fff"/><circle cx="666.4" cy="378.5" r="1.8" fill="#111"/>
<circle cx="841.8" cy="386.6" r="2.6" fill="#fff"/><circle cx="841.8" cy="386.6" r="1.8" fill="#111"/>
<circle cx="557.8" cy="421.0" r="2.6" fill="#fff"/><circle cx="557.8" cy="421.0" r="1.8" fill="#111"/>
<circle cx="1028.6" cy="232.1" r="2.6" fill="#fff"/><circle cx="1028.6" cy="232.1" r="1.8" fill="#111"/>
<circle cx="988.6" cy="259.2" r="2.6" fill="#fff"/><circle cx="988.6" cy="259.2" r="1.8" fill="#111"/>
<circle cx="937.5" cy="300.4" r="2.6" fill="#fff"/><circle cx="937.5" cy="300.4" r="1.8" fill="#111"/>
<circle cx="1128.2" cy="275.1" r="2.6" fill="#fff"/><circle cx="1128.2" cy="275.1" r="1.8" fill="#111"/>
<circle cx="1116.4" cy="315.6" r="2.6" fill="#fff"/><circle cx="1116.4" cy="315.6" r="1.8" fill="#111"/>
<circle cx="1210.0" cy="332.0" r="2.6" fill="#fff"/><circle cx="1210.0" cy="332.0" r="1.8" fill="#111"/>
<circle cx="1020.2" cy="324.2" r="2.6" fill="#fff"/><circle cx="1020.2" cy="324.2" r="1.8" fill="#111"/>
<circle cx="969.1" cy="368.5" r="2.6" fill="#fff"/><circle cx="969.1" cy="368.5" r="1.8" fill="#111"/>
<circle cx="1265.1" cy="371.3" r="2.6" fill="#fff"/><circle cx="1265.1" cy="371.3" r="1.8" fill="#111"/>
<circle cx="967.1" cy="400.1" r="2.6" fill="#fff"/><circle cx="967.1" cy="400.1" r="1.8" fill="#111"/>
<circle cx="1106.2" cy="413.5" r="2.6" fill="#fff"/><circle cx="1106.2" cy="413.5" r="1.8" fill="#111"/>
<circle cx="1213.2" cy="411.5" r="2.6" fill="#fff"/><circle cx="1213.2" cy="411.5" r="1.8" fill="#111"/>
<circle cx="269.3" cy="509.2" r="2.6" fill="#fff"/><circle cx="269.3" cy="509.2" r="1.8" fill="#111"/>
<circle cx="84.4" cy="522.4" r="2.6" fill="#fff"/><circle cx="84.4" cy="522.4" r="1.8" fill="#111"/>
<circle cx="22.8" cy="528.2" r="2.6" fill="#fff"/><circle cx="22.8" cy="528.2" r="1.8" fill="#111"/>
<circle cx="150.4" cy="555.4" r="2.6" fill="#fff"/><circle cx="150.4" cy="555.4" r="1.8" fill="#111"/>
<circle cx="361.3" cy="597.7" r="2.6" fill="#fff"/><circle cx="361.3" cy="597.7" r="1.8" fill="#111"/>
<circle cx="108.3" cy="625.6" r="2.6" fill="#fff"/><circle cx="108.3" cy="625.6" r="1.8" fill="#111"/>
<circle cx="247.2" cy="653.7" r="2.6" fill="#fff"/><circle cx="247.2" cy="653.7" r="1.8" fill="#111"/>
<circle cx="622.5" cy="458.3" r="2.6" fill="#fff"/><circle cx="622.5" cy="458.3" r="1.8" fill="#111"/>
<circle cx="428.0" cy="481.8" r="2.6" fill="#fff"/><circle cx="428.0" cy="481.8" r="1.8" fill="#111"/>
<circle cx="657.2" cy="554.6" r="2.6" fill="#fff"/><circle cx="657.2" cy="554.6" r="1.8" fill="#111"/>
<circle cx="730.3" cy="587.6" r="2.6" fill="#fff"/><circle cx="730.3" cy="587.6" r="1.8" fill="#111"/>
<circle cx="560.4" cy="596.4" r="2.6" fill="#fff"/><circle cx="560.4" cy="596.4" r="1.8" fill="#111"/>
<circle cx="444.3" cy="636.5" r="2.6" fill="#fff"/><circle cx="444.3" cy="636.5" r="1.8" fill="#111"/>
<circle cx="737.1" cy="646.6" r="2.6" fill="#fff"/><circle cx="737.1" cy="646.6" r="1.8" fill="#111"/>
<circle cx="855.5" cy="488.0" r="2.6" fill="#fff"/><circle cx="855.5" cy="488.0" r="1.8" fill="#111"/>
<circle cx="918.5" cy="476.7" r="2.6" fill="#fff"/><circle cx="918.5" cy="476.7" r="1.8" fill="#111"/>
<circle cx="1003.3" cy="471.6" r="2.6" fill="#fff"/><circle cx="1003.3" cy="471.6" r="1.8" fill="#111"/>
<circle cx="1202.4" cy="500.2" r="2.6" fill="#fff"/><circle cx="1202.4" cy="500.2" r="1.8" fill="#111"/>
<circle cx="1065.3" cy="514.6" r="2.6" fill="#fff"/><circle cx="1065.3" cy="514.6" r="1.8" fill="#111"/>
<circle cx="931.2" cy="527.3" r="2.6" fill="#fff"/><circle cx="931.2" cy="527.3" r="1.8" fill="#111"/>
<circle cx="1004.5" cy="558.4" r="2.6" fill="#fff"/><circle cx="1004.5" cy="558.4" r="1.8" fill="#111"/>
<circle cx="1220.6" cy="575.3" r="2.6" fill="#fff"/><circle cx="1220.6" cy="575.3" r="1.8" fill="#111"/>
<circle cx="1080.2" cy="569.5" r="2.6" fill="#fff"/><circle cx="1080.2" cy="569.5" r="1.8" fill="#111"/>
<circle cx="1140.4" cy="598.6" r="2.6" fill="#fff"/><circle cx="1140.4" cy="598.6" r="1.8" fill="#111"/>
<circle cx="958.2" cy="599.9" r="2.6" fill="#fff"/><circle cx="958.2" cy="599.9" r="1.8" fill="#111"/>
<circle cx="897.5" cy="618.6" r="2.6" fill="#fff"/><circle cx="897.5" cy="618.6" r="1.8" fill="#111"/>
<circle cx="1090.3" cy="627.7" r="2.6" fill="#fff"/><circle cx="1090.3" cy="627.7" r="1.8" fill="#111"/>
<circle cx="723.0" cy="495.0" r="2.6" fill="#fff"/><circle cx="723.0" cy="495.0" r="1.8" fill="#111"/>
<text x="122.5" y="21.5" font-size="12.6" textLength="27.5" lengthAdjust="spacingAndGlyphs" font-family="Liberation Sans" fill="none" stroke="#ffffff" stroke-opacity="0.8" stroke-width="2.2" stroke-linejoin="round">Prüm</text>
<text x="122.5" y="21.5" font-size="12.6" textLength="27.5" lengthAdjust="spacingAndGlyphs" font-family="Liberation Sans" fill="#363636">Prüm</text>
<text x="210.4" y="24.8" font-size="12.6" textLength="25.4" lengthAdjust="spacingAndGlyphs" font-family="Liberation Sans" fill="none" stroke="#ffffff" stroke-opacity="0.8" stroke-width="2.2" stroke-linejoin="round">Daun</text>
<text x="210.4" y="24.8" font-size="12.6" textLength="25.4" lengthAdjust="spacingAndGlyphs" font-family="Liberation Sans" fill="#363636">Daun</text>
<text x="273.8" y="40.6" font-size="12.6" textLength="40.6" lengthAdjust="spacingAndGlyphs" font-family="Liberation Sans" fill="none" stroke="#ffffff" stroke-opacity="0.8" stroke-width="2.2" stroke-linejoin="round">Cochem</text>
<text x="273.8" y="40.6" font-size="12.6" textLength="40.6" lengthAdjust="spacingAndGlyphs" font-family="Liberation Sans" fill="#363636">Cochem</text>
<text x="327.0" y="66.4" font-size="12.6" textLength="52.6" lengthAdjust="spacingAndGlyphs" font-family="Liberation Sans" fill="none" stroke="#ffffff" stroke-opacity="0.8" stroke-width="2.2" stroke-linejoin="round">Kastellaun</text>
<text x="327.0" y="66.4" font-size="12.6" textLength="52.6" lengthAdjust="spacingAndGlyphs" font-family="Liberation Sans" fill="#363636">Kastellaun</text>
<text x="216.3" y="95.0" font-size="12.6" textLength="37.2" lengthAdjust="spacingAndGlyphs" font-family="Liberation Sans" fill="none" stroke="#ffffff" stroke-opacity="0.8" stroke-width="2.2" stroke-linejoin="round">Wittlich</text>
<text x="216.3" y="95.0" font-size="12.6" textLength="37.2" lengthAdjust="spacingAndGlyphs" font-family="Liberation Sans" fill="#363636">Wittlich</text>
<text x="347.4" y="95.8" font-size="12.6" textLength="47.4" lengthAdjust="spacingAndGlyphs" font-family="Liberation Sans" fill="none" stroke="#ffffff" stroke-opacity="0.8" stroke-width="2.2" stroke-linejoin="round">Simmern</text>
<text x="347.4" y="95.8" font-size="12.6" textLength="47.4" lengthAdjust="spacingAndGlyphs" font-family="Liberation Sans" fill="#363636">Simmern</text>
<text x="139.0" y="97.5" font-size="12.6" textLength="37.2" lengthAdjust="spacingAndGlyphs" font-family="Liberation Sans" fill="none" stroke="#ffffff" stroke-opacity="0.8" stroke-width="2.2" stroke-linejoin="round">Bitburg</text>
<text x="139.0" y="97.5" font-size="12.6" textLength="37.2" lengthAdjust="spacingAndGlyphs" font-family="Liberation Sans" fill="#363636">Bitburg</text>
<text x="59.0" y="133.9" font-size="12.6" textLength="41.2" lengthAdjust="spacingAndGlyphs" font-family="Liberation Sans" fill="none" stroke="#ffffff" stroke-opacity="0.8" stroke-width="2.2" stroke-linejoin="round">Diekirch</text>
<text x="59.0" y="133.9" font-size="12.6" textLength="41.2" lengthAdjust="spacingAndGlyphs" font-family="Liberation Sans" fill="#363636">Diekirch</text>
<text x="13.2" y="176.5" font-size="18.8" textLength="102.7" lengthAdjust="spacingAndGlyphs" font-family="Liberation Sans" fill="none" stroke="#ffffff" stroke-opacity="0.8" stroke-width="2.2" stroke-linejoin="round">Luxembourg</text>
<text x="13.2" y="176.5" font-size="18.8" textLength="102.7" lengthAdjust="spacingAndGlyphs" font-family="Liberation Sans" fill="#222" stroke="#222" stroke-width="0.55">Luxembourg</text>
<text x="37.0" y="216.0" font-size="12.6" textLength="72.5" lengthAdjust="spacingAndGlyphs" font-family="Liberation Sans" fill="none" stroke="#ffffff" stroke-opacity="0.8" stroke-width="2.2" stroke-linejoin="round">Luxembourg</text>
<text x="37.0" y="216.0" font-size="12.6" textLength="72.5" lengthAdjust="spacingAndGlyphs" font-family="Liberation Sans" fill="#363636">Luxembourg</text>
<text x="168.6" y="167.3" font-size="12.6" textLength="31.4" lengthAdjust="spacingAndGlyphs" font-family="Liberation Sans" fill="none" stroke="#ffffff" stroke-opacity="0.8" stroke-width="2.2" stroke-linejoin="round">Trier</text>
<text x="168.6" y="167.3" font-size="12.6" textLength="31.4" lengthAdjust="spacingAndGlyphs" font-family="Liberation Sans" fill="#363636">Trier</text>
<text x="219.3" y="204.4" font-size="12.6" textLength="57.6" lengthAdjust="spacingAndGlyphs" font-family="Liberation Sans" fill="none" stroke="#ffffff" stroke-opacity="0.8" stroke-width="2.2" stroke-linejoin="round">Hermeskeil</text>
<text x="219.3" y="204.4" font-size="12.6" textLength="57.6" lengthAdjust="spacingAndGlyphs" font-family="Liberation Sans" fill="#363636">Hermeskeil</text>
<text x="289.0" y="186.4" font-size="12.6" textLength="73.6" lengthAdjust="spacingAndGlyphs" font-family="Liberation Sans" fill="none" stroke="#ffffff" stroke-opacity="0.8" stroke-width="2.2" stroke-linejoin="round">Idar-Oberstein</text>
<text x="289.0" y="186.4" font-size="12.6" textLength="73.6" lengthAdjust="spacingAndGlyphs" font-family="Liberation Sans" fill="#363636">Idar-Oberstein</text>
<text x="405.5" y="142.0" font-size="12.6" textLength="75.8" lengthAdjust="spacingAndGlyphs" font-family="Liberation Sans" fill="none" stroke="#ffffff" stroke-opacity="0.8" stroke-width="2.2" stroke-linejoin="round">Bad Kreuznach</text>
<text x="405.5" y="142.0" font-size="12.6" textLength="75.8" lengthAdjust="spacingAndGlyphs" font-family="Liberation Sans" fill="#363636">Bad Kreuznach</text>
<text x="398.0" y="213.5" font-size="12.6" textLength="72.4" lengthAdjust="spacingAndGlyphs" font-family="Liberation Sans" fill="none" stroke="#ffffff" stroke-opacity="0.8" stroke-width="2.2" stroke-linejoin="round">Rockenhausen</text>
<text x="398.0" y="213.5" font-size="12.6" textLength="72.4" lengthAdjust="spacingAndGlyphs" font-family="Liberation Sans" fill="#363636">Rockenhausen</text>
<text x="418.8" y="23.8" font-size="12.6" textLength="46.4" lengthAdjust="spacingAndGlyphs" font-family="Liberation Sans" fill="none" stroke="#ffffff" stroke-opacity="0.8" stroke-width="2.2" stroke-linejoin="round">Nastätten</text>
<text x="418.8" y="23.8" font-size="12.6" textLength="46.4" lengthAdjust="spacingAndGlyphs" font-family="Liberation Sans" fill="#363636">Nastätten</text>
<text x="696.8" y="22.8" font-size="12.6" textLength="58.8" lengthAdjust="spacingAndGlyphs" font-family="Liberation Sans" fill="none" stroke="#ffffff" stroke-opacity="0.8" stroke-width="2.2" stroke-linejoin="round">Gelnhausen</text>
<text x="696.8" y="22.8" font-size="12.6" textLength="58.8" lengthAdjust="spacingAndGlyphs" font-family="Liberation Sans" fill="#363636">Gelnhausen</text>
<text x="649.6" y="44.4" font-size="12.6" textLength="36.8" lengthAdjust="spacingAndGlyphs" font-family="Liberation Sans" fill="none" stroke="#ffffff" stroke-opacity="0.8" stroke-width="2.2" stroke-linejoin="round">Hanau</text>
<text x="649.6" y="44.4" font-size="12.6" textLength="36.8" lengthAdjust="spacingAndGlyphs" font-family="Liberation Sans" fill="#363636">Hanau</text>
<text x="492.4" y="61.4" font-size="12.6" textLength="62.9" lengthAdjust="spacingAndGlyphs" font-family="Liberation Sans" fill="none" stroke="#ffffff" stroke-opacity="0.8" stroke-width="2.2" stroke-linejoin="round">Wiesbaden</text>
<text x="492.4" y="61.4" font-size="12.6" textLength="62.9" lengthAdjust="spacingAndGlyphs" font-family="Liberation Sans" fill="#363636">Wiesbaden</text>
<text x="582.0" y="77.4" font-size="17.6" textLength="72.2" lengthAdjust="spacingAndGlyphs" font-family="Liberation Sans" fill="none" stroke="#ffffff" stroke-opacity="0.8" stroke-width="2.2" stroke-linejoin="round">Frankfurt</text>
<text x="582.0" y="77.4" font-size="17.6" textLength="72.2" lengthAdjust="spacingAndGlyphs" font-family="Liberation Sans" fill="#222">Frankfurt</text>
<text x="773.4" y="91.8" font-size="12.6" textLength="68.4" lengthAdjust="spacingAndGlyphs" font-family="Liberation Sans" fill="none" stroke="#ffffff" stroke-opacity="0.8" stroke-width="2.2" stroke-linejoin="round">Lohr a. Main</text>
<text x="773.4" y="91.8" font-size="12.6" textLength="68.4" lengthAdjust="spacingAndGlyphs" font-family="Liberation Sans" fill="#363636">Lohr a. Main</text>
<text x="680.0" y="99.4" font-size="12.6" textLength="73.0" lengthAdjust="spacingAndGlyphs" font-family="Liberation Sans" fill="none" stroke="#ffffff" stroke-opacity="0.8" stroke-width="2.2" stroke-linejoin="round">Aschaffenburg</text>
<text x="680.0" y="99.4" font-size="12.6" textLength="73.0" lengthAdjust="spacingAndGlyphs" font-family="Liberation Sans" fill="#363636">Aschaffenburg</text>
<text x="581.2" y="130.6" font-size="14.5" textLength="60.8" lengthAdjust="spacingAndGlyphs" font-family="Liberation Sans" fill="none" stroke="#ffffff" stroke-opacity="0.8" stroke-width="2.2" stroke-linejoin="round">Darmstadt</text>
<text x="581.2" y="130.6" font-size="14.5" textLength="60.8" lengthAdjust="spacingAndGlyphs" font-family="Liberation Sans" fill="#222">Darmstadt</text>
<text x="694.3" y="141.2" font-size="12.6" textLength="50.7" lengthAdjust="spacingAndGlyphs" font-family="Liberation Sans" fill="none" stroke="#ffffff" stroke-opacity="0.8" stroke-width="2.2" stroke-linejoin="round">Erlenbach</text>
<text x="694.3" y="141.2" font-size="12.6" textLength="50.7" lengthAdjust="spacingAndGlyphs" font-family="Liberation Sans" fill="#363636">Erlenbach</text>
<text x="698.6" y="155.2" font-size="12.6" textLength="42.4" lengthAdjust="spacingAndGlyphs" font-family="Liberation Sans" fill="none" stroke="#ffffff" stroke-opacity="0.8" stroke-width="2.2" stroke-linejoin="round">am Main</text>
<text x="698.6" y="155.2" font-size="12.6" textLength="42.4" lengthAdjust="spacingAndGlyphs" font-family="Liberation Sans" fill="#363636">am Main</text>
<text x="770.3" y="156.7" font-size="12.6" textLength="48.7" lengthAdjust="spacingAndGlyphs" font-family="Liberation Sans" fill="none" stroke="#ffffff" stroke-opacity="0.8" stroke-width="2.2" stroke-linejoin="round">Wertheim</text>
<text x="770.3" y="156.7" font-size="12.6" textLength="48.7" lengthAdjust="spacingAndGlyphs" font-family="Liberation Sans" fill="#363636">Wertheim</text>
<text x="483.8" y="173.5" font-size="12.6" textLength="26.4" lengthAdjust="spacingAndGlyphs" font-family="Liberation Sans" fill="none" stroke="#ffffff" stroke-opacity="0.8" stroke-width="2.2" stroke-linejoin="round">Alzey</text>
<text x="483.8" y="173.5" font-size="12.6" textLength="26.4" lengthAdjust="spacingAndGlyphs" font-family="Liberation Sans" fill="#363636">Alzey</text>
<text x="580.7" y="196.5" font-size="12.6" textLength="49.4" lengthAdjust="spacingAndGlyphs" font-family="Liberation Sans" fill="none" stroke="#ffffff" stroke-opacity="0.8" stroke-width="2.2" stroke-linejoin="round">Bensheim</text>
<text x="580.7" y="196.5" font-size="12.6" textLength="49.4" lengthAdjust="spacingAndGlyphs" font-family="Liberation Sans" fill="#363636">Bensheim</text>
<text x="658.5" y="196.5" font-size="12.6" textLength="57.3" lengthAdjust="spacingAndGlyphs" font-family="Liberation Sans" fill="none" stroke="#ffffff" stroke-opacity="0.8" stroke-width="2.2" stroke-linejoin="round">Michelstadt</text>
<text x="658.5" y="196.5" font-size="12.6" textLength="57.3" lengthAdjust="spacingAndGlyphs" font-family="Liberation Sans" fill="#363636">Michelstadt</text>
<text x="1086.0" y="3.5" font-size="12.6" textLength="36.7" lengthAdjust="spacingAndGlyphs" font-family="Liberation Sans" fill="none" stroke="#ffffff" stroke-opacity="0.8" stroke-width="2.2" stroke-linejoin="round">Coburg</text>
<text x="1086.0" y="3.5" font-size="12.6" textLength="36.7" lengthAdjust="spacingAndGlyphs" font-family="Liberation Sans" fill="#363636">Coburg</text>
<text x="880.3" y="22.5" font-size="12.6" textLength="70.9" lengthAdjust="spacingAndGlyphs" font-family="Liberation Sans" fill="none" stroke="#ffffff" stroke-opacity="0.8" stroke-width="2.2" stroke-linejoin="round">Bad Kissingen</text>
<text x="880.3" y="22.5" font-size="12.6" textLength="70.9" lengthAdjust="spacingAndGlyphs" font-family="Liberation Sans" fill="#363636">Bad Kissingen</text>
<text x="1053.6" y="59.4" font-size="12.6" textLength="29.9" lengthAdjust="spacingAndGlyphs" font-family="Liberation Sans" fill="none" stroke="#ffffff" stroke-opacity="0.8" stroke-width="2.2" stroke-linejoin="round">Ebern</text>
<text x="1053.6" y="59.4" font-size="12.6" textLength="29.9" lengthAdjust="spacingAndGlyphs" font-family="Liberation Sans" fill="#363636">Ebern</text>
<text x="1182.6" y="57.0" font-size="12.6" textLength="50.6" lengthAdjust="spacingAndGlyphs" font-family="Liberation Sans" fill="none" stroke="#ffffff" stroke-opacity="0.8" stroke-width="2.2" stroke-linejoin="round">Kulmbach</text>
<text x="1182.6" y="57.0" font-size="12.6" textLength="50.6" lengthAdjust="spacingAndGlyphs" font-family="Liberation Sans" fill="#363636">Kulmbach</text>
<text x="1253.0" y="27.3" font-size="12.6" textLength="49.0" lengthAdjust="spacingAndGlyphs" font-family="Liberation Sans" fill="none" stroke="#ffffff" stroke-opacity="0.8" stroke-width="2.2" stroke-linejoin="round">München</text>
<text x="1253.0" y="27.3" font-size="12.6" textLength="49.0" lengthAdjust="spacingAndGlyphs" font-family="Liberation Sans" fill="#363636">München</text>
<text x="919.0" y="73.9" font-size="12.6" textLength="60.0" lengthAdjust="spacingAndGlyphs" font-family="Liberation Sans" fill="none" stroke="#ffffff" stroke-opacity="0.8" stroke-width="2.2" stroke-linejoin="round">Schweinfurt</text>
<text x="919.0" y="73.9" font-size="12.6" textLength="60.0" lengthAdjust="spacingAndGlyphs" font-family="Liberation Sans" fill="#363636">Schweinfurt</text>
<text x="871.7" y="97.9" font-size="12.6" textLength="41.0" lengthAdjust="spacingAndGlyphs" font-family="Liberation Sans" fill="none" stroke="#ffffff" stroke-opacity="0.8" stroke-width="2.2" stroke-linejoin="round">Arnstein</text>
<text x="871.7" y="97.9" font-size="12.6" textLength="41.0" lengthAdjust="spacingAndGlyphs" font-family="Liberation Sans" fill="#363636">Arnstein</text>
<text x="1096.9" y="98.0" font-size="12.6" textLength="45.3" lengthAdjust="spacingAndGlyphs" font-family="Liberation Sans" fill="none" stroke="#ffffff" stroke-opacity="0.8" stroke-width="2.2" stroke-linejoin="round">Scheßlitz</text>
<text x="1096.9" y="98.0" font-size="12.6" textLength="45.3" lengthAdjust="spacingAndGlyphs" font-family="Liberation Sans" fill="#363636">Scheßlitz</text>
<text x="1213.0" y="109.3" font-size="12.6" textLength="44.3" lengthAdjust="spacingAndGlyphs" font-family="Liberation Sans" fill="none" stroke="#ffffff" stroke-opacity="0.8" stroke-width="2.2" stroke-linejoin="round">Bayreuth</text>
<text x="1213.0" y="109.3" font-size="12.6" textLength="44.3" lengthAdjust="spacingAndGlyphs" font-family="Liberation Sans" fill="#363636">Bayreuth</text>
<text x="1070.0" y="126.5" font-size="12.6" textLength="41.3" lengthAdjust="spacingAndGlyphs" font-family="Liberation Sans" fill="none" stroke="#ffffff" stroke-opacity="0.8" stroke-width="2.2" stroke-linejoin="round">Bamberg</text>
<text x="1070.0" y="126.5" font-size="12.6" textLength="41.3" lengthAdjust="spacingAndGlyphs" font-family="Liberation Sans" fill="#363636">Bamberg</text>
<text x="1224.4" y="141.5" font-size="12.6" textLength="42.5" lengthAdjust="spacingAndGlyphs" font-family="Liberation Sans" fill="none" stroke="#ffffff" stroke-opacity="0.8" stroke-width="2.2" stroke-linejoin="round">Creußen</text>
<text x="1224.4" y="141.5" font-size="12.6" textLength="42.5" lengthAdjust="spacingAndGlyphs" font-family="Liberation Sans" fill="#363636">Creußen</text>
<text x="855.8" y="156.5" font-size="14" textLength="56.9" lengthAdjust="spacingAndGlyphs" font-family="Liberation Sans" fill="none" stroke="#ffffff" stroke-opacity="0.8" stroke-width="2.2" stroke-linejoin="round">Würzburg</text>
<text x="855.8" y="156.5" font-size="14" textLength="56.9" lengthAdjust="spacingAndGlyphs" font-family="Liberation Sans" fill="#363636">Würzburg</text>
<text x="1209.2" y="170.0" font-size="12.6" textLength="36.8" lengthAdjust="spacingAndGlyphs" font-family="Liberation Sans" fill="none" stroke="#ffffff" stroke-opacity="0.8" stroke-width="2.2" stroke-linejoin="round">Pegnitz</text>
<text x="1209.2" y="170.0" font-size="12.6" textLength="36.8" lengthAdjust="spacingAndGlyphs" font-family="Liberation Sans" fill="#363636">Pegnitz</text>
<text x="1046.8" y="174.0" font-size="12.6" textLength="49.3" lengthAdjust="spacingAndGlyphs" font-family="Liberation Sans" fill="none" stroke="#ffffff" stroke-opacity="0.8" stroke-width="2.2" stroke-linejoin="round">Höchstadt</text>
<text x="1046.8" y="174.0" font-size="12.6" textLength="49.3" lengthAdjust="spacingAndGlyphs" font-family="Liberation Sans" fill="#363636">Höchstadt</text>
<text x="1040.5" y="187.7" font-size="12.6" textLength="60.7" lengthAdjust="spacingAndGlyphs" font-family="Liberation Sans" fill="none" stroke="#ffffff" stroke-opacity="0.8" stroke-width="2.2" stroke-linejoin="round">an der Aisch</text>
<text x="1040.5" y="187.7" font-size="12.6" textLength="60.7" lengthAdjust="spacingAndGlyphs" font-family="Liberation Sans" fill="#363636">an der Aisch</text>
<text x="936.0" y="186.5" font-size="12.6" textLength="36.7" lengthAdjust="spacingAndGlyphs" font-family="Liberation Sans" fill="none" stroke="#ffffff" stroke-opacity="0.8" stroke-width="2.2" stroke-linejoin="round">Iphofen</text>
<text x="936.0" y="186.5" font-size="12.6" textLength="36.7" lengthAdjust="spacingAndGlyphs" font-family="Liberation Sans" fill="#363636">Iphofen</text>
<text x="999.2" y="214.5" font-size="12.6" textLength="59.0" lengthAdjust="spacingAndGlyphs" font-family="Liberation Sans" fill="none" stroke="#ffffff" stroke-opacity="0.8" stroke-width="2.2" stroke-linejoin="round">Neustadt an</text>
<text x="999.2" y="214.5" font-size="12.6" textLength="59.0" lengthAdjust="spacingAndGlyphs" font-family="Liberation Sans" fill="#363636">Neustadt an</text>
<text x="-31.0" y="233.0" font-size="12.6" textLength="56.4" lengthAdjust="spacingAndGlyphs" font-family="Liberation Sans" fill="none" stroke="#ffffff" stroke-opacity="0.8" stroke-width="2.2" stroke-linejoin="round">Dudelange</text>
<text x="-31.0" y="233.0" font-size="12.6" textLength="56.4" lengthAdjust="spacingAndGlyphs" font-family="Liberation Sans" fill="#363636">Dudelange</text>
<text x="164.8" y="273.0" font-size="12.6" textLength="33.5" lengthAdjust="spacingAndGlyphs" font-family="Liberation Sans" fill="none" stroke="#ffffff" stroke-opacity="0.8" stroke-width="2.2" stroke-linejoin="round">Merzig</text>
<text x="164.8" y="273.0" font-size="12.6" textLength="33.5" lengthAdjust="spacingAndGlyphs" font-family="Liberation Sans" fill="#363636">Merzig</text>
<text x="261.2" y="266.4" font-size="12.6" textLength="68.4" lengthAdjust="spacingAndGlyphs" font-family="Liberation Sans" fill="none" stroke="#ffffff" stroke-opacity="0.8" stroke-width="2.2" stroke-linejoin="round">Sankt Wendel</text>
<text x="261.2" y="266.4" font-size="12.6" textLength="68.4" lengthAdjust="spacingAndGlyphs" font-family="Liberation Sans" fill="#363636">Sankt Wendel</text>
<text x="380.3" y="272.7" font-size="14.5" textLength="85.0" lengthAdjust="spacingAndGlyphs" font-family="Liberation Sans" fill="none" stroke="#ffffff" stroke-opacity="0.8" stroke-width="2.2" stroke-linejoin="round">Kaiserslautern</text>
<text x="380.3" y="272.7" font-size="14.5" textLength="85.0" lengthAdjust="spacingAndGlyphs" font-family="Liberation Sans" fill="#222">Kaiserslautern</text>
<text x="38.5" y="310.0" font-size="12.6" textLength="42.1" lengthAdjust="spacingAndGlyphs" font-family="Liberation Sans" fill="none" stroke="#ffffff" stroke-opacity="0.8" stroke-width="2.2" stroke-linejoin="round">Hayange</text>
<text x="38.5" y="310.0" font-size="12.6" textLength="42.1" lengthAdjust="spacingAndGlyphs" font-family="Liberation Sans" fill="#363636">Hayange</text>
<text x="306.3" y="313.5" font-size="12.6" textLength="46.9" lengthAdjust="spacingAndGlyphs" font-family="Liberation Sans" fill="none" stroke="#ffffff" stroke-opacity="0.8" stroke-width="2.2" stroke-linejoin="round">Homburg</text>
<text x="306.3" y="313.5" font-size="12.6" textLength="46.9" lengthAdjust="spacingAndGlyphs" font-family="Liberation Sans" fill="#363636">Homburg</text>
<text x="221.1" y="341.2" font-size="14.5" textLength="74.3" lengthAdjust="spacingAndGlyphs" font-family="Liberation Sans" fill="none" stroke="#ffffff" stroke-opacity="0.8" stroke-width="2.2" stroke-linejoin="round">Saarbrücken</text>
<text x="221.1" y="341.2" font-size="14.5" textLength="74.3" lengthAdjust="spacingAndGlyphs" font-family="Liberation Sans" fill="#222">Saarbrücken</text>
<text x="362.0" y="353.9" font-size="12.6" textLength="54.3" lengthAdjust="spacingAndGlyphs" font-family="Liberation Sans" fill="none" stroke="#ffffff" stroke-opacity="0.8" stroke-width="2.2" stroke-linejoin="round">Pirmasens</text>
<text x="362.0" y="353.9" font-size="12.6" textLength="54.3" lengthAdjust="spacingAndGlyphs" font-family="Liberation Sans" fill="#363636">Pirmasens</text>
<text x="7.1" y="366.8" font-size="12.6" textLength="27.9" lengthAdjust="spacingAndGlyphs" font-family="Liberation Sans" fill="none" stroke="#ffffff" stroke-opacity="0.8" stroke-width="2.2" stroke-linejoin="round">Jarny</text>
<text x="7.1" y="366.8" font-size="12.6" textLength="27.9" lengthAdjust="spacingAndGlyphs" font-family="Liberation Sans" fill="#363636">Jarny</text>
<text x="69.7" y="378.5" font-size="14.5" textLength="27.2" lengthAdjust="spacingAndGlyphs" font-family="Liberation Sans" fill="none" stroke="#ffffff" stroke-opacity="0.8" stroke-width="2.2" stroke-linejoin="round">Metz</text>
<text x="69.7" y="378.5" font-size="14.5" textLength="27.2" lengthAdjust="spacingAndGlyphs" font-family="Liberation Sans" fill="#222">Metz</text>
<text x="167.3" y="385.3" font-size="12.6" textLength="57.6" lengthAdjust="spacingAndGlyphs" font-family="Liberation Sans" fill="none" stroke="#ffffff" stroke-opacity="0.8" stroke-width="2.2" stroke-linejoin="round">Saint-Avold</text>
<text x="167.3" y="385.3" font-size="12.6" textLength="57.6" lengthAdjust="spacingAndGlyphs" font-family="Liberation Sans" fill="#363636">Saint-Avold</text>
<text x="235.3" y="383.5" font-size="12.6" textLength="77.8" lengthAdjust="spacingAndGlyphs" font-family="Liberation Sans" fill="none" stroke="#ffffff" stroke-opacity="0.8" stroke-width="2.2" stroke-linejoin="round">Sarreguemines</text>
<text x="235.3" y="383.5" font-size="12.6" textLength="77.8" lengthAdjust="spacingAndGlyphs" font-family="Liberation Sans" fill="#363636">Sarreguemines</text>
<text x="334.2" y="402.6" font-size="12.6" textLength="31.4" lengthAdjust="spacingAndGlyphs" font-family="Liberation Sans" fill="none" stroke="#ffffff" stroke-opacity="0.8" stroke-width="2.2" stroke-linejoin="round">Bitche</text>
<text x="334.2" y="402.6" font-size="12.6" textLength="31.4" lengthAdjust="spacingAndGlyphs" font-family="Liberation Sans" fill="#363636">Bitche</text>
<text x="541.4" y="257.5" font-size="14.5" textLength="60.8" lengthAdjust="spacingAndGlyphs" font-family="Liberation Sans" fill="none" stroke="#ffffff" stroke-opacity="0.8" stroke-width="2.2" stroke-linejoin="round">Mannheim</text>
<text x="541.4" y="257.5" font-size="14.5" textLength="60.8" lengthAdjust="spacingAndGlyphs" font-family="Liberation Sans" fill="#222">Mannheim</text>
<text x="736.6" y="248.4" font-size="12.6" textLength="36.8" lengthAdjust="spacingAndGlyphs" font-family="Liberation Sans" fill="none" stroke="#ffffff" stroke-opacity="0.8" stroke-width="2.2" stroke-linejoin="round">Buchen</text>
<text x="736.6" y="248.4" font-size="12.6" textLength="36.8" lengthAdjust="spacingAndGlyphs" font-family="Liberation Sans" fill="#363636">Buchen</text>
<text x="840.0" y="243.0" font-size="12.6" textLength="20.0" lengthAdjust="spacingAndGlyphs" font-family="Liberation Sans" fill="none" stroke="#ffffff" stroke-opacity="0.8" stroke-width="2.2" stroke-linejoin="round">Bad</text>
<text x="840.0" y="243.0" font-size="12.6" textLength="20.0" lengthAdjust="spacingAndGlyphs" font-family="Liberation Sans" fill="#363636">Bad</text>
<text x="817.7" y="258.5" font-size="12.6" textLength="65.9" lengthAdjust="spacingAndGlyphs" font-family="Liberation Sans" fill="none" stroke="#ffffff" stroke-opacity="0.8" stroke-width="2.2" stroke-linejoin="round">Mergentheim</text>
<text x="817.7" y="258.5" font-size="12.6" textLength="65.9" lengthAdjust="spacingAndGlyphs" font-family="Liberation Sans" fill="#363636">Mergentheim</text>
<text x="658.8" y="267.7" font-size="12.6" textLength="47.4" lengthAdjust="spacingAndGlyphs" font-family="Liberation Sans" fill="none" stroke="#ffffff" stroke-opacity="0.8" stroke-width="2.2" stroke-linejoin="round">Eberbach</text>
<text x="658.8" y="267.7" font-size="12.6" textLength="47.4" lengthAdjust="spacingAndGlyphs" font-family="Liberation Sans" fill="#363636">Eberbach</text>
<text x="694.8" y="303.7" font-size="12.6" textLength="43.6" lengthAdjust="spacingAndGlyphs" font-family="Liberation Sans" fill="none" stroke="#ffffff" stroke-opacity="0.8" stroke-width="2.2" stroke-linejoin="round">Mosbach</text>
<text x="694.8" y="303.7" font-size="12.6" textLength="43.6" lengthAdjust="spacingAndGlyphs" font-family="Liberation Sans" fill="#363636">Mosbach</text>
<text x="440.0" y="338.7" font-size="12.6" textLength="50.7" lengthAdjust="spacingAndGlyphs" font-family="Liberation Sans" fill="none" stroke="#ffffff" stroke-opacity="0.8" stroke-width="2.2" stroke-linejoin="round">Annweiler</text>
<text x="440.0" y="338.7" font-size="12.6" textLength="50.7" lengthAdjust="spacingAndGlyphs" font-family="Liberation Sans" fill="#363636">Annweiler</text>
<text x="440.0" y="352.4" font-size="12.6" textLength="51.5" lengthAdjust="spacingAndGlyphs" font-family="Liberation Sans" fill="none" stroke="#ffffff" stroke-opacity="0.8" stroke-width="2.2" stroke-linejoin="round">am Trifels</text>
<text x="440.0" y="352.4" font-size="12.6" textLength="51.5" lengthAdjust="spacingAndGlyphs" font-family="Liberation Sans" fill="#363636">am Trifels</text>
<text x="555.0" y="338.0" font-size="12.6" textLength="54.8" lengthAdjust="spacingAndGlyphs" font-family="Liberation Sans" fill="none" stroke="#ffffff" stroke-opacity="0.8" stroke-width="2.2" stroke-linejoin="round">Waghäusel</text>
<text x="555.0" y="338.0" font-size="12.6" textLength="54.8" lengthAdjust="spacingAndGlyphs" font-family="Liberation Sans" fill="#363636">Waghäusel</text>
<text x="636.0" y="335.6" font-size="12.6" textLength="46.0" lengthAdjust="spacingAndGlyphs" font-family="Liberation Sans" fill="none" stroke="#ffffff" stroke-opacity="0.8" stroke-width="2.2" stroke-linejoin="round">Sinsheim</text>
<text x="636.0" y="335.6" font-size="12.6" textLength="46.0" lengthAdjust="spacingAndGlyphs" font-family="Liberation Sans" fill="#363636">Sinsheim</text>
<text x="769.5" y="353.4" font-size="12.6" textLength="46.2" lengthAdjust="spacingAndGlyphs" font-family="Liberation Sans" fill="none" stroke="#ffffff" stroke-opacity="0.8" stroke-width="2.2" stroke-linejoin="round">Öhringen</text>
<text x="769.5" y="353.4" font-size="12.6" textLength="46.2" lengthAdjust="spacingAndGlyphs" font-family="Liberation Sans" fill="#363636">Öhringen</text>
<text x="704.1" y="370.9" font-size="14.5" textLength="56.6" lengthAdjust="spacingAndGlyphs" font-family="Liberation Sans" fill="none" stroke="#ffffff" stroke-opacity="0.8" stroke-width="2.2" stroke-linejoin="round">Heilbronn</text>
<text x="704.1" y="370.9" font-size="14.5" textLength="56.6" lengthAdjust="spacingAndGlyphs" font-family="Liberation Sans" fill="#222">Heilbronn</text>
<text x="577.4" y="378.5" font-size="12.6" textLength="45.1" lengthAdjust="spacingAndGlyphs" font-family="Liberation Sans" fill="none" stroke="#ffffff" stroke-opacity="0.8" stroke-width="2.2" stroke-linejoin="round">Bruchsal</text>
<text x="577.4" y="378.5" font-size="12.6" textLength="45.1" lengthAdjust="spacingAndGlyphs" font-family="Liberation Sans" fill="#363636">Bruchsal</text>
<text x="642.8" y="372.5" font-size="12.6" textLength="46.4" lengthAdjust="spacingAndGlyphs" font-family="Liberation Sans" fill="none" stroke="#ffffff" stroke-opacity="0.8" stroke-width="2.2" stroke-linejoin="round">Eppingen</text>
<text x="642.8" y="372.5" font-size="12.6" textLength="46.4" lengthAdjust="spacingAndGlyphs" font-family="Liberation Sans" fill="#363636">Eppingen</text>
<text x="801.2" y="382.3" font-size="12.6" textLength="82.4" lengthAdjust="spacingAndGlyphs" font-family="Liberation Sans" fill="none" stroke="#ffffff" stroke-opacity="0.8" stroke-width="2.2" stroke-linejoin="round">Schwäbisch Hall</text>
<text x="801.2" y="382.3" font-size="12.6" textLength="82.4" lengthAdjust="spacingAndGlyphs" font-family="Liberation Sans" fill="#363636">Schwäbisch Hall</text>
<text x="530.0" y="415.2" font-size="14.5" textLength="57.0" lengthAdjust="spacingAndGlyphs" font-family="Liberation Sans" fill="none" stroke="#ffffff" stroke-opacity="0.8" stroke-width="2.2" stroke-linejoin="round">Karlsruhe</text>
<text x="530.0" y="415.2" font-size="14.5" textLength="57.0" lengthAdjust="spacingAndGlyphs" font-family="Liberation Sans" fill="#222">Karlsruhe</text>
<text x="1005.6" y="228.0" font-size="12.6" textLength="46.2" lengthAdjust="spacingAndGlyphs" font-family="Liberation Sans" fill="none" stroke="#ffffff" stroke-opacity="0.8" stroke-width="2.2" stroke-linejoin="round">der Aisch</text>
<text x="1005.6" y="228.0" font-size="12.6" textLength="46.2" lengthAdjust="spacingAndGlyphs" font-family="Liberation Sans" fill="#363636">der Aisch</text>
<text x="949.4" y="254.9" font-size="12.6" textLength="77.6" lengthAdjust="spacingAndGlyphs" font-family="Liberation Sans" fill="none" stroke="#ffffff" stroke-opacity="0.8" stroke-width="2.2" stroke-linejoin="round">Bad Windsheim</text>
<text x="949.4" y="254.9" font-size="12.6" textLength="77.6" lengthAdjust="spacingAndGlyphs" font-family="Liberation Sans" fill="#363636">Bad Windsheim</text>
<text x="907.7" y="280.0" font-size="12.6" textLength="58.6" lengthAdjust="spacingAndGlyphs" font-family="Liberation Sans" fill="none" stroke="#ffffff" stroke-opacity="0.8" stroke-width="2.2" stroke-linejoin="round">Rothenburg</text>
<text x="907.7" y="280.0" font-size="12.6" textLength="58.6" lengthAdjust="spacingAndGlyphs" font-family="Liberation Sans" fill="#363636">Rothenburg</text>
<text x="902.6" y="294.0" font-size="12.6" textLength="69.1" lengthAdjust="spacingAndGlyphs" font-family="Liberation Sans" fill="none" stroke="#ffffff" stroke-opacity="0.8" stroke-width="2.2" stroke-linejoin="round">ob der Tauber</text>
<text x="902.6" y="294.0" font-size="12.6" textLength="69.1" lengthAdjust="spacingAndGlyphs" font-family="Liberation Sans" fill="#363636">ob der Tauber</text>
<text x="1094.9" y="267.0" font-size="14.5" textLength="67.8" lengthAdjust="spacingAndGlyphs" font-family="Liberation Sans" fill="none" stroke="#ffffff" stroke-opacity="0.8" stroke-width="2.2" stroke-linejoin="round">Nuremberg</text>
<text x="1094.9" y="267.0" font-size="14.5" textLength="67.8" lengthAdjust="spacingAndGlyphs" font-family="Liberation Sans" fill="#222">Nuremberg</text>
<text x="1088.0" y="311.6" font-size="12.6" textLength="56.7" lengthAdjust="spacingAndGlyphs" font-family="Liberation Sans" fill="none" stroke="#ffffff" stroke-opacity="0.8" stroke-width="2.2" stroke-linejoin="round">Schwabach</text>
<text x="1088.0" y="311.6" font-size="12.6" textLength="56.7" lengthAdjust="spacingAndGlyphs" font-family="Liberation Sans" fill="#363636">Schwabach</text>
<text x="1179.6" y="313.6" font-size="12.6" textLength="62.0" lengthAdjust="spacingAndGlyphs" font-family="Liberation Sans" fill="none" stroke="#ffffff" stroke-opacity="0.8" stroke-width="2.2" stroke-linejoin="round">Neumarkt in</text>
<text x="1179.6" y="313.6" font-size="12.6" textLength="62.0" lengthAdjust="spacingAndGlyphs" font-family="Liberation Sans" fill="#363636">Neumarkt in</text>
<text x="1176.3" y="327.5" font-size="12.6" textLength="67.7" lengthAdjust="spacingAndGlyphs" font-family="Liberation Sans" fill="none" stroke="#ffffff" stroke-opacity="0.8" stroke-width="2.2" stroke-linejoin="round">der Oberpfalz</text>
<text x="1176.3" y="327.5" font-size="12.6" textLength="67.7" lengthAdjust="spacingAndGlyphs" font-family="Liberation Sans" fill="#363636">der Oberpfalz</text>
<text x="1000.0" y="320.4" font-size="12.6" textLength="42.2" lengthAdjust="spacingAndGlyphs" font-family="Liberation Sans" fill="none" stroke="#ffffff" stroke-opacity="0.8" stroke-width="2.2" stroke-linejoin="round">Ansbach</text>
<text x="1000.0" y="320.4" font-size="12.6" textLength="42.2" lengthAdjust="spacingAndGlyphs" font-family="Liberation Sans" fill="#363636">Ansbach</text>
<text x="933.5" y="362.5" font-size="12.6" textLength="72.1" lengthAdjust="spacingAndGlyphs" font-family="Liberation Sans" fill="none" stroke="#ffffff" stroke-opacity="0.8" stroke-width="2.2" stroke-linejoin="round">Feuchtwangen</text>
<text x="933.5" y="362.5" font-size="12.6" textLength="72.1" lengthAdjust="spacingAndGlyphs" font-family="Liberation Sans" fill="#363636">Feuchtwangen</text>
<text x="1242.8" y="367.2" font-size="12.6" textLength="47.2" lengthAdjust="spacingAndGlyphs" font-family="Liberation Sans" fill="none" stroke="#ffffff" stroke-opacity="0.8" stroke-width="2.2" stroke-linejoin="round">Parsberg</text>
<text x="1242.8" y="367.2" font-size="12.6" textLength="47.2" lengthAdjust="spacingAndGlyphs" font-family="Liberation Sans" fill="#363636">Parsberg</text>
<text x="938.0" y="396.6" font-size="12.6" textLength="60.0" lengthAdjust="spacingAndGlyphs" font-family="Liberation Sans" fill="none" stroke="#ffffff" stroke-opacity="0.8" stroke-width="2.2" stroke-linejoin="round">Dinkelsbühl</text>
<text x="938.0" y="396.6" font-size="12.6" textLength="60.0" lengthAdjust="spacingAndGlyphs" font-family="Liberation Sans" fill="#363636">Dinkelsbühl</text>
<text x="1075.9" y="395.0" font-size="12.6" textLength="60.1" lengthAdjust="spacingAndGlyphs" font-family="Liberation Sans" fill="none" stroke="#ffffff" stroke-opacity="0.8" stroke-width="2.2" stroke-linejoin="round">Weißenburg</text>
<text x="1075.9" y="395.0" font-size="12.6" textLength="60.1" lengthAdjust="spacingAndGlyphs" font-family="Liberation Sans" fill="#363636">Weißenburg</text>
<text x="1082.7" y="409.2" font-size="12.6" textLength="46.8" lengthAdjust="spacingAndGlyphs" font-family="Liberation Sans" fill="none" stroke="#ffffff" stroke-opacity="0.8" stroke-width="2.2" stroke-linejoin="round">in Bayern</text>
<text x="1082.7" y="409.2" font-size="12.6" textLength="46.8" lengthAdjust="spacingAndGlyphs" font-family="Liberation Sans" fill="#363636">in Bayern</text>
<text x="1187.7" y="407.7" font-size="12.6" textLength="51.3" lengthAdjust="spacingAndGlyphs" font-family="Liberation Sans" fill="none" stroke="#ffffff" stroke-opacity="0.8" stroke-width="2.2" stroke-linejoin="round">Beilngries</text>
<text x="1187.7" y="407.7" font-size="12.6" textLength="51.3" lengthAdjust="spacingAndGlyphs" font-family="Liberation Sans" fill="#363636">Beilngries</text>
<text x="1229.7" y="431.2" font-size="12.6" textLength="60.3" lengthAdjust="spacingAndGlyphs" font-family="Liberation Sans" fill="none" stroke="#ffffff" stroke-opacity="0.8" stroke-width="2.2" stroke-linejoin="round">Riedenburg</text>
<text x="1229.7" y="431.2" font-size="12.6" textLength="60.3" lengthAdjust="spacingAndGlyphs" font-family="Liberation Sans" fill="#363636">Riedenburg</text>
<text x="401.9" y="478.5" font-size="12.6" textLength="50.1" lengthAdjust="spacingAndGlyphs" font-family="Liberation Sans" fill="none" stroke="#ffffff" stroke-opacity="0.8" stroke-width="2.2" stroke-linejoin="round">Haguenau</text>
<text x="401.9" y="478.5" font-size="12.6" textLength="50.1" lengthAdjust="spacingAndGlyphs" font-family="Liberation Sans" fill="#363636">Haguenau</text>
<text x="240.9" y="504.0" font-size="12.6" textLength="57.8" lengthAdjust="spacingAndGlyphs" font-family="Liberation Sans" fill="none" stroke="#ffffff" stroke-opacity="0.8" stroke-width="2.2" stroke-linejoin="round">Sarrebourg</text>
<text x="240.9" y="504.0" font-size="12.6" textLength="57.8" lengthAdjust="spacingAndGlyphs" font-family="Liberation Sans" fill="#363636">Sarrebourg</text>
<text x="67.2" y="517.3" font-size="14.5" textLength="35.5" lengthAdjust="spacingAndGlyphs" font-family="Liberation Sans" fill="none" stroke="#ffffff" stroke-opacity="0.8" stroke-width="2.2" stroke-linejoin="round">Nancy</text>
<text x="67.2" y="517.3" font-size="14.5" textLength="35.5" lengthAdjust="spacingAndGlyphs" font-family="Liberation Sans" fill="#222">Nancy</text>
<text x="12.2" y="524.2" font-size="12.6" textLength="21.5" lengthAdjust="spacingAndGlyphs" font-family="Liberation Sans" fill="none" stroke="#ffffff" stroke-opacity="0.8" stroke-width="2.2" stroke-linejoin="round">Toul</text>
<text x="12.2" y="524.2" font-size="12.6" textLength="21.5" lengthAdjust="spacingAndGlyphs" font-family="Liberation Sans" fill="#363636">Toul</text>
<text x="128.0" y="551.6" font-size="12.6" textLength="45.7" lengthAdjust="spacingAndGlyphs" font-family="Liberation Sans" fill="none" stroke="#ffffff" stroke-opacity="0.8" stroke-width="2.2" stroke-linejoin="round">Lunéville</text>
<text x="128.0" y="551.6" font-size="12.6" textLength="45.7" lengthAdjust="spacingAndGlyphs" font-family="Liberation Sans" fill="#363636">Lunéville</text>
<text x="386.7" y="552.8" font-size="14.5" textLength="64.1" lengthAdjust="spacingAndGlyphs" font-family="Liberation Sans" fill="none" stroke="#ffffff" stroke-opacity="0.8" stroke-width="2.2" stroke-linejoin="round">Strasbourg</text>
<text x="386.7" y="552.8" font-size="14.5" textLength="64.1" lengthAdjust="spacingAndGlyphs" font-family="Liberation Sans" fill="#222">Strasbourg</text>
<text x="342.3" y="592.6" font-size="12.6" textLength="39.3" lengthAdjust="spacingAndGlyphs" font-family="Liberation Sans" fill="none" stroke="#ffffff" stroke-opacity="0.8" stroke-width="2.2" stroke-linejoin="round">Obernai</text>
<text x="342.3" y="592.6" font-size="12.6" textLength="39.3" lengthAdjust="spacingAndGlyphs" font-family="Liberation Sans" fill="#363636">Obernai</text>
<text x="85.7" y="621.8" font-size="12.6" textLength="45.6" lengthAdjust="spacingAndGlyphs" font-family="Liberation Sans" fill="none" stroke="#ffffff" stroke-opacity="0.8" stroke-width="2.2" stroke-linejoin="round">Charmes</text>
<text x="85.7" y="621.8" font-size="12.6" textLength="45.6" lengthAdjust="spacingAndGlyphs" font-family="Liberation Sans" fill="#363636">Charmes</text>
<text x="-28.0" y="627.6" font-size="12.6" textLength="40.0" lengthAdjust="spacingAndGlyphs" font-family="Liberation Sans" fill="none" stroke="#ffffff" stroke-opacity="0.8" stroke-width="2.2" stroke-linejoin="round">Chateau</text>
<text x="-28.0" y="627.6" font-size="12.6" textLength="40.0" lengthAdjust="spacingAndGlyphs" font-family="Liberation Sans" fill="#363636">Chateau</text>
<text x="221.9" y="635.7" font-size="12.6" textLength="51.1" lengthAdjust="spacingAndGlyphs" font-family="Liberation Sans" fill="none" stroke="#ffffff" stroke-opacity="0.8" stroke-width="2.2" stroke-linejoin="round">Saint-Dié-</text>
<text x="221.9" y="635.7" font-size="12.6" textLength="51.1" lengthAdjust="spacingAndGlyphs" font-family="Liberation Sans" fill="#363636">Saint-Dié-</text>
<text x="219.3" y="648.0" font-size="12.6" textLength="57.1" lengthAdjust="spacingAndGlyphs" font-family="Liberation Sans" fill="none" stroke="#ffffff" stroke-opacity="0.8" stroke-width="2.2" stroke-linejoin="round">des-Vosges</text>
<text x="219.3" y="648.0" font-size="12.6" textLength="57.1" lengthAdjust="spacingAndGlyphs" font-family="Liberation Sans" fill="#363636">des-Vosges</text>
<text x="336.0" y="658.0" font-size="12.6" textLength="40.0" lengthAdjust="spacingAndGlyphs" font-family="Liberation Sans" fill="none" stroke="#ffffff" stroke-opacity="0.8" stroke-width="2.2" stroke-linejoin="round">Sélestat</text>
<text x="336.0" y="658.0" font-size="12.6" textLength="40.0" lengthAdjust="spacingAndGlyphs" font-family="Liberation Sans" fill="#363636">Sélestat</text>
<text x="592.0" y="453.2" font-size="14.5" textLength="59.7" lengthAdjust="spacingAndGlyphs" font-family="Liberation Sans" fill="none" stroke="#ffffff" stroke-opacity="0.8" stroke-width="2.2" stroke-linejoin="round">Pforzheim</text>
<text x="592.0" y="453.2" font-size="14.5" textLength="59.7" lengthAdjust="spacingAndGlyphs" font-family="Liberation Sans" fill="#222">Pforzheim</text>
<text x="489.4" y="497.8" font-size="12.6" textLength="68.4" lengthAdjust="spacingAndGlyphs" font-family="Liberation Sans" fill="none" stroke="#ffffff" stroke-opacity="0.8" stroke-width="2.2" stroke-linejoin="round">Baden-Baden</text>
<text x="489.4" y="497.8" font-size="12.6" textLength="68.4" lengthAdjust="spacingAndGlyphs" font-family="Liberation Sans" fill="#363636">Baden-Baden</text>
<text x="628.0" y="548.8" font-size="12.6" textLength="58.4" lengthAdjust="spacingAndGlyphs" font-family="Liberation Sans" fill="none" stroke="#ffffff" stroke-opacity="0.8" stroke-width="2.2" stroke-linejoin="round">Herrenberg</text>
<text x="628.0" y="548.8" font-size="12.6" textLength="58.4" lengthAdjust="spacingAndGlyphs" font-family="Liberation Sans" fill="#363636">Herrenberg</text>
<text x="699.8" y="582.0" font-size="14.5" textLength="61.6" lengthAdjust="spacingAndGlyphs" font-family="Liberation Sans" fill="none" stroke="#ffffff" stroke-opacity="0.8" stroke-width="2.2" stroke-linejoin="round">Reutlingen</text>
<text x="699.8" y="582.0" font-size="14.5" textLength="61.6" lengthAdjust="spacingAndGlyphs" font-family="Liberation Sans" fill="#222">Reutlingen</text>
<text x="527.4" y="592.1" font-size="12.6" textLength="65.9" lengthAdjust="spacingAndGlyphs" font-family="Liberation Sans" fill="none" stroke="#ffffff" stroke-opacity="0.8" stroke-width="2.2" stroke-linejoin="round">Freudenstadt</text>
<text x="527.4" y="592.1" font-size="12.6" textLength="65.9" lengthAdjust="spacingAndGlyphs" font-family="Liberation Sans" fill="#363636">Freudenstadt</text>
<text x="431.0" y="618.8" font-size="12.6" textLength="28.0" lengthAdjust="spacingAndGlyphs" font-family="Liberation Sans" fill="none" stroke="#ffffff" stroke-opacity="0.8" stroke-width="2.2" stroke-linejoin="round">Lahr/</text>
<text x="431.0" y="618.8" font-size="12.6" textLength="28.0" lengthAdjust="spacingAndGlyphs" font-family="Liberation Sans" fill="#363636">Lahr/</text>
<text x="412.0" y="632.7" font-size="12.6" textLength="66.0" lengthAdjust="spacingAndGlyphs" font-family="Liberation Sans" fill="none" stroke="#ffffff" stroke-opacity="0.8" stroke-width="2.2" stroke-linejoin="round">Schwarzwald</text>
<text x="412.0" y="632.7" font-size="12.6" textLength="66.0" lengthAdjust="spacingAndGlyphs" font-family="Liberation Sans" fill="#363636">Schwarzwald</text>
<text x="701.0" y="642.8" font-size="12.6" textLength="72.9" lengthAdjust="spacingAndGlyphs" font-family="Liberation Sans" fill="none" stroke="#ffffff" stroke-opacity="0.8" stroke-width="2.2" stroke-linejoin="round">Trochtelfingen</text>
<text x="701.0" y="642.8" font-size="12.6" textLength="72.9" lengthAdjust="spacingAndGlyphs" font-family="Liberation Sans" fill="#363636">Trochtelfingen</text>
<text x="664.3" y="665.0" font-size="12.6" textLength="41.9" lengthAdjust="spacingAndGlyphs" font-family="Liberation Sans" fill="none" stroke="#ffffff" stroke-opacity="0.8" stroke-width="2.2" stroke-linejoin="round">Albstadt</text>
<text x="664.3" y="665.0" font-size="12.6" textLength="41.9" lengthAdjust="spacingAndGlyphs" font-family="Liberation Sans" fill="#363636">Albstadt</text>
<text x="820.3" y="651.0" font-size="12.6" textLength="40.7" lengthAdjust="spacingAndGlyphs" font-family="Liberation Sans" fill="none" stroke="#ffffff" stroke-opacity="0.8" stroke-width="2.2" stroke-linejoin="round">Ehingen</text>
<text x="820.3" y="651.0" font-size="12.6" textLength="40.7" lengthAdjust="spacingAndGlyphs" font-family="Liberation Sans" fill="#363636">Ehingen</text>
<text x="825.3" y="469.9" font-size="12.6" textLength="59.6" lengthAdjust="spacingAndGlyphs" font-family="Liberation Sans" fill="none" stroke="#ffffff" stroke-opacity="0.8" stroke-width="2.2" stroke-linejoin="round">Schwäbisch</text>
<text x="825.3" y="469.9" font-size="12.6" textLength="59.6" lengthAdjust="spacingAndGlyphs" font-family="Liberation Sans" fill="#363636">Schwäbisch</text>
<text x="836.8" y="483.5" font-size="12.6" textLength="36.7" lengthAdjust="spacingAndGlyphs" font-family="Liberation Sans" fill="none" stroke="#ffffff" stroke-opacity="0.8" stroke-width="2.2" stroke-linejoin="round">Gmünd</text>
<text x="836.8" y="483.5" font-size="12.6" textLength="36.7" lengthAdjust="spacingAndGlyphs" font-family="Liberation Sans" fill="#363636">Gmünd</text>
<text x="684.0" y="489.0" font-size="14.5" textLength="66.0" lengthAdjust="spacingAndGlyphs" font-family="Liberation Sans" fill="none" stroke="#ffffff" stroke-opacity="0.8" stroke-width="2.2" stroke-linejoin="round">Stuttgart</text>
<text x="684.0" y="489.0" font-size="14.5" textLength="66.0" lengthAdjust="spacingAndGlyphs" font-family="Liberation Sans" fill="#222">Stuttgart</text>
<text x="904.6" y="472.4" font-size="12.6" textLength="27.8" lengthAdjust="spacingAndGlyphs" font-family="Liberation Sans" fill="none" stroke="#ffffff" stroke-opacity="0.8" stroke-width="2.2" stroke-linejoin="round">Aalen</text>
<text x="904.6" y="472.4" font-size="12.6" textLength="27.8" lengthAdjust="spacingAndGlyphs" font-family="Liberation Sans" fill="#363636">Aalen</text>
<text x="975.2" y="467.3" font-size="12.6" textLength="56.4" lengthAdjust="spacingAndGlyphs" font-family="Liberation Sans" fill="none" stroke="#ffffff" stroke-opacity="0.8" stroke-width="2.2" stroke-linejoin="round">Nördlingen</text>
<text x="975.2" y="467.3" font-size="12.6" textLength="56.4" lengthAdjust="spacingAndGlyphs" font-family="Liberation Sans" fill="#363636">Nördlingen</text>
<text x="1174.5" y="494.4" font-size="14.5" textLength="57.0" lengthAdjust="spacingAndGlyphs" font-family="Liberation Sans" fill="none" stroke="#ffffff" stroke-opacity="0.8" stroke-width="2.2" stroke-linejoin="round">Ingolstadt</text>
<text x="1174.5" y="494.4" font-size="14.5" textLength="57.0" lengthAdjust="spacingAndGlyphs" font-family="Liberation Sans" fill="#222">Ingolstadt</text>
<text x="1035.4" y="510.3" font-size="12.6" textLength="60.7" lengthAdjust="spacingAndGlyphs" font-family="Liberation Sans" fill="none" stroke="#ffffff" stroke-opacity="0.8" stroke-width="2.2" stroke-linejoin="round">Donauwörth</text>
<text x="1035.4" y="510.3" font-size="12.6" textLength="60.7" lengthAdjust="spacingAndGlyphs" font-family="Liberation Sans" fill="#363636">Donauwörth</text>
<text x="901.3" y="510.3" font-size="12.6" textLength="60.0" lengthAdjust="spacingAndGlyphs" font-family="Liberation Sans" fill="none" stroke="#ffffff" stroke-opacity="0.8" stroke-width="2.2" stroke-linejoin="round">Heidenheim</text>
<text x="901.3" y="510.3" font-size="12.6" textLength="60.0" lengthAdjust="spacingAndGlyphs" font-family="Liberation Sans" fill="#363636">Heidenheim</text>
<text x="899.6" y="522.5" font-size="12.6" textLength="63.7" lengthAdjust="spacingAndGlyphs" font-family="Liberation Sans" fill="none" stroke="#ffffff" stroke-opacity="0.8" stroke-width="2.2" stroke-linejoin="round">an der Brenz</text>
<text x="899.6" y="522.5" font-size="12.6" textLength="63.7" lengthAdjust="spacingAndGlyphs" font-family="Liberation Sans" fill="#363636">an der Brenz</text>
<text x="1255.5" y="535.6" font-size="12.6" textLength="56.5" lengthAdjust="spacingAndGlyphs" font-family="Liberation Sans" fill="none" stroke="#ffffff" stroke-opacity="0.8" stroke-width="2.2" stroke-linejoin="round">Mainburg</text>
<text x="1255.5" y="535.6" font-size="12.6" textLength="56.5" lengthAdjust="spacingAndGlyphs" font-family="Liberation Sans" fill="#363636">Mainburg</text>
<text x="975.2" y="541.2" font-size="12.6" textLength="58.9" lengthAdjust="spacingAndGlyphs" font-family="Liberation Sans" fill="none" stroke="#ffffff" stroke-opacity="0.8" stroke-width="2.2" stroke-linejoin="round">Dillingen an</text>
<text x="975.2" y="541.2" font-size="12.6" textLength="58.9" lengthAdjust="spacingAndGlyphs" font-family="Liberation Sans" fill="#363636">Dillingen an</text>
<text x="979.0" y="553.5" font-size="12.6" textLength="51.3" lengthAdjust="spacingAndGlyphs" font-family="Liberation Sans" fill="none" stroke="#ffffff" stroke-opacity="0.8" stroke-width="2.2" stroke-linejoin="round">der Donau</text>
<text x="979.0" y="553.5" font-size="12.6" textLength="51.3" lengthAdjust="spacingAndGlyphs" font-family="Liberation Sans" fill="#363636">der Donau</text>
<text x="1189.2" y="557.6" font-size="12.6" textLength="62.5" lengthAdjust="spacingAndGlyphs" font-family="Liberation Sans" fill="none" stroke="#ffffff" stroke-opacity="0.8" stroke-width="2.2" stroke-linejoin="round">Pfaffenhofen</text>
<text x="1189.2" y="557.6" font-size="12.6" textLength="62.5" lengthAdjust="spacingAndGlyphs" font-family="Liberation Sans" fill="#363636">Pfaffenhofen</text>
<text x="1195.3" y="571.5" font-size="12.6" textLength="50.1" lengthAdjust="spacingAndGlyphs" font-family="Liberation Sans" fill="none" stroke="#ffffff" stroke-opacity="0.8" stroke-width="2.2" stroke-linejoin="round">an der Ilm</text>
<text x="1195.3" y="571.5" font-size="12.6" textLength="50.1" lengthAdjust="spacingAndGlyphs" font-family="Liberation Sans" fill="#363636">an der Ilm</text>
<text x="1056.1" y="563.5" font-size="12.6" textLength="48.1" lengthAdjust="spacingAndGlyphs" font-family="Liberation Sans" fill="none" stroke="#ffffff" stroke-opacity="0.8" stroke-width="2.2" stroke-linejoin="round">Meitingen</text>
<text x="1056.1" y="563.5" font-size="12.6" textLength="48.1" lengthAdjust="spacingAndGlyphs" font-family="Liberation Sans" fill="#363636">Meitingen</text>
<text x="1120.7" y="594.3" font-size="12.6" textLength="38.7" lengthAdjust="spacingAndGlyphs" font-family="Liberation Sans" fill="none" stroke="#ffffff" stroke-opacity="0.8" stroke-width="2.2" stroke-linejoin="round">Aichach</text>
<text x="1120.7" y="594.3" font-size="12.6" textLength="38.7" lengthAdjust="spacingAndGlyphs" font-family="Liberation Sans" fill="#363636">Aichach</text>
<text x="933.7" y="594.5" font-size="12.6" textLength="48.6" lengthAdjust="spacingAndGlyphs" font-family="Liberation Sans" fill="none" stroke="#ffffff" stroke-opacity="0.8" stroke-width="2.2" stroke-linejoin="round">Günzburg</text>
<text x="933.7" y="594.5" font-size="12.6" textLength="48.6" lengthAdjust="spacingAndGlyphs" font-family="Liberation Sans" fill="#363636">Günzburg</text>
<text x="885.6" y="612.5" font-size="14.5" textLength="24.1" lengthAdjust="spacingAndGlyphs" font-family="Liberation Sans" fill="none" stroke="#ffffff" stroke-opacity="0.8" stroke-width="2.2" stroke-linejoin="round">Ulm</text>
<text x="885.6" y="612.5" font-size="14.5" textLength="24.1" lengthAdjust="spacingAndGlyphs" font-family="Liberation Sans" fill="#222">Ulm</text>
<text x="1062.5" y="621.5" font-size="14.5" textLength="55.9" lengthAdjust="spacingAndGlyphs" font-family="Liberation Sans" fill="none" stroke="#ffffff" stroke-opacity="0.8" stroke-width="2.2" stroke-linejoin="round">Augsburg</text>
<text x="1062.5" y="621.5" font-size="14.5" textLength="55.9" lengthAdjust="spacingAndGlyphs" font-family="Liberation Sans" fill="#222">Augsburg</text>
<text x="1251.0" y="613.3" font-size="12.6" textLength="51.0" lengthAdjust="spacingAndGlyphs" font-family="Liberation Sans" fill="none" stroke="#ffffff" stroke-opacity="0.8" stroke-width="2.2" stroke-linejoin="round">Freising</text>
<text x="1251.0" y="613.3" font-size="12.6" textLength="51.0" lengthAdjust="spacingAndGlyphs" font-family="Liberation Sans" fill="#363636">Freising</text>
<circle cx="397.0" cy="4.0" r="13.6" fill="#b72b2f"/>
<circle cx="385.0" cy="17.0" r="13.6" fill="#b72b2f"/>
<circle cx="411.0" cy="44.0" r="13.6" fill="#b72b2f"/>
<circle cx="421.0" cy="66.0" r="13.6" fill="#b72b2f"/>
<circle cx="451.0" cy="104.0" r="13.6" fill="#b72b2f"/>
<circle cx="478.0" cy="94.0" r="13.6" fill="#b72b2f"/>
<circle cx="531.0" cy="93.0" r="13.6" fill="#b72b2f"/>
<circle cx="547.0" cy="139.0" r="13.6" fill="#b72b2f"/>
<circle cx="553.0" cy="216.0" r="13.6" fill="#b72b2f"/>
<circle cx="569.0" cy="266.0" r="13.6" fill="#b72b2f"/>
<circle cx="568.0" cy="318.0" r="13.6" fill="#b72b2f"/>
<circle cx="563.0" cy="340.0" r="13.6" fill="#b72b2f"/>
<circle cx="538.0" cy="410.0" r="13.6" fill="#b72b2f"/>
<circle cx="501.0" cy="460.0" r="13.6" fill="#b72b2f"/>
<circle cx="498.0" cy="472.0" r="13.6" fill="#b72b2f"/>
<circle cx="432.0" cy="564.0" r="13.6" fill="#b72b2f"/>
<circle cx="415.0" cy="622.0" r="13.6" fill="#b72b2f"/>
<circle cx="404.0" cy="658.0" r="13.6" fill="#b72b2f"/>
<circle cx="390.0" cy="-8.0" r="13.6" fill="#2f6497"/>
<circle cx="449.0" cy="-11.0" r="13.6" fill="#2f6497"/>
<circle cx="568.0" cy="89.0" r="13.6" fill="#dc3713"/>
<circle cx="625.0" cy="60.0" r="13.6" fill="#dc3713"/>
<circle cx="676.0" cy="68.0" r="13.6" fill="#dc3713"/>
<circle cx="693.0" cy="89.0" r="13.6" fill="#dc3713"/>
<circle cx="713.0" cy="117.0" r="13.6" fill="#dc3713"/>
<circle cx="735.0" cy="190.0" r="13.6" fill="#dc3713"/>
<circle cx="779.0" cy="166.0" r="13.6" fill="#dc3713"/>
<circle cx="796.0" cy="174.0" r="13.6" fill="#dc3713"/>
<circle cx="814.0" cy="91.0" r="13.6" fill="#dc3713"/>
<circle cx="883.0" cy="162.0" r="13.6" fill="#dc3713"/>
<circle cx="946.0" cy="84.0" r="13.6" fill="#dc3713"/>
<circle cx="945.0" cy="142.0" r="13.6" fill="#dc3713"/>
<circle cx="1060.0" cy="118.0" r="13.6" fill="#dc3713"/>
<circle cx="1092.0" cy="134.0" r="13.6" fill="#2f6497"/>
<circle cx="1258.0" cy="431.0" r="13.6" fill="#2f6497"/>
<circle cx="775.0" cy="518.0" r="13.6" fill="#2f6497"/>
<circle cx="572.0" cy="262.0" r="13.6" fill="#0c96c6"/>
<circle cx="625.0" cy="288.0" r="13.6" fill="#0c96c6"/>
<circle cx="686.0" cy="280.0" r="13.6" fill="#0c96c6"/>
<circle cx="718.0" cy="332.0" r="13.6" fill="#0c96c6"/>
<circle cx="719.5" cy="399.0" r="13.6" fill="#0c96c6"/>
<circle cx="718.0" cy="422.0" r="13.6" fill="#0c96c6"/>
<circle cx="727.0" cy="426.0" r="13.6" fill="#0c96c6"/>
<circle cx="736.0" cy="446.0" r="13.6" fill="#0c96c6"/>
<circle cx="295.0" cy="47.0" r="13.6" fill="#12961b"/>
<circle cx="262.0" cy="111.0" r="13.6" fill="#12961b"/>
<circle cx="196.0" cy="167.0" r="13.6" fill="#12961b"/>
<circle cx="179.0" cy="183.0" r="13.6" fill="#12961b"/>
<circle cx="132.0" cy="225.0" r="13.6" fill="#12961b"/>
<circle cx="124.0" cy="269.0" r="13.6" fill="#12961b"/>
<circle cx="184.0" cy="290.0" r="13.6" fill="#fd9400"/>
<circle cx="264.0" cy="354.0" r="13.6" fill="#fd9400"/>
</svg></div>
<!-- mapbox logo -->
<svg class="a" style="left:384px;top:867px" width="90" height="23" viewBox="0 0 90 23">
<circle cx="11.8" cy="11.5" r="9.3" fill="#fff" stroke="#8c8e80" stroke-width="1.3"/>
<path d="M7.5 16 V8.5 A5 5 0 0 1 12.5 7 A4.6 4.6 0 0 1 12.5 16Z" fill="#8c8e80"/>
<path d="M11.8 9 L12.6 11 L14.6 11.6 L12.6 12.3 L11.8 14.3 L11 12.3 L9 11.6 L11 11Z" fill="#fff"/>
<text x="24.5" y="15.6" font-size="16.2" font-weight="700" font-family="Liberation Sans" fill="#fff" stroke="#8c8e80" stroke-width="1.4" paint-order="stroke" textLength="61" lengthAdjust="spacingAndGlyphs">mapbox</text>
</svg>
<!-- attribution -->
<div class="a" style="left:1385px;top:876px;width:270px;height:20px;background:rgba(255,255,255,0.5)"></div>
<div class="a" style="left:1390px;top:879px;font-size:12px;line-height:14px;color:rgba(0,0,0,0.75)">© Mapbox © OpenStreetMap&nbsp;&nbsp;<b style="letter-spacing:-0.1px">Improve this map</b></div>
<!-- tooltip -->
<div class="a" style="left:891px;top:703px;width:300px;height:66px;background:rgba(0,0,0,0.8)"></div>
<div class="a" style="left:899px;top:712px;font-size:12.5px;line-height:17px;color:#fff;white-space:pre;letter-spacing:0.15px">Longitude and Latitude: <b style="letter-spacing:0.35px">8.1359273095,</b>
<b style="letter-spacing:0.45px">48.8859674221</b>
Category: <b>RHEIN</b></div>
<!-- hand cursor -->
<svg class="a" style="left:866px;top:681px" width="28" height="27" viewBox="0 0 26 27" preserveAspectRatio="none">
<path d="M8.8 14 V5.5 a1.35 1.35 0 0 1 2.7 0 V12 V4 a1.4 1.4 0 0 1 2.8 0 V12 V4.5 a1.4 1.4 0 0 1 2.8 0 V12 V7 a1.3 1.3 0 0 1 2.6 0 V19.5 Q22.7 24.5 18.5 24.5 H12.8 Q10.8 24.5 9.3 22.5 L3.6 15.3 a1.5 1.5 0 0 1 2.3 -1.9 L8.8 15.8 Z" fill="#3b3b3b" stroke="#fff" stroke-width="1.2" stroke-linejoin="round"/>
</svg>

</body></html>
